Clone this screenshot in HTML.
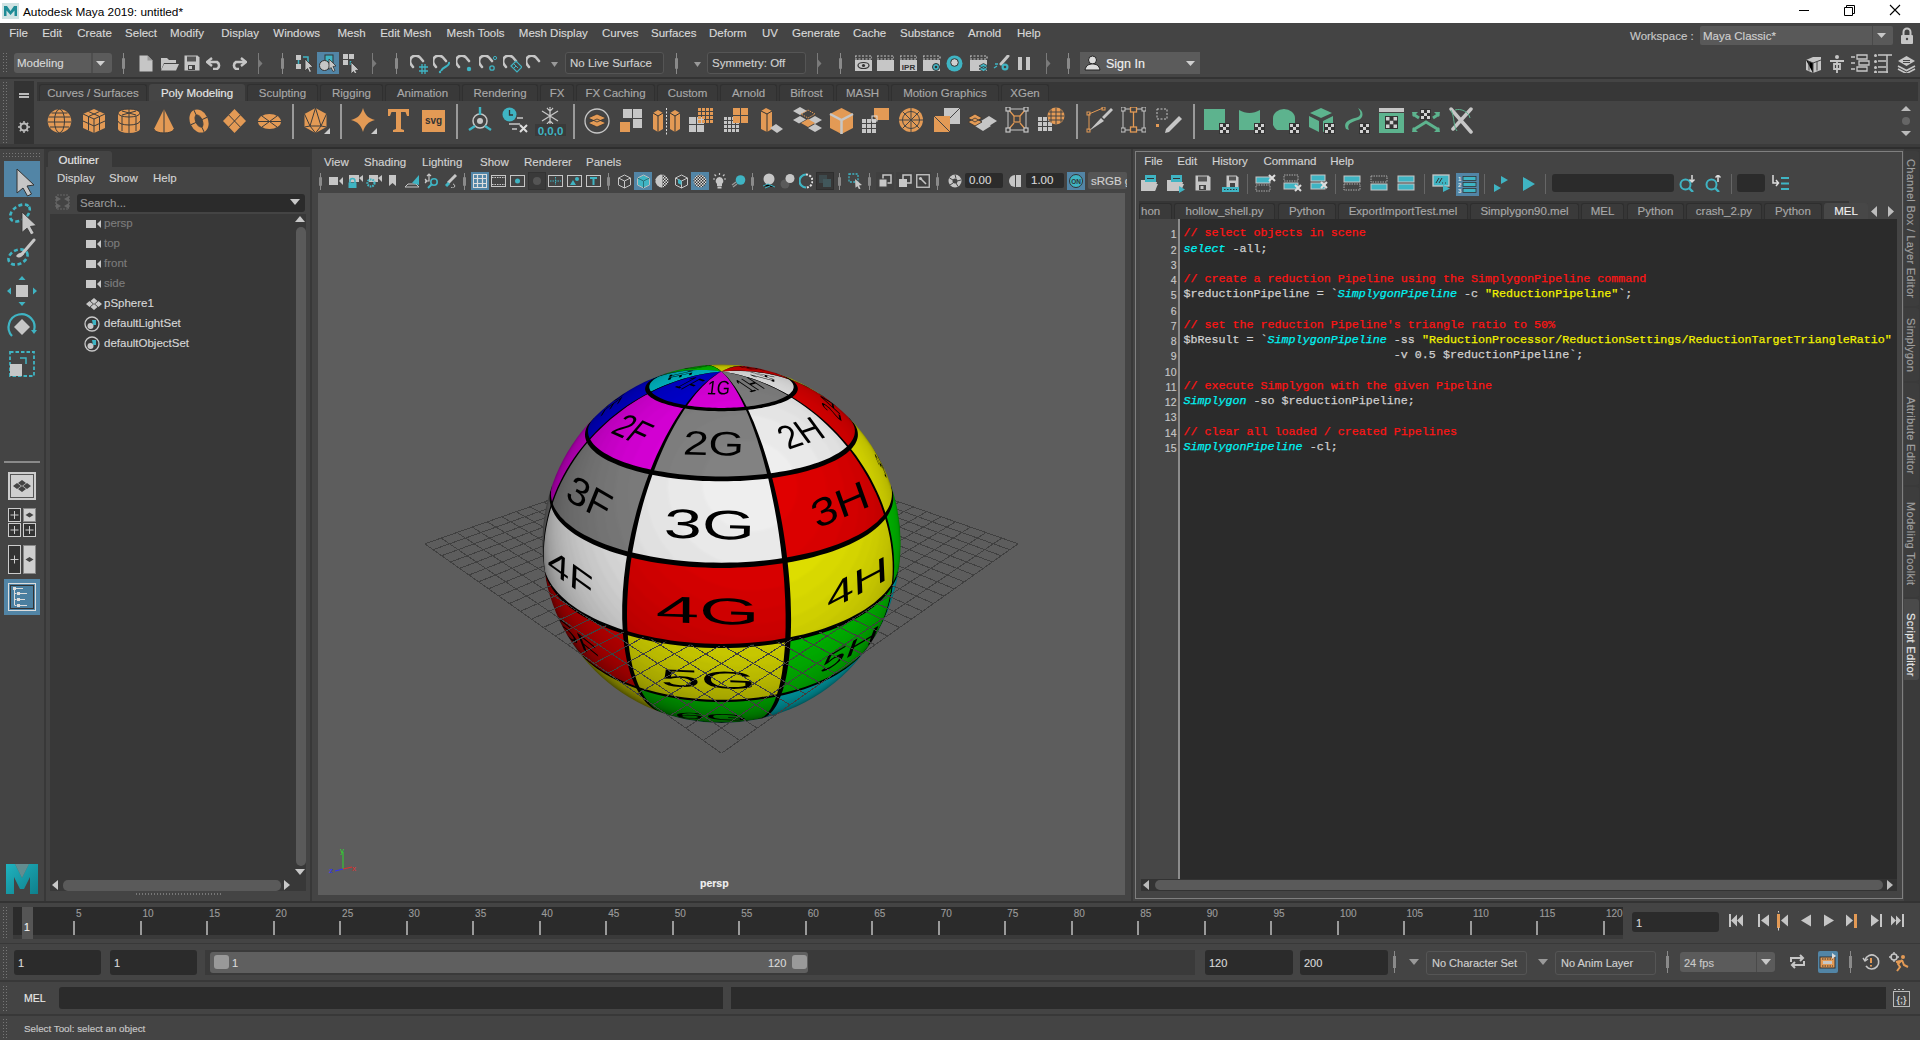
<!DOCTYPE html>
<html><head><meta charset="utf-8"><style>
html,body{margin:0;padding:0;width:1920px;height:1040px;overflow:hidden;background:#444;}
body{position:relative;font-family:"Liberation Sans",sans-serif;}
div,svg{position:absolute;box-sizing:border-box;}
.t{white-space:pre;line-height:1;-webkit-text-stroke:0.15px currentColor;}
.m{font-family:"Liberation Mono",monospace;-webkit-text-stroke:0.25px currentColor;}
</style></head><body>
<div style="left:0px;top:0px;width:1920px;height:23px;background:#ffffff;"></div>
<svg style="left:2px;top:3px;" width="17" height="16" viewBox="0 0 17 16"><rect width="17" height="16" fill="#cfe3e3"/><path d="M2 13V3h3l3.5 5L12 3h3v10h-2.5V7.5L8.5 12 4.5 7.5V13z" fill="#1e8c96"/></svg>
<div class="t" style="left:23.0px;top:6.8px;font-size:11.8px;color:#000;-webkit-text-stroke:0;">Autodesk Maya 2019: untitled*</div>
<svg style="left:1795px;top:3px;" width="110" height="15" viewBox="0 0 110 15"><path d="M4 7.5h10" stroke="#000" stroke-width="1"/><path d="M49.5 4.5h8v8h-8z M51.5 4.5v-2h8v8h-2" stroke="#000" stroke-width="1" fill="none"/><path d="M95 2l10 10M105 2L95 12" stroke="#000" stroke-width="1.1"/></svg>
<div style="left:0px;top:23px;width:1920px;height:54px;background:#444444;"></div>
<div class="t" style="left:9.3px;top:28.3px;font-size:11.5px;color:#d8d8d8;">File</div>
<div class="t" style="left:42.2px;top:28.3px;font-size:11.5px;color:#d8d8d8;">Edit</div>
<div class="t" style="left:77.3px;top:28.3px;font-size:11.5px;color:#d8d8d8;">Create</div>
<div class="t" style="left:125.1px;top:28.3px;font-size:11.5px;color:#d8d8d8;">Select</div>
<div class="t" style="left:170.1px;top:28.3px;font-size:11.5px;color:#d8d8d8;">Modify</div>
<div class="t" style="left:221.3px;top:28.3px;font-size:11.5px;color:#d8d8d8;">Display</div>
<div class="t" style="left:273.3px;top:28.3px;font-size:11.5px;color:#d8d8d8;">Windows</div>
<div class="t" style="left:337.5px;top:28.3px;font-size:11.5px;color:#d8d8d8;">Mesh</div>
<div class="t" style="left:380.2px;top:28.3px;font-size:11.5px;color:#d8d8d8;">Edit Mesh</div>
<div class="t" style="left:446.6px;top:28.3px;font-size:11.5px;color:#d8d8d8;">Mesh Tools</div>
<div class="t" style="left:518.8px;top:28.3px;font-size:11.5px;color:#d8d8d8;">Mesh Display</div>
<div class="t" style="left:602.0px;top:28.3px;font-size:11.5px;color:#d8d8d8;">Curves</div>
<div class="t" style="left:651.0px;top:28.3px;font-size:11.5px;color:#d8d8d8;">Surfaces</div>
<div class="t" style="left:709.0px;top:28.3px;font-size:11.5px;color:#d8d8d8;">Deform</div>
<div class="t" style="left:762.0px;top:28.3px;font-size:11.5px;color:#d8d8d8;">UV</div>
<div class="t" style="left:792.0px;top:28.3px;font-size:11.5px;color:#d8d8d8;">Generate</div>
<div class="t" style="left:853.0px;top:28.3px;font-size:11.5px;color:#d8d8d8;">Cache</div>
<div class="t" style="left:900.0px;top:28.3px;font-size:11.5px;color:#d8d8d8;">Substance</div>
<div class="t" style="left:968.0px;top:28.3px;font-size:11.5px;color:#d8d8d8;">Arnold</div>
<div class="t" style="left:1017.0px;top:28.3px;font-size:11.5px;color:#d8d8d8;">Help</div>
<div class="t" style="left:1630.0px;top:30.8px;font-size:11.5px;color:#c8c8c8;">Workspace :</div>
<div style="left:1700px;top:26px;width:193px;height:19px;background:#595959;border-radius:2px;"></div>
<div style="left:1872px;top:26px;width:1px;height:19px;background:#4a4a4a;"></div>
<div class="t" style="left:1703.0px;top:30.8px;font-size:11.5px;color:#d0d0d0;">Maya Classic*</div>
<div style="left:2px;top:52px;width:6px;height:21px;background-image:radial-gradient(circle,#777 0.8px,transparent 1px);background-size:3px 3px;"></div>
<div style="left:14px;top:53px;width:98px;height:20px;background:#5b5b5b;border-radius:3px;"></div>
<div style="left:91px;top:53px;width:2px;height:20px;background:#4e4e4e;"></div>
<div class="t" style="left:17.0px;top:57.8px;font-size:11.5px;color:#d8d8d8;">Modeling</div>
<div style="left:0px;top:77px;width:1920px;height:2px;background:#333;"></div>
<div style="left:0px;top:79px;width:1920px;height:67px;background:#444444;"></div>
<div style="left:2px;top:81px;width:6px;height:62px;background-image:radial-gradient(circle,#777 0.8px,transparent 1px);background-size:3px 3px;"></div>
<div style="left:14px;top:81px;width:20px;height:63px;background:#333333;"></div>
<div style="left:37px;top:82px;width:1881px;height:19px;background:#373737;"></div>
<div style="left:39px;top:84px;width:108px;height:17px;background:#393939;border-radius:3px 3px 0 0;border:1px solid #303030;border-bottom:none;"></div>
<div class="t" style="left:93.0px;top:87.8px;font-size:11.5px;color:#a8a8a8;transform:translateX(-50%);">Curves / Surfaces</div>
<div style="left:149px;top:84px;width:96px;height:17px;background:#454545;border-radius:3px 3px 0 0;"></div>
<div class="t" style="left:197.0px;top:87.8px;font-size:11.5px;color:#e6e6e6;transform:translateX(-50%);">Poly Modeling</div>
<div style="left:247px;top:84px;width:71px;height:17px;background:#393939;border-radius:3px 3px 0 0;border:1px solid #303030;border-bottom:none;"></div>
<div class="t" style="left:282.5px;top:87.8px;font-size:11.5px;color:#a8a8a8;transform:translateX(-50%);">Sculpting</div>
<div style="left:320px;top:84px;width:63px;height:17px;background:#393939;border-radius:3px 3px 0 0;border:1px solid #303030;border-bottom:none;"></div>
<div class="t" style="left:351.5px;top:87.8px;font-size:11.5px;color:#a8a8a8;transform:translateX(-50%);">Rigging</div>
<div style="left:385px;top:84px;width:75px;height:17px;background:#393939;border-radius:3px 3px 0 0;border:1px solid #303030;border-bottom:none;"></div>
<div class="t" style="left:422.5px;top:87.8px;font-size:11.5px;color:#a8a8a8;transform:translateX(-50%);">Animation</div>
<div style="left:462px;top:84px;width:76px;height:17px;background:#393939;border-radius:3px 3px 0 0;border:1px solid #303030;border-bottom:none;"></div>
<div class="t" style="left:500.0px;top:87.8px;font-size:11.5px;color:#a8a8a8;transform:translateX(-50%);">Rendering</div>
<div style="left:540px;top:84px;width:34px;height:17px;background:#393939;border-radius:3px 3px 0 0;border:1px solid #303030;border-bottom:none;"></div>
<div class="t" style="left:557.0px;top:87.8px;font-size:11.5px;color:#a8a8a8;transform:translateX(-50%);">FX</div>
<div style="left:576px;top:84px;width:79px;height:17px;background:#393939;border-radius:3px 3px 0 0;border:1px solid #303030;border-bottom:none;"></div>
<div class="t" style="left:615.5px;top:87.8px;font-size:11.5px;color:#a8a8a8;transform:translateX(-50%);">FX Caching</div>
<div style="left:657px;top:84px;width:61px;height:17px;background:#393939;border-radius:3px 3px 0 0;border:1px solid #303030;border-bottom:none;"></div>
<div class="t" style="left:687.5px;top:87.8px;font-size:11.5px;color:#a8a8a8;transform:translateX(-50%);">Custom</div>
<div style="left:720px;top:84px;width:57px;height:17px;background:#393939;border-radius:3px 3px 0 0;border:1px solid #303030;border-bottom:none;"></div>
<div class="t" style="left:748.5px;top:87.8px;font-size:11.5px;color:#a8a8a8;transform:translateX(-50%);">Arnold</div>
<div style="left:779px;top:84px;width:55px;height:17px;background:#393939;border-radius:3px 3px 0 0;border:1px solid #303030;border-bottom:none;"></div>
<div class="t" style="left:806.5px;top:87.8px;font-size:11.5px;color:#a8a8a8;transform:translateX(-50%);">Bifrost</div>
<div style="left:836px;top:84px;width:53px;height:17px;background:#393939;border-radius:3px 3px 0 0;border:1px solid #303030;border-bottom:none;"></div>
<div class="t" style="left:862.5px;top:87.8px;font-size:11.5px;color:#a8a8a8;transform:translateX(-50%);">MASH</div>
<div style="left:891px;top:84px;width:108px;height:17px;background:#393939;border-radius:3px 3px 0 0;border:1px solid #303030;border-bottom:none;"></div>
<div class="t" style="left:945.0px;top:87.8px;font-size:11.5px;color:#a8a8a8;transform:translateX(-50%);">Motion Graphics</div>
<div style="left:1001px;top:84px;width:48px;height:17px;background:#393939;border-radius:3px 3px 0 0;border:1px solid #303030;border-bottom:none;"></div>
<div class="t" style="left:1025.0px;top:87.8px;font-size:11.5px;color:#a8a8a8;transform:translateX(-50%);">XGen</div>
<div style="left:0px;top:144px;width:1920px;height:3px;background:#3b3b3b;"></div>
<div style="left:0px;top:147px;width:1920px;height:2px;background:#2e2e2e;"></div>
<div style="left:0px;top:149px;width:44px;height:752px;background:#444444;"></div>
<div style="left:44px;top:149px;width:2px;height:752px;background:#383838;"></div>
<div style="left:2px;top:152px;width:40px;height:5px;background-image:radial-gradient(circle,#777 0.8px,transparent 1px);background-size:3px 3px;"></div>
<div style="left:4px;top:161px;width:36px;height:36px;background:#5285a6;"></div>
<div style="left:4px;top:461px;width:36px;height:2px;background:#8a8a8a;"></div>
<div style="left:4px;top:579px;width:36px;height:36px;background:#5285a6;"></div>
<div style="left:46px;top:149px;width:264px;height:752px;background:#444444;"></div>
<div style="left:46px;top:149px;width:265px;height:18px;background:#373737;"></div>
<div style="left:48px;top:151px;width:64px;height:16px;background:#444444;border-radius:3px 3px 0 0;"></div>
<div class="t" style="left:58.5px;top:154.8px;font-size:11.5px;color:#e6e6e6;">Outliner</div>
<div class="t" style="left:57.0px;top:172.8px;font-size:11.5px;color:#d2d2d2;">Display</div>
<div class="t" style="left:109.0px;top:172.8px;font-size:11.5px;color:#d2d2d2;">Show</div>
<div class="t" style="left:153.0px;top:172.8px;font-size:11.5px;color:#d2d2d2;">Help</div>
<div style="left:77px;top:194px;width:228px;height:18px;background:#2b2b2b;border-radius:3px;"></div>
<div class="t" style="left:80.0px;top:198.3px;font-size:11.5px;color:#9a9a9a;">Search...</div>
<div style="left:50px;top:214px;width:256px;height:677px;background:#383838;"></div>
<div class="t" style="left:104.0px;top:217.8px;font-size:11.5px;color:#7c7c7c;">persp</div>
<div class="t" style="left:104.0px;top:237.8px;font-size:11.5px;color:#7c7c7c;">top</div>
<div class="t" style="left:104.0px;top:257.8px;font-size:11.5px;color:#7c7c7c;">front</div>
<div class="t" style="left:104.0px;top:277.8px;font-size:11.5px;color:#7c7c7c;">side</div>
<div class="t" style="left:104.0px;top:297.8px;font-size:11.5px;color:#d6d6d6;">pSphere1</div>
<div class="t" style="left:104.0px;top:317.8px;font-size:11.5px;color:#d6d6d6;">defaultLightSet</div>
<div class="t" style="left:104.0px;top:337.8px;font-size:11.5px;color:#d6d6d6;">defaultObjectSet</div>
<div style="left:296px;top:227px;width:10px;height:639px;background:#5a5a5a;border-radius:5px;"></div>
<div style="left:63px;top:880px;width:218px;height:11px;background:#5a5a5a;border-radius:5px;"></div>
<div style="left:135px;top:893px;width:86px;height:2px;background-image:radial-gradient(circle,#777 0.7px,transparent 0.9px);background-size:3px 2px;"></div>
<div style="left:310px;top:149px;width:2px;height:752px;background:#383838;"></div>
<div style="left:312px;top:149px;width:819px;height:752px;background:#444444;"></div>
<div class="t" style="left:324.0px;top:156.8px;font-size:11.5px;color:#d2d2d2;">View</div>
<div class="t" style="left:364.0px;top:156.8px;font-size:11.5px;color:#d2d2d2;">Shading</div>
<div class="t" style="left:422.0px;top:156.8px;font-size:11.5px;color:#d2d2d2;">Lighting</div>
<div class="t" style="left:480.0px;top:156.8px;font-size:11.5px;color:#d2d2d2;">Show</div>
<div class="t" style="left:524.0px;top:156.8px;font-size:11.5px;color:#d2d2d2;">Renderer</div>
<div class="t" style="left:586.0px;top:156.8px;font-size:11.5px;color:#d2d2d2;">Panels</div>
<div style="left:318px;top:193px;width:807px;height:702px;background:#5d5d5d;"></div>
<div style="left:1131px;top:149px;width:2px;height:752px;background:#383838;"></div>
<div style="left:1133px;top:149px;width:771px;height:752px;background:#444444;"></div>
<div style="left:1135px;top:151px;width:768px;height:748px;border:1px solid #7f7f7f;"></div>
<div class="t" style="left:1144.2px;top:156.3px;font-size:11.5px;color:#d2d2d2;">File</div>
<div class="t" style="left:1177.3px;top:156.3px;font-size:11.5px;color:#d2d2d2;">Edit</div>
<div class="t" style="left:1212.0px;top:156.3px;font-size:11.5px;color:#d2d2d2;">History</div>
<div class="t" style="left:1263.4px;top:156.3px;font-size:11.5px;color:#d2d2d2;">Command</div>
<div class="t" style="left:1330.3px;top:156.3px;font-size:11.5px;color:#d2d2d2;">Help</div>
<div style="left:1552px;top:174px;width:122px;height:18px;background:#2b2b2b;border-radius:3px;"></div>
<div style="left:1737px;top:174px;width:28px;height:18px;background:#2b2b2b;border-radius:3px;"></div>
<div style="left:1139px;top:201px;width:710px;height:18px;background:#363636;"></div>
<div style="left:1139px;top:203px;width:33px;height:16px;background:#3a3a3a;border:1px solid #2e2e2e;border-bottom:none;border-radius:3px 3px 0 0;"></div>
<div class="t" style="left:1141.0px;top:205.8px;font-size:11.5px;color:#a8a8a8;">hon</div>
<div style="left:1174px;top:203px;width:101px;height:16px;background:#3a3a3a;border:1px solid #2e2e2e;border-bottom:none;border-radius:3px 3px 0 0;"></div>
<div class="t" style="left:1224.5px;top:205.8px;font-size:11.5px;color:#a8a8a8;transform:translateX(-50%);">hollow_shell.py</div>
<div style="left:1278px;top:203px;width:58px;height:16px;background:#3a3a3a;border:1px solid #2e2e2e;border-bottom:none;border-radius:3px 3px 0 0;"></div>
<div class="t" style="left:1307.0px;top:205.8px;font-size:11.5px;color:#a8a8a8;transform:translateX(-50%);">Python</div>
<div style="left:1338px;top:203px;width:130px;height:16px;background:#3a3a3a;border:1px solid #2e2e2e;border-bottom:none;border-radius:3px 3px 0 0;"></div>
<div class="t" style="left:1403.0px;top:205.8px;font-size:11.5px;color:#a8a8a8;transform:translateX(-50%);">ExportImportTest.mel</div>
<div style="left:1470px;top:203px;width:109px;height:16px;background:#3a3a3a;border:1px solid #2e2e2e;border-bottom:none;border-radius:3px 3px 0 0;"></div>
<div class="t" style="left:1524.5px;top:205.8px;font-size:11.5px;color:#a8a8a8;transform:translateX(-50%);">Simplygon90.mel</div>
<div style="left:1581px;top:203px;width:43px;height:16px;background:#3a3a3a;border:1px solid #2e2e2e;border-bottom:none;border-radius:3px 3px 0 0;"></div>
<div class="t" style="left:1602.5px;top:205.8px;font-size:11.5px;color:#a8a8a8;transform:translateX(-50%);">MEL</div>
<div style="left:1627px;top:203px;width:57px;height:16px;background:#3a3a3a;border:1px solid #2e2e2e;border-bottom:none;border-radius:3px 3px 0 0;"></div>
<div class="t" style="left:1655.5px;top:205.8px;font-size:11.5px;color:#a8a8a8;transform:translateX(-50%);">Python</div>
<div style="left:1686px;top:203px;width:76px;height:16px;background:#3a3a3a;border:1px solid #2e2e2e;border-bottom:none;border-radius:3px 3px 0 0;"></div>
<div class="t" style="left:1724.0px;top:205.8px;font-size:11.5px;color:#a8a8a8;transform:translateX(-50%);">crash_2.py</div>
<div style="left:1764px;top:203px;width:58px;height:16px;background:#3a3a3a;border:1px solid #2e2e2e;border-bottom:none;border-radius:3px 3px 0 0;"></div>
<div class="t" style="left:1793.0px;top:205.8px;font-size:11.5px;color:#a8a8a8;transform:translateX(-50%);">Python</div>
<div style="left:1824px;top:203px;width:44px;height:16px;background:#474747;border:1px solid #474747;border-bottom:none;border-radius:3px 3px 0 0;"></div>
<div class="t" style="left:1846.0px;top:205.8px;font-size:11.5px;color:#f0f0f0;transform:translateX(-50%);">MEL</div>
<div style="left:1140px;top:219px;width:757px;height:660px;background:#2b2b2b;"></div>
<div style="left:1140px;top:219px;width:38px;height:660px;background:#474747;"></div>
<div style="left:1178px;top:219px;width:2px;height:660px;background:#8c8c8c;"></div>
<div style="left:1141px;top:879px;width:756px;height:12px;background:#333;"></div>
<div style="left:1155px;top:880px;width:728px;height:10px;background:#5a5a5a;border-radius:5px;"></div>
<div style="left:1904px;top:149px;width:16px;height:753px;background:#3a3a3a;"></div>
<div style="left:0px;top:901px;width:1920px;height:2px;background:#333;"></div>
<div style="left:0px;top:903px;width:1920px;height:39px;background:#444444;"></div>
<div style="left:2px;top:906px;width:6px;height:32px;background-image:radial-gradient(circle,#777 0.8px,transparent 1px);background-size:3px 3px;"></div>
<div style="left:13px;top:907px;width:1610px;height:32px;background:#3a3a3a;"></div>
<div style="left:13px;top:907px;width:1610px;height:28px;background:#2b2b2b;"></div>
<div style="left:22px;top:907px;width:11px;height:32px;background:#555;"></div>
<div style="left:0px;top:943px;width:1920px;height:2px;background:#383838;"></div>
<div style="left:0px;top:944px;width:1920px;height:37px;background:#444444;"></div>
<div style="left:2px;top:946px;width:6px;height:32px;background-image:radial-gradient(circle,#777 0.8px,transparent 1px);background-size:3px 3px;"></div>
<div style="left:14px;top:950px;width:87px;height:25px;background:#2b2b2b;border-radius:3px;"></div>
<div style="left:110px;top:950px;width:87px;height:25px;background:#2b2b2b;border-radius:3px;"></div>
<div style="left:205px;top:950px;width:990px;height:25px;background:#3a3a3a;"></div>
<div style="left:210px;top:952px;width:598px;height:21px;background:#5f5f5f;border-radius:3px;"></div>
<div style="left:214px;top:955px;width:15px;height:14px;background:#999;border-radius:3px;"></div>
<div style="left:792px;top:955px;width:15px;height:14px;background:#999;border-radius:3px;"></div>
<div class="t" style="left:232.0px;top:957.7px;font-size:11px;color:#d8d8d8;">1</div>
<div class="t" style="left:768.0px;top:957.7px;font-size:11px;color:#d8d8d8;">120</div>
<div style="left:1205px;top:950px;width:88px;height:25px;background:#2b2b2b;border-radius:3px;"></div>
<div style="left:1300px;top:950px;width:88px;height:25px;background:#2b2b2b;border-radius:3px;"></div>
<div class="t" style="left:1209.0px;top:957.7px;font-size:11px;color:#d8d8d8;">120</div>
<div class="t" style="left:1304.0px;top:957.7px;font-size:11px;color:#d8d8d8;">200</div>
<div class="t" style="left:18.0px;top:957.7px;font-size:11px;color:#d8d8d8;">1</div>
<div class="t" style="left:114.0px;top:957.7px;font-size:11px;color:#d8d8d8;">1</div>
<div style="left:1426px;top:951px;width:101px;height:24px;border:1px solid #555;border-radius:3px;"></div>
<div class="t" style="left:1432.0px;top:957.7px;font-size:11px;color:#d0d0d0;">No Character Set</div>
<div style="left:1555px;top:951px;width:101px;height:24px;border:1px solid #555;border-radius:3px;"></div>
<div class="t" style="left:1561.0px;top:957.7px;font-size:11px;color:#d0d0d0;">No Anim Layer</div>
<div style="left:1680px;top:952px;width:95px;height:20px;background:#5b5b5b;border-radius:3px;"></div>
<div style="left:1756px;top:952px;width:1px;height:20px;background:#4a4a4a;"></div>
<div class="t" style="left:1684.0px;top:957.7px;font-size:11px;color:#c8c8c8;">24 fps</div>
<div style="left:1818px;top:951px;width:20px;height:22px;background:#5285a6;border-radius:2px;"></div>
<div style="left:0px;top:980px;width:1920px;height:2px;background:#383838;"></div>
<div style="left:0px;top:982px;width:1920px;height:33px;background:#444444;"></div>
<div style="left:2px;top:985px;width:6px;height:26px;background-image:radial-gradient(circle,#777 0.8px,transparent 1px);background-size:3px 3px;"></div>
<div class="t" style="left:24.0px;top:993.1px;font-size:10.5px;color:#e8e8e8;">MEL</div>
<div style="left:59px;top:987px;width:664px;height:22px;background:#2b2b2b;border-radius:3px 0 0 3px;"></div>
<div style="left:731px;top:987px;width:1155px;height:22px;background:#2b2b2b;"></div>
<div style="left:0px;top:1014px;width:1920px;height:2px;background:#383838;"></div>
<div style="left:0px;top:1016px;width:1920px;height:24px;background:#444444;"></div>
<div style="left:2px;top:1018px;width:6px;height:20px;background-image:radial-gradient(circle,#777 0.8px,transparent 1px);background-size:3px 3px;"></div>
<div class="t" style="left:24.0px;top:1023.7px;font-size:9.8px;color:#c8c8c8;">Select Tool: select an object</div>
<div style="left:73px;top:921px;width:2px;height:14px;background:#9a9a9a;"></div>
<div class="t" style="left:76.0px;top:909.0px;font-size:10px;color:#9a9a9a;">5</div>
<div style="left:140px;top:921px;width:2px;height:14px;background:#9a9a9a;"></div>
<div class="t" style="left:142.5px;top:909.0px;font-size:10px;color:#9a9a9a;">10</div>
<div style="left:206px;top:921px;width:2px;height:14px;background:#9a9a9a;"></div>
<div class="t" style="left:209.0px;top:909.0px;font-size:10px;color:#9a9a9a;">15</div>
<div style="left:273px;top:921px;width:2px;height:14px;background:#9a9a9a;"></div>
<div class="t" style="left:275.6px;top:909.0px;font-size:10px;color:#9a9a9a;">20</div>
<div style="left:339px;top:921px;width:2px;height:14px;background:#9a9a9a;"></div>
<div class="t" style="left:342.1px;top:909.0px;font-size:10px;color:#9a9a9a;">25</div>
<div style="left:406px;top:921px;width:2px;height:14px;background:#9a9a9a;"></div>
<div class="t" style="left:408.6px;top:909.0px;font-size:10px;color:#9a9a9a;">30</div>
<div style="left:472px;top:921px;width:2px;height:14px;background:#9a9a9a;"></div>
<div class="t" style="left:475.1px;top:909.0px;font-size:10px;color:#9a9a9a;">35</div>
<div style="left:539px;top:921px;width:2px;height:14px;background:#9a9a9a;"></div>
<div class="t" style="left:541.6px;top:909.0px;font-size:10px;color:#9a9a9a;">40</div>
<div style="left:605px;top:921px;width:2px;height:14px;background:#9a9a9a;"></div>
<div class="t" style="left:608.2px;top:909.0px;font-size:10px;color:#9a9a9a;">45</div>
<div style="left:672px;top:921px;width:2px;height:14px;background:#9a9a9a;"></div>
<div class="t" style="left:674.7px;top:909.0px;font-size:10px;color:#9a9a9a;">50</div>
<div style="left:738px;top:921px;width:2px;height:14px;background:#9a9a9a;"></div>
<div class="t" style="left:741.2px;top:909.0px;font-size:10px;color:#9a9a9a;">55</div>
<div style="left:805px;top:921px;width:2px;height:14px;background:#9a9a9a;"></div>
<div class="t" style="left:807.7px;top:909.0px;font-size:10px;color:#9a9a9a;">60</div>
<div style="left:871px;top:921px;width:2px;height:14px;background:#9a9a9a;"></div>
<div class="t" style="left:874.2px;top:909.0px;font-size:10px;color:#9a9a9a;">65</div>
<div style="left:938px;top:921px;width:2px;height:14px;background:#9a9a9a;"></div>
<div class="t" style="left:940.8px;top:909.0px;font-size:10px;color:#9a9a9a;">70</div>
<div style="left:1004px;top:921px;width:2px;height:14px;background:#9a9a9a;"></div>
<div class="t" style="left:1007.3px;top:909.0px;font-size:10px;color:#9a9a9a;">75</div>
<div style="left:1071px;top:921px;width:2px;height:14px;background:#9a9a9a;"></div>
<div class="t" style="left:1073.8px;top:909.0px;font-size:10px;color:#9a9a9a;">80</div>
<div style="left:1137px;top:921px;width:2px;height:14px;background:#9a9a9a;"></div>
<div class="t" style="left:1140.3px;top:909.0px;font-size:10px;color:#9a9a9a;">85</div>
<div style="left:1204px;top:921px;width:2px;height:14px;background:#9a9a9a;"></div>
<div class="t" style="left:1206.8px;top:909.0px;font-size:10px;color:#9a9a9a;">90</div>
<div style="left:1270px;top:921px;width:2px;height:14px;background:#9a9a9a;"></div>
<div class="t" style="left:1273.4px;top:909.0px;font-size:10px;color:#9a9a9a;">95</div>
<div style="left:1337px;top:921px;width:2px;height:14px;background:#9a9a9a;"></div>
<div class="t" style="left:1339.9px;top:909.0px;font-size:10px;color:#9a9a9a;">100</div>
<div style="left:1403px;top:921px;width:2px;height:14px;background:#9a9a9a;"></div>
<div class="t" style="left:1406.4px;top:909.0px;font-size:10px;color:#9a9a9a;">105</div>
<div style="left:1470px;top:921px;width:2px;height:14px;background:#9a9a9a;"></div>
<div class="t" style="left:1472.9px;top:909.0px;font-size:10px;color:#9a9a9a;">110</div>
<div style="left:1536px;top:921px;width:2px;height:14px;background:#9a9a9a;"></div>
<div class="t" style="left:1539.4px;top:909.0px;font-size:10px;color:#9a9a9a;">115</div>
<div style="left:1603px;top:921px;width:2px;height:14px;background:#9a9a9a;"></div>
<div class="t" style="left:1606.0px;top:909.0px;font-size:10px;color:#9a9a9a;">120</div>
<div class="t" style="left:24.0px;top:922.1px;font-size:10.5px;color:#f0f0f0;">1</div>
<div style="left:1632px;top:912px;width:87px;height:20px;background:#2b2b2b;border-radius:3px;"></div>
<div class="t" style="left:1636.0px;top:917.7px;font-size:11px;color:#d8d8d8;">1</div>
<div class="t" style="right:743.5px;top:229.3px;font-size:10.5px;color:#c8c8c8;">1</div>
<div class="t m" style="left:1183.4px;top:228.3px;font-size:11.7px;color:#d0d0d0;"><span style="color:#ff1414;">// select objects in scene</span></div>
<div class="t" style="right:743.5px;top:244.6px;font-size:10.5px;color:#c8c8c8;">2</div>
<div class="t m" style="left:1183.4px;top:243.5px;font-size:11.7px;color:#d0d0d0;"><span style="color:#00f2f2;font-style:italic;">select</span><span style="color:#d0d0d0;"> -all;</span></div>
<div class="t" style="right:743.5px;top:259.8px;font-size:10.5px;color:#c8c8c8;">3</div>
<div class="t" style="right:743.5px;top:275.1px;font-size:10.5px;color:#c8c8c8;">4</div>
<div class="t m" style="left:1183.4px;top:274.0px;font-size:11.7px;color:#d0d0d0;"><span style="color:#ff1414;">// create a reduction Pipeline using the SimplygonPipeline command</span></div>
<div class="t" style="right:743.5px;top:290.3px;font-size:10.5px;color:#c8c8c8;">5</div>
<div class="t m" style="left:1183.4px;top:289.3px;font-size:11.7px;color:#d0d0d0;"><span style="color:#d0d0d0;">$reductionPipeline = `</span><span style="color:#00f2f2;font-style:italic;">SimplygonPipeline</span><span style="color:#d0d0d0;"> -c </span><span style="color:#f2f200;">&quot;ReductionPipeline&quot;</span><span style="color:#d0d0d0;">`;</span></div>
<div class="t" style="right:743.5px;top:305.6px;font-size:10.5px;color:#c8c8c8;">6</div>
<div class="t" style="right:743.5px;top:320.8px;font-size:10.5px;color:#c8c8c8;">7</div>
<div class="t m" style="left:1183.4px;top:319.8px;font-size:11.7px;color:#d0d0d0;"><span style="color:#ff1414;">// set the reduction Pipeline&#x27;s triangle ratio to 50%</span></div>
<div class="t" style="right:743.5px;top:336.1px;font-size:10.5px;color:#c8c8c8;">8</div>
<div class="t m" style="left:1183.4px;top:335.0px;font-size:11.7px;color:#d0d0d0;"><span style="color:#d0d0d0;">$bResult = `</span><span style="color:#00f2f2;font-style:italic;">SimplygonPipeline</span><span style="color:#d0d0d0;"> -ss </span><span style="color:#f2f200;">&quot;ReductionProcessor/ReductionSettings/ReductionTargetTriangleRatio&quot;</span></div>
<div class="t" style="right:743.5px;top:351.3px;font-size:10.5px;color:#c8c8c8;">9</div>
<div class="t m" style="left:1183.4px;top:350.3px;font-size:11.7px;color:#d0d0d0;"><span style="color:#d0d0d0;">                              -v 0.5 $reductionPipeline`;</span></div>
<div class="t" style="right:743.5px;top:366.6px;font-size:10.5px;color:#c8c8c8;">10</div>
<div class="t" style="right:743.5px;top:381.8px;font-size:10.5px;color:#c8c8c8;">11</div>
<div class="t m" style="left:1183.4px;top:380.8px;font-size:11.7px;color:#d0d0d0;"><span style="color:#ff1414;">// execute Simplygon with the given Pipeline</span></div>
<div class="t" style="right:743.5px;top:397.1px;font-size:10.5px;color:#c8c8c8;">12</div>
<div class="t m" style="left:1183.4px;top:396.0px;font-size:11.7px;color:#d0d0d0;"><span style="color:#00f2f2;font-style:italic;">Simplygon</span><span style="color:#d0d0d0;"> -so $reductionPipeline;</span></div>
<div class="t" style="right:743.5px;top:412.3px;font-size:10.5px;color:#c8c8c8;">13</div>
<div class="t" style="right:743.5px;top:427.6px;font-size:10.5px;color:#c8c8c8;">14</div>
<div class="t m" style="left:1183.4px;top:426.5px;font-size:11.7px;color:#d0d0d0;"><span style="color:#ff1414;">// clear all loaded / created Pipelines</span></div>
<div class="t" style="right:743.5px;top:442.8px;font-size:10.5px;color:#c8c8c8;">15</div>
<div class="t m" style="left:1183.4px;top:441.8px;font-size:11.7px;color:#d0d0d0;"><span style="color:#00f2f2;font-style:italic;">SimplygonPipeline</span><span style="color:#d0d0d0;"> -cl;</span></div>
<div style="left:123px;top:53px;width:1px;height:21px;background:#8a8a8a;"></div>
<div style="left:122px;top:58px;width:3px;height:11px;background:#8a8a8a;border-radius:1px;"></div>
<svg style="left:139px;top:55px;" width="14" height="17" viewBox="0 0 14 17"><path d="M0.5 0.5h8l5 5v11h-13z" fill="#c6c6c6"/><path d="M8.5 0.5v5h5" fill="#999"/></svg>
<svg style="left:160px;top:56px;" width="19" height="15" viewBox="0 0 19 15"><path d="M1 2h6l2 2h7v3H4l-3 7z" fill="#c6c6c6"/><path d="M4 8h15l-3 6.5H1z" fill="#c6c6c6"/></svg>
<svg style="left:184px;top:55px;" width="16" height="16" viewBox="0 0 16 16"><path d="M0.5 0.5h13l2 2v13h-15z" fill="#c6c6c6"/><rect x="3" y="1.5" width="9" height="5" fill="#555"/><rect x="4" y="10" width="7" height="5" fill="#444"/><rect x="5" y="11" width="3" height="3" fill="#c6c6c6"/></svg>
<svg style="left:206px;top:56px;" width="18" height="14" viewBox="0 0 18 14"><path d="M6 2L1 6l5 4" stroke="#c6c6c6" stroke-width="2.4" fill="none"/><path d="M2 6h9a4 4 0 0 1 0 7H7" stroke="#c6c6c6" stroke-width="2.6" fill="none"/></svg>
<svg style="left:229px;top:56px;" width="18" height="14" viewBox="0 0 18 14"><path d="M12 2l5 4-5 4" stroke="#c6c6c6" stroke-width="2.4" fill="none"/><path d="M16 6H7a4 4 0 0 0 0 7h3" stroke="#c6c6c6" stroke-width="2.6" fill="none"/></svg>
<svg style="left:258px;top:53px;" width="6" height="21" viewBox="0 0 6 21"><path d="M0.5 0v21" stroke="#7a7a7a"/><path d="M0.5 6l4 4.5-4 4.5z" fill="#7a7a7a"/></svg>
<div style="left:282px;top:53px;width:1px;height:21px;background:#8a8a8a;"></div>
<div style="left:281px;top:58px;width:3px;height:11px;background:#8a8a8a;border-radius:1px;"></div>
<svg style="left:296px;top:54px;" width="20" height="19" viewBox="0 0 20 19"><rect x="0" y="1" width="5" height="5" fill="#c6c6c6"/><rect x="0" y="10" width="5" height="5" fill="#c6c6c6"/><path d="M2.5 6v4M7 3h5v5" stroke="#3fb4c3" stroke-width="1.5" fill="none"/><path d="M9 5l8 8-3.5.5 2 4-2 1-2-4L9 17z" fill="#c6c6c6" stroke="#333" stroke-width=".8"/></svg>
<div style="left:317px;top:52px;width:22px;height:22px;background:#5285a6;"></div>
<svg style="left:318px;top:53px;" width="20" height="20" viewBox="0 0 20 20"><rect x="7" y="2" width="8" height="8" fill="#3fb4c3" stroke="#333" stroke-width="1"/><circle cx="6.5" cy="12.5" r="5" fill="#c6c6c6" stroke="#333" stroke-width="1"/><path d="M11 6l7 7-3 .5 2 4-2 1-2-4-2 2z" fill="#c6c6c6" stroke="#333" stroke-width=".8"/></svg>
<svg style="left:343px;top:54px;" width="18" height="19" viewBox="0 0 18 19"><rect x="0" y="0" width="5" height="5" fill="#c6c6c6"/><rect x="6" y="0" width="5" height="5" fill="#c6c6c6"/><rect x="0" y="6" width="5" height="5" fill="#c6c6c6"/><path d="M7.5 7v4" stroke="#3fb4c3" stroke-width="1.5"/><path d="M8 8l8 8-3.5.5 2 3.5-2 1-2-3.5L8 20z" fill="#c6c6c6" stroke="#333" stroke-width=".8"/></svg>
<svg style="left:372px;top:53px;" width="6" height="21" viewBox="0 0 6 21"><path d="M0.5 0v21" stroke="#7a7a7a"/><path d="M0.5 6l4 4.5-4 4.5z" fill="#7a7a7a"/></svg>
<div style="left:396px;top:53px;width:1px;height:21px;background:#8a8a8a;"></div>
<div style="left:395px;top:58px;width:3px;height:11px;background:#8a8a8a;border-radius:1px;"></div>
<svg style="left:410px;top:55px;" width="19" height="19" viewBox="0 0 19 19"><path d="M3 12L1.5 10A5.5 5.5 0 0 1 10 2.5L13 6" stroke="#c6c6c6" stroke-width="2.6" fill="none" stroke-linecap="round"/><path d="M9 12h9M9 16h9M12 9v10M15 9v10" stroke="#3fb4c3" stroke-width="1.3"/></svg>
<svg style="left:433px;top:55px;" width="19" height="19" viewBox="0 0 19 19"><path d="M3 12L1.5 10A5.5 5.5 0 0 1 10 2.5L13 6" stroke="#c6c6c6" stroke-width="2.6" fill="none" stroke-linecap="round"/><path d="M16 7c1 5-6 4-8 9" stroke="#3fb4c3" stroke-width="2" fill="none"/><circle cx="7" cy="17" r="1.2" fill="#3fb4c3"/></svg>
<svg style="left:456px;top:55px;" width="19" height="19" viewBox="0 0 19 19"><path d="M3 12L1.5 10A5.5 5.5 0 0 1 10 2.5L13 6" stroke="#c6c6c6" stroke-width="2.6" fill="none" stroke-linecap="round"/><circle cx="13" cy="14" r="2.2" fill="#3fb4c3"/></svg>
<svg style="left:479px;top:55px;" width="19" height="19" viewBox="0 0 19 19"><path d="M3 12L1.5 10A5.5 5.5 0 0 1 10 2.5L13 6" stroke="#c6c6c6" stroke-width="2.6" fill="none" stroke-linecap="round"/><circle cx="13" cy="13" r="2.2" fill="none" stroke="#3fb4c3" stroke-width="1.3"/><circle cx="16" cy="3" r="1.6" fill="none" stroke="#3fb4c3" stroke-width="1"/></svg>
<svg style="left:503px;top:55px;" width="19" height="19" viewBox="0 0 19 19"><path d="M3 12L1.5 10A5.5 5.5 0 0 1 10 2.5L13 6" stroke="#c6c6c6" stroke-width="2.6" fill="none" stroke-linecap="round"/><path d="M8 11l5-5 6 6-5 5z" stroke="#3fb4c3" stroke-width="1.2" fill="none"/><path d="M11 9l4 4M13 11l-2 2" stroke="#3fb4c3" stroke-width="1"/></svg>
<svg style="left:526px;top:55px;" width="19" height="19" viewBox="0 0 19 19"><path d="M3 12L1.5 10A5.5 5.5 0 0 1 10 2.5L13 6" stroke="#c6c6c6" stroke-width="2.6" fill="none" stroke-linecap="round"/></svg>
<svg style="left:551px;top:62px;" width="7" height="5" viewBox="0 0 7 5"><path d="M0 0h7l-3.5 5z" fill="#9a9a9a"/></svg>
<div style="left:565px;top:52px;width:99px;height:22px;background:#3e3e3e;border:1px solid #555;border-radius:3px;"></div>
<div class="t" style="left:570.0px;top:57.8px;font-size:11.5px;color:#d0d0d0;">No Live Surface</div>
<div style="left:676px;top:53px;width:1px;height:21px;background:#8a8a8a;"></div>
<div style="left:675px;top:58px;width:3px;height:11px;background:#8a8a8a;border-radius:1px;"></div>
<svg style="left:694px;top:62px;" width="7" height="5" viewBox="0 0 7 5"><path d="M0 0h7l-3.5 5z" fill="#9a9a9a"/></svg>
<div style="left:707px;top:52px;width:99px;height:22px;background:#3e3e3e;border:1px solid #555;border-radius:3px;"></div>
<div class="t" style="left:712.0px;top:57.8px;font-size:11.5px;color:#d0d0d0;">Symmetry: Off</div>
<svg style="left:817px;top:53px;" width="6" height="21" viewBox="0 0 6 21"><path d="M0.5 0v21" stroke="#7a7a7a"/><path d="M0.5 6l4 4.5-4 4.5z" fill="#7a7a7a"/></svg>
<div style="left:840px;top:53px;width:1px;height:21px;background:#8a8a8a;"></div>
<div style="left:839px;top:58px;width:3px;height:11px;background:#8a8a8a;border-radius:1px;"></div>
<svg style="left:855px;top:55px;" width="17" height="17" viewBox="0 0 17 17"><rect x="0" y="1" width="17" height="3" fill="none" stroke="#c6c6c6" stroke-width="1.2" stroke-dasharray="2 1.5"/><rect x="0" y="5" width="17" height="11" fill="#c6c6c6"/><ellipse cx="8.5" cy="10.5" rx="5.5" ry="3" fill="none" stroke="#333" stroke-width="1.2"/><circle cx="8.5" cy="10.5" r="1.6" fill="#333"/></svg>
<svg style="left:877px;top:55px;" width="17" height="17" viewBox="0 0 17 17"><rect x="0" y="1" width="17" height="3" fill="none" stroke="#c6c6c6" stroke-width="1.2" stroke-dasharray="2 1.5"/><rect x="0" y="5" width="17" height="11" fill="#c6c6c6"/></svg>
<svg style="left:900px;top:55px;" width="17" height="17" viewBox="0 0 17 17"><rect x="0" y="1" width="17" height="3" fill="none" stroke="#c6c6c6" stroke-width="1.2" stroke-dasharray="2 1.5"/><rect x="0" y="5" width="17" height="11" fill="#c6c6c6"/><text x="8.5" y="14.5" font-size="8" font-weight="bold" text-anchor="middle" fill="#333">IPR</text></svg>
<svg style="left:923px;top:55px;" width="18" height="17" viewBox="0 0 18 17"><rect x="0" y="1" width="17" height="3" fill="none" stroke="#c6c6c6" stroke-width="1.2" stroke-dasharray="2 1.5"/><rect x="0" y="5" width="17" height="11" fill="#c6c6c6"/><circle cx="13" cy="12" r="3.5" fill="#3fb4c3" stroke="#333" stroke-width="1"/><circle cx="13" cy="12" r="1.3" fill="#333"/></svg>
<svg style="left:946px;top:55px;" width="17" height="17" viewBox="0 0 17 17"><circle cx="8.5" cy="8.5" r="8" fill="#3fb4c3"/><circle cx="8.5" cy="7.5" r="3.8" fill="#cfcfcf" stroke="#333" stroke-width="1"/></svg>
<svg style="left:970px;top:55px;" width="18" height="17" viewBox="0 0 18 17"><rect x="0" y="1" width="17" height="3" fill="none" stroke="#c6c6c6" stroke-width="1.2" stroke-dasharray="2 1.5"/><rect x="0" y="5" width="17" height="11" fill="#c6c6c6"/><path d="M9 11l4.5-2.5L18 11l-4.5 2.5z M9 14l4.5-2.5L18 14l-4.5 2.5z" fill="#3fb4c3" stroke="#333" stroke-width=".8"/></svg>
<svg style="left:992px;top:55px;" width="19" height="17" viewBox="0 0 19 17"><path d="M16 1l-7 8" stroke="#c6c6c6" stroke-width="3" stroke-linecap="round"/><path d="M3 9h3M2 13l3-2" stroke="#3fb4c3" stroke-width="1.4"/><circle cx="13" cy="12" r="3.5" fill="#3fb4c3"/><circle cx="13" cy="12" r="1.3" fill="#444"/></svg>
<svg style="left:1018px;top:56px;" width="13" height="15" viewBox="0 0 13 15"><rect x="0" y="1" width="4" height="13" fill="#c6c6c6"/><rect x="8" y="1" width="4" height="13" fill="#c6c6c6"/></svg>
<svg style="left:1046px;top:53px;" width="6" height="21" viewBox="0 0 6 21"><path d="M0.5 0v21" stroke="#7a7a7a"/><path d="M0.5 6l4 4.5-4 4.5z" fill="#7a7a7a"/></svg>
<div style="left:1068px;top:53px;width:1px;height:21px;background:#8a8a8a;"></div>
<div style="left:1067px;top:58px;width:3px;height:11px;background:#8a8a8a;border-radius:1px;"></div>
<div style="left:1080px;top:52px;width:120px;height:22px;background:#5b5b5b;"></div>
<svg style="left:1084px;top:54px;" width="17" height="17" viewBox="0 0 17 17"><circle cx="8.5" cy="6" r="4" fill="#ddd" stroke="#222" stroke-width="1"/><path d="M1 16c1-5 4-6 7.5-6s6.5 1 7.5 6z" fill="#ddd" stroke="#222" stroke-width="1"/></svg>
<div class="t" style="left:1106.0px;top:57.9px;font-size:12.5px;color:#f0f0f0;">Sign In</div>
<svg style="left:1186px;top:61px;" width="9" height="5" viewBox="0 0 9 5"><path d="M0 0h9l-4.5 5z" fill="#d0d0d0"/></svg>
<svg style="left:1804px;top:54px;" width="19" height="19" viewBox="0 0 19 19"><path d="M2 6l7-3h8v13l-8 3-7-3z" fill="#c6c6c6"/><path d="M2 6l7 3v10M9 9l8-3M5 7.5v9M13 7.5v9" stroke="#444" stroke-width="1"/></svg>
<svg style="left:1828px;top:54px;" width="18" height="19" viewBox="0 0 18 19"><circle cx="9" cy="3" r="2" fill="#c6c6c6"/><path d="M2 7h14M9 6v13M6 10h6v5H6z" stroke="#c6c6c6" stroke-width="1.8" fill="none"/></svg>
<svg style="left:1851px;top:54px;" width="19" height="19" viewBox="0 0 19 19"><path d="M0 3h4M6 1h10v4H6zM0 9h4M8 7h10v4H8zM0 15h4M6 13h10v4H6z" stroke="#c6c6c6" stroke-width="1.3" fill="none"/></svg>
<svg style="left:1874px;top:54px;" width="18" height="19" viewBox="0 0 18 19"><path d="M4 1h14M4 7h8M4 13h8M4 18h10M13 1v18" stroke="#c6c6c6" stroke-width="1.5"/><circle cx="1.5" cy="1.5" r="1.5" fill="#c6c6c6"/><circle cx="1.5" cy="7.5" r="1.5" fill="#c6c6c6"/><circle cx="1.5" cy="13.5" r="1.5" fill="#c6c6c6"/><circle cx="1.5" cy="18" r="1.5" fill="#c6c6c6"/></svg>
<svg style="left:1897px;top:54px;" width="19" height="19" viewBox="0 0 19 19"><path d="M1 12l8.5 4.5L18 12M1 15l8.5 4.5L18 15" stroke="#c6c6c6" stroke-width="1.6" fill="none"/><path d="M1 7l8.5-5L18 7l-8.5 5z" fill="#c6c6c6"/><path d="M6 6.5h7M6 8.5h7" stroke="#444" stroke-width="1"/></svg>
<svg style="left:1877px;top:33px;" width="9" height="5" viewBox="0 0 9 5"><path d="M0 0h9l-4.5 5z" fill="#c8c8c8"/></svg>
<svg style="left:1900px;top:27px;" width="14" height="18" viewBox="0 0 14 18"><path d="M3.5 8V5a3.5 3.5 0 0 1 7 0v3" stroke="#c6c6c6" stroke-width="2" fill="none"/><rect x="1" y="8" width="12" height="9" rx="1" fill="#c6c6c6"/><circle cx="7" cy="12" r="1.2" fill="#444"/></svg>
<svg style="left:96px;top:61px;" width="9" height="5" viewBox="0 0 9 5"><path d="M0 0h9l-4.5 5z" fill="#d0d0d0"/></svg>
<svg style="left:47px;top:108px;" width="25" height="26" viewBox="0 0 25 26"><circle cx="12.5" cy="13" r="11.8" fill="#e39a55"/><g stroke="#3c3c3c" stroke-width="1" fill="none"><ellipse cx="12.5" cy="13" rx="5" ry="11.8"/><path d="M1.5 9h22M1 14h23M3 19h19M4.5 5h16"/></g></svg>
<svg style="left:82px;top:108px;" width="24" height="26" viewBox="0 0 24 26"><path d="M12 1l11 5v14l-11 5-11-5V6z" fill="#e39a55"/><g stroke="#3c3c3c" stroke-width="1" fill="none"><path d="M1 6l11 5 11-5M12 11v14M6.5 3.5l11 5M17.5 3.5l-11 5M1 13l11 5 11-5M6.5 8.5v14M17.5 8.5v14"/></g></svg>
<svg style="left:117px;top:108px;" width="24" height="26" viewBox="0 0 24 26"><path d="M1 5a11 4 0 0 1 22 0v16a11 4 0 0 1-22 0z" fill="#e39a55"/><g stroke="#3c3c3c" stroke-width="1" fill="none"><ellipse cx="12" cy="5" rx="11" ry="4"/><path d="M1 13a11 4 0 0 0 22 0M12 9v16M5 8v15M19 8v15M12 1v8M5 3l14 4M19 3L5 7"/></g></svg>
<svg style="left:153px;top:108px;" width="22" height="26" viewBox="0 0 22 26"><path d="M11 1L1 21a10 4 0 0 0 20 0z" fill="#e39a55"/><g stroke="#3c3c3c" stroke-width="1" fill="none"><path d="M11 1v24M1 21a10 4 0 0 0 20 0"/></g></svg>
<svg style="left:188px;top:108px;" width="22" height="26" viewBox="0 0 22 26"><g transform="rotate(-25 11 13)"><ellipse cx="11" cy="13" rx="9" ry="12" fill="#e39a55"/><ellipse cx="11" cy="13" rx="3.2" ry="6.5" fill="#444" stroke="#3c3c3c" stroke-width="1"/><path d="M11 1v5.5M11 19.5V25M2 13h5.8M14.2 13H20" stroke="#3c3c3c" stroke-width="1"/></g></svg>
<svg style="left:222px;top:108px;" width="25" height="26" viewBox="0 0 25 26"><path d="M12.5 1L24 13 12.5 25 1 13z" fill="#e39a55"/><g stroke="#3c3c3c" stroke-width="1" fill="none"><path d="M6.75 7l11.5 12M18.25 7L6.75 19"/></g></svg>
<svg style="left:257px;top:113px;" width="25" height="17" viewBox="0 0 25 17"><ellipse cx="12.5" cy="8.5" rx="11.5" ry="7.5" fill="#e39a55"/><g stroke="#3c3c3c" stroke-width="1" fill="none"><path d="M1 8.5h23M5 3l15 11M20 3L5 14"/></g></svg>
<div style="left:292px;top:104px;width:2px;height:35px;background:#9a9a9a;"></div>
<svg style="left:303px;top:107px;" width="28" height="28" viewBox="0 0 28 28"><path d="M12.5 1l11 6v13l-11 6-11-6V7z" fill="#e39a55"/><g stroke="#3c3c3c" stroke-width="1" fill="none"><path d="M1.5 7l5.5 12h11L23.5 7M12.5 1L7 19M12.5 1L18 19M7 19l5.5 7 5.5-7M1.5 20L7 19M23.5 20l-5.5-1"/></g><path d="M27 21v6h-6z" fill="#ccc"/></svg>
<div style="left:340px;top:104px;width:2px;height:35px;background:#9a9a9a;"></div>
<svg style="left:350px;top:107px;" width="28" height="28" viewBox="0 0 28 28"><path d="M13 1C15 8 18 11 25 13 18 15 15 18 13 25 11 18 8 15 1 13 8 11 11 8 13 1z" fill="#e39a55"/><path d="M27 21v6h-6z" fill="#ccc"/></svg>
<svg style="left:387px;top:108px;" width="23" height="25" viewBox="0 0 23 25"><path d="M1 1h21v7h-2l-1.5-4H14v17l3 1v2H6v-2l3-1V4H4.5L3 8H1z" fill="#e39a55"/></svg>
<svg style="left:422px;top:110px;" width="23" height="22" viewBox="0 0 23 22"><rect width="23" height="22" fill="#e39a55"/><text x="11.5" y="14" font-size="10" font-weight="bold" text-anchor="middle" fill="#333">svg</text></svg>
<div style="left:456px;top:104px;width:2px;height:35px;background:#9a9a9a;"></div>
<svg style="left:467px;top:106px;" width="26" height="27" viewBox="0 0 26 27"><circle cx="13" cy="15" r="7" fill="none" stroke="#c6c6c6" stroke-width="1.5"/><circle cx="13" cy="15" r="3" fill="#c6c6c6"/><path d="M13 1v8M2 24l6-4M24 24l-6-4" stroke="#3fb4c3" stroke-width="2.4"/></svg>
<svg style="left:502px;top:107px;" width="27" height="26" viewBox="0 0 27 26"><circle cx="7.5" cy="7.5" r="7" fill="#3fb4c3"/><path d="M7.5 3v5h3.5" stroke="#333" stroke-width="1.3" fill="none"/><path d="M15 11h6M7 17h11M10 22h5" stroke="#c6c6c6" stroke-width="1.3"/><path d="M18 18l7 7M25 18l-7 7" stroke="#ddd" stroke-width="2"/></svg>
<svg style="left:535px;top:106px;" width="31" height="30" viewBox="0 0 31 30"><g stroke="#c8c8c8" stroke-width="1.3"><path d="M15 1v18M7 5l16 10M23 5L7 15M12 2l3 3 3-3M12 18l3-3 3 3"/></g><rect x="0" y="18" width="31" height="12" fill="#3a3a3a"/><text x="15.5" y="28.5" font-size="11.5" font-weight="bold" text-anchor="middle" fill="#3fb4c3">0,0,0</text></svg>
<div style="left:573px;top:104px;width:2px;height:35px;background:#9a9a9a;"></div>
<svg style="left:584px;top:108px;" width="26" height="26" viewBox="0 0 26 26"><circle cx="13" cy="13" r="12" fill="none" stroke="#c6c6c6" stroke-width="1.3"/><path d="M4 10l9-4 9 4-9 4z M4 15l9-4 9 4-9 4z" fill="#e39a55" stroke="#333" stroke-width=".8"/></svg>
<svg style="left:620px;top:109px;" width="24" height="24" viewBox="0 0 24 24"><rect x="3" y="0" width="9" height="9" fill="#c6c6c6"/><rect x="13" y="0" width="9" height="9" fill="#c6c6c6"/><rect x="13" y="10" width="9" height="9" fill="#c6c6c6"/><rect x="0" y="13" width="10" height="10" fill="#e39a55"/></svg>
<svg style="left:652px;top:107px;" width="29" height="28" viewBox="0 0 29 28"><path d="M1 6l5-3 5 3v16l-5 3-5-3z M18 6l5-3 5 3v16l-5 3-5-3z" fill="#e39a55"/><path d="M1 6l5 3 5-3M6 9v16M18 6l5 3 5-3M23 9v16" stroke="#333" stroke-width="1" fill="none"/><path d="M14.5 1v27" stroke="#ddd" stroke-width="1" stroke-dasharray="2 1.5"/></svg>
<svg style="left:689px;top:108px;" width="25" height="25" viewBox="0 0 25 25"><rect x="0" y="9" width="7" height="7" fill="#c6c6c6"/><rect x="0" y="17" width="7" height="7" fill="#c6c6c6"/><rect x="8" y="9" width="7" height="7" fill="#c6c6c6"/><rect x="8" y="17" width="7" height="7" fill="#c6c6c6"/><rect x="9" y="0" width="3" height="3" fill="#e39a55"/><rect x="9" y="4" width="3" height="3" fill="#e39a55"/><rect x="9" y="8" width="3" height="3" fill="#e39a55"/><rect x="9" y="12" width="3" height="3" fill="#e39a55"/><rect x="13" y="0" width="3" height="3" fill="#e39a55"/><rect x="13" y="4" width="3" height="3" fill="#e39a55"/><rect x="13" y="8" width="3" height="3" fill="#e39a55"/><rect x="13" y="12" width="3" height="3" fill="#e39a55"/><rect x="17" y="0" width="3" height="3" fill="#e39a55"/><rect x="17" y="4" width="3" height="3" fill="#e39a55"/><rect x="17" y="8" width="3" height="3" fill="#e39a55"/><rect x="17" y="12" width="3" height="3" fill="#e39a55"/><rect x="21" y="0" width="3" height="3" fill="#e39a55"/><rect x="21" y="4" width="3" height="3" fill="#e39a55"/><rect x="21" y="8" width="3" height="3" fill="#e39a55"/><rect x="21" y="12" width="3" height="3" fill="#e39a55"/></svg>
<svg style="left:724px;top:108px;" width="25" height="25" viewBox="0 0 25 25"><rect x="0" y="9" width="3" height="3" fill="#c6c6c6"/><rect x="0" y="13" width="3" height="3" fill="#c6c6c6"/><rect x="0" y="17" width="3" height="3" fill="#c6c6c6"/><rect x="0" y="21" width="3" height="3" fill="#c6c6c6"/><rect x="4" y="9" width="3" height="3" fill="#c6c6c6"/><rect x="4" y="13" width="3" height="3" fill="#c6c6c6"/><rect x="4" y="17" width="3" height="3" fill="#c6c6c6"/><rect x="4" y="21" width="3" height="3" fill="#c6c6c6"/><rect x="8" y="9" width="3" height="3" fill="#c6c6c6"/><rect x="8" y="13" width="3" height="3" fill="#c6c6c6"/><rect x="8" y="17" width="3" height="3" fill="#c6c6c6"/><rect x="8" y="21" width="3" height="3" fill="#c6c6c6"/><rect x="12" y="9" width="3" height="3" fill="#c6c6c6"/><rect x="12" y="13" width="3" height="3" fill="#c6c6c6"/><rect x="12" y="17" width="3" height="3" fill="#c6c6c6"/><rect x="12" y="21" width="3" height="3" fill="#c6c6c6"/><rect x="9" y="0" width="7" height="7" fill="#e39a55"/><rect x="9" y="8" width="7" height="7" fill="#e39a55"/><rect x="17" y="0" width="7" height="7" fill="#e39a55"/><rect x="17" y="8" width="7" height="7" fill="#e39a55"/></svg>
<svg style="left:760px;top:107px;" width="24" height="28" viewBox="0 0 24 28"><path d="M1 4l5-3 6 3v18l-5 3-6-3z" fill="#e39a55"/><path d="M1 4l6 3 5-3M7 7v18" stroke="#333" stroke-width="1" fill="none"/><path d="M10 21l6-4 7 5-6 4z" fill="#c6c6c6"/></svg>
<svg style="left:792px;top:106px;" width="31" height="30" viewBox="0 0 31 30"><path d="M1 5l7-4 7 4-7 4z M16 14l7-4 7 4-7 4z M1 14l7-4 6 3.5-7 4z M16 22l7-4 7 4-7 4z" fill="#c6c6c6"/><path d="M9 17l7-4 7 4-7 4z" fill="#e39a55"/><path d="M9 8l7-4 7 4-7 4z" fill="none" stroke="#e39a55" stroke-dasharray="1.5 1"/></svg>
<svg style="left:829px;top:107px;" width="25" height="28" viewBox="0 0 25 28"><path d="M12.5 1L24 7v14l-11.5 6L1 21V7z" fill="#e39a55"/><path d="M1 7l11.5 6L24 7M12.5 13v14" stroke="#c6c6c6" stroke-width="2.5" fill="none"/></svg>
<svg style="left:862px;top:107px;" width="28" height="28" viewBox="0 0 28 28"><rect x="0" y="12" width="4" height="4" fill="#c6c6c6"/><rect x="0" y="17" width="4" height="4" fill="#c6c6c6"/><rect x="0" y="22" width="4" height="4" fill="#c6c6c6"/><rect x="5" y="12" width="4" height="4" fill="#c6c6c6"/><rect x="5" y="17" width="4" height="4" fill="#c6c6c6"/><rect x="5" y="22" width="4" height="4" fill="#c6c6c6"/><rect x="10" y="12" width="4" height="4" fill="#c6c6c6"/><rect x="10" y="17" width="4" height="4" fill="#c6c6c6"/><rect x="10" y="22" width="4" height="4" fill="#c6c6c6"/><path d="M12 1h15v12H15l-3-3z" fill="#e39a55"/><rect x="10" y="9" width="5" height="5" fill="none" stroke="#ddd" stroke-width="1"/></svg>
<svg style="left:898px;top:107px;" width="26" height="26" viewBox="0 0 26 26"><circle cx="13" cy="13" r="12" fill="#e39a55"/><g stroke="#444" stroke-width="1" fill="none"><circle cx="13" cy="13" r="8.5"/><path d="M13 1v24M1 13h24M4.5 4.5l17 17M21.5 4.5l-17 17"/></g></svg>
<svg style="left:934px;top:108px;" width="27" height="25" viewBox="0 0 27 25"><rect x="10" y="0" width="16" height="16" fill="#c6c6c6"/><path d="M10 16L26 0" stroke="#444"/><rect x="0" y="8" width="16" height="16" fill="#e39a55"/><path d="M0 8l16 16" stroke="#444"/></svg>
<svg style="left:967px;top:112px;" width="30" height="20" viewBox="0 0 30 20"><path d="M14 9l8-5 8 5-8 5z M8 14l8-5 8 5-8 5z" fill="#c6c6c6"/><path d="M1 6l7-4 7 4-7 4z M1 10l7-4 7 4-7 4z" fill="#e39a55" stroke="#333" stroke-width=".8"/></svg>
<svg style="left:1005px;top:107px;" width="24" height="26" viewBox="0 0 24 26"><g stroke="#c6c6c6" stroke-width="1" fill="#444"><rect x="3" y="2" width="18" height="21"/></g><g stroke="#e39a55" stroke-width="1.2" fill="none"><path d="M3 2l6 7M21 2l-6 7M3 23l6-7M21 23l-6-7"/><rect x="9" y="9" width="6" height="6"/></g><g fill="#444" stroke="#c6c6c6" stroke-width="1.2"><rect x="1" y="0" width="4" height="4"/><rect x="19" y="0" width="4" height="4"/><rect x="1" y="21" width="4" height="4"/><rect x="19" y="21" width="4" height="4"/></g></svg>
<svg style="left:1038px;top:107px;" width="27" height="26" viewBox="0 0 27 26"><rect x="0" y="10" width="4" height="4" fill="#c6c6c6"/><rect x="0" y="15" width="4" height="4" fill="#c6c6c6"/><rect x="0" y="20" width="4" height="4" fill="#c6c6c6"/><rect x="5" y="10" width="4" height="4" fill="#c6c6c6"/><rect x="5" y="15" width="4" height="4" fill="#c6c6c6"/><rect x="5" y="20" width="4" height="4" fill="#c6c6c6"/><rect x="10" y="10" width="4" height="4" fill="#c6c6c6"/><rect x="10" y="15" width="4" height="4" fill="#c6c6c6"/><rect x="10" y="20" width="4" height="4" fill="#c6c6c6"/><circle cx="18" cy="9" r="8.5" fill="#e39a55"/><g stroke="#444" stroke-width="1" fill="none"><path d="M18 .5v17M9.5 9h17M13 2.5v13M23 2.5v13M10.5 5h15M10.5 13h15"/></g></svg>
<div style="left:1076px;top:104px;width:2px;height:35px;background:#9a9a9a;"></div>
<svg style="left:1086px;top:107px;" width="28" height="26" viewBox="0 0 28 26"><path d="M3 23L3 7 17 1" stroke="#e39a55" stroke-width="1" fill="none"/><rect x="1" y="5" width="3" height="3" fill="none" stroke="#e39a55"/><rect x="1" y="22" width="3" height="3" fill="none" stroke="#e39a55"/><rect x="16" y="0" width="3" height="3" fill="none" stroke="#e39a55"/><path d="M3 24l12-13 3 3zM16 10l9-9 2 2-9 9z" fill="#c6c6c6"/></svg>
<svg style="left:1121px;top:107px;" width="25" height="26" viewBox="0 0 25 26"><g stroke="#c6c6c6" stroke-width="1" fill="none"><rect x="2" y="2" width="21" height="21"/></g><path d="M12.5 2v21" stroke="#e39a55" stroke-width="1.3"/><rect x="9.5" y="0" width="6" height="5" fill="#444" stroke="#e39a55" stroke-width="1.3"/><rect x="9.5" y="20" width="6" height="5" fill="#444" stroke="#e39a55" stroke-width="1.3"/><g fill="#444" stroke="#c6c6c6"><rect x="0" y="0" width="4" height="4"/><rect x="21" y="0" width="4" height="4"/><rect x="0" y="21" width="4" height="4"/><rect x="21" y="21" width="4" height="4"/></g></svg>
<svg style="left:1155px;top:107px;" width="28" height="26" viewBox="0 0 28 26"><g stroke="#c6c6c6" stroke-width="1" fill="none" stroke-dasharray="2 1.5"><rect x="2" y="2" width="10" height="10"/></g><rect x="1" y="17" width="3" height="3" fill="#e39a55"/><path d="M11 22l13-13 3 3-13 13-4 1z" fill="#c6c6c6"/></svg>
<div style="left:1193px;top:104px;width:2px;height:35px;background:#9a9a9a;"></div>
<svg style="left:1204px;top:108px;" width="26" height="26" viewBox="0 0 26 26"><rect x="0" y="1" width="21" height="21" fill="#5db38e"/><g transform="translate(15,15)"><rect width="11" height="11" fill="#333"/><rect x="1" y="1" width="3" height="3" fill="#d0d0d0"/><rect x="1" y="7" width="3" height="3" fill="#d0d0d0"/><rect x="4" y="4" width="3" height="3" fill="#d0d0d0"/><rect x="7" y="1" width="3" height="3" fill="#d0d0d0"/><rect x="7" y="7" width="3" height="3" fill="#d0d0d0"/></g></svg>
<svg style="left:1239px;top:108px;" width="27" height="26" viewBox="0 0 27 26"><path d="M0 2c7 4 14 4 21 0v20H0z" fill="#5db38e"/><g transform="translate(15,15)"><rect width="11" height="11" fill="#333"/><rect x="1" y="1" width="3" height="3" fill="#d0d0d0"/><rect x="1" y="7" width="3" height="3" fill="#d0d0d0"/><rect x="4" y="4" width="3" height="3" fill="#d0d0d0"/><rect x="7" y="1" width="3" height="3" fill="#d0d0d0"/><rect x="7" y="7" width="3" height="3" fill="#d0d0d0"/></g></svg>
<svg style="left:1273px;top:108px;" width="27" height="26" viewBox="0 0 27 26"><path d="M0 10a11 9 0 0 1 22 0v12H4a11 11 0 0 1-4-12z" fill="#5db38e"/><g transform="translate(16,15)"><rect width="11" height="11" fill="#333"/><rect x="1" y="1" width="3" height="3" fill="#d0d0d0"/><rect x="1" y="7" width="3" height="3" fill="#d0d0d0"/><rect x="4" y="4" width="3" height="3" fill="#d0d0d0"/><rect x="7" y="1" width="3" height="3" fill="#d0d0d0"/><rect x="7" y="7" width="3" height="3" fill="#d0d0d0"/></g></svg>
<svg style="left:1308px;top:107px;" width="28" height="27" viewBox="0 0 28 27"><path d="M13 1l11 5-11 5L2 6z" fill="#5db38e"/><path d="M1 9l10 5v11l-10-5zM25 9l-10 5v11l10-5z" fill="#5db38e"/><g transform="translate(16,16)"><rect width="11" height="11" fill="#333"/><rect x="1" y="1" width="3" height="3" fill="#d0d0d0"/><rect x="1" y="7" width="3" height="3" fill="#d0d0d0"/><rect x="4" y="4" width="3" height="3" fill="#d0d0d0"/><rect x="7" y="1" width="3" height="3" fill="#d0d0d0"/><rect x="7" y="7" width="3" height="3" fill="#d0d0d0"/></g></svg>
<svg style="left:1344px;top:107px;" width="27" height="27" viewBox="0 0 27 27"><path d="M2 22c-4-8 6-10 12-12 4-2 2-6 0-9 6 3 6 10 0 12-6 2-12 4-9 10z" fill="#5db38e"/><g transform="translate(15,16)"><rect width="11" height="11" fill="#333"/><rect x="1" y="1" width="3" height="3" fill="#d0d0d0"/><rect x="1" y="7" width="3" height="3" fill="#d0d0d0"/><rect x="4" y="4" width="3" height="3" fill="#d0d0d0"/><rect x="7" y="1" width="3" height="3" fill="#d0d0d0"/><rect x="7" y="7" width="3" height="3" fill="#d0d0d0"/></g></svg>
<svg style="left:1379px;top:108px;" width="26" height="26" viewBox="0 0 26 26"><rect x="0" y="0" width="25" height="25" fill="#444"/><rect x="0" y="0" width="25" height="4" fill="#c6c6c6"/><rect x="0" y="5" width="25" height="20" fill="#5db38e"/><rect x="6" y="8" width="13" height="13" fill="#333"/><g fill="#d0d0d0"><rect x="7" y="9" width="3.5" height="3.5"/><rect x="14.5" y="9" width="3.5" height="3.5"/><rect x="10.75" y="12.75" width="3.5" height="3.5"/><rect x="7" y="16.5" width="3.5" height="3.5"/><rect x="14.5" y="16.5" width="3.5" height="3.5"/></g></svg>
<svg style="left:1411px;top:108px;" width="30" height="26" viewBox="0 0 30 26"><path d="M2 6l6 4M28 6l-6 4M2 22l13-8 13 8" stroke="#5db38e" stroke-width="3" fill="none"/><path d="M1 4h6l-5 5zM29 4h-6l5 5zM1 24h6l-5-5zM29 24h-6l5-5z" fill="#5db38e"/><g transform="translate(9,1)"><rect width="11" height="11" fill="#333"/><rect x="1" y="1" width="3" height="3" fill="#d0d0d0"/><rect x="1" y="7" width="3" height="3" fill="#d0d0d0"/><rect x="4" y="4" width="3" height="3" fill="#d0d0d0"/><rect x="7" y="1" width="3" height="3" fill="#d0d0d0"/><rect x="7" y="7" width="3" height="3" fill="#d0d0d0"/></g></svg>
<svg style="left:1447px;top:107px;" width="28" height="27" viewBox="0 0 28 27"><path d="M4 2l20 23M24 2L6 22" stroke="#c6c6c6" stroke-width="3.5" stroke-linecap="round"/><path d="M4 3c4 8 2 16 6 21M8 3c6-2 14 2 15 8" stroke="#5db38e" stroke-width="1" fill="none"/></svg>
<svg style="left:1900px;top:103px;" width="12" height="36" viewBox="0 0 12 36"><path d="M1 8l5-5 5 5z" fill="#bbb"/><circle cx="6" cy="18" r="4" fill="#666"/><path d="M1 28l5 5 5-5z" fill="#bbb"/></svg>
<div style="left:19px;top:93px;width:10px;height:2px;background:#bbb;"></div>
<div style="left:19px;top:96px;width:10px;height:2px;background:#bbb;"></div>
<svg style="left:18px;top:121px;" width="12" height="12" viewBox="0 0 12 12"><circle cx="6" cy="6" r="3.5" fill="none" stroke="#bbb" stroke-width="2"/><path d="M6 0v2.5M6 9.5V12M0 6h2.5M9.5 6H12M1.8 1.8l1.8 1.8M8.4 8.4l1.8 1.8M1.8 10.2l1.8-1.8M8.4 3.6l1.8-1.8" stroke="#bbb" stroke-width="1.5"/></svg>
<svg style="left:4px;top:161px;" width="36" height="36" viewBox="0 0 36 36"><path transform="translate(13,8) scale(1)" d="M0 0l17 16-7 1 4.5 8-4 2-4.5-8L0 24z" fill="#c6c6c6" stroke="#333" stroke-width="1"/></svg>
<svg style="left:4px;top:199px;" width="36" height="36" viewBox="0 0 36 36"><ellipse cx="16" cy="14" rx="11" ry="7" transform="rotate(-35 16 14)" fill="none" stroke="#3fb4c3" stroke-width="2.6" stroke-dasharray="4 2.5"/><path transform="translate(18,13) scale(0.85)" d="M0 0l17 16-7 1 4.5 8-4 2-4.5-8L0 24z" fill="#c6c6c6" stroke="#333" stroke-width="1"/></svg>
<svg style="left:4px;top:236px;" width="36" height="36" viewBox="0 0 36 36"><ellipse cx="14" cy="21" rx="10" ry="7" transform="rotate(-25 14 21)" fill="none" stroke="#3fb4c3" stroke-width="2.6" stroke-dasharray="4 2.5"/><path d="M30 4L18 18" stroke="#c6c6c6" stroke-width="3" stroke-linecap="round"/><path d="M12 20c3-4 6-4 8-2-2 3-5 5-8 2z" fill="#c6c6c6"/></svg>
<svg style="left:4px;top:273px;" width="36" height="36" viewBox="0 0 36 36"><rect x="12" y="12" width="12" height="12" fill="#c6c6c6"/><path d="M18 3l-3.5 4h7zM18 33l-3.5-4h7zM3 18l4-3.5v7zM33 18l-4-3.5v7z" fill="#3fb4c3"/></svg>
<svg style="left:4px;top:309px;" width="36" height="36" viewBox="0 0 36 36"><path d="M8 27A13 13 0 1 1 30 22" stroke="#3fb4c3" stroke-width="2.2" fill="none"/><path d="M27 21h6l-3 4z" fill="#3fb4c3"/><path d="M18 10l8 8-8 8-8-8z" fill="#c6c6c6"/></svg>
<svg style="left:4px;top:346px;" width="36" height="36" viewBox="0 0 36 36"><rect x="6" y="6" width="24" height="24" fill="none" stroke="#3fb4c3" stroke-width="1.8" stroke-dasharray="3.5 2"/><rect x="6" y="18" width="12" height="12" fill="#c6c6c6"/><path d="M16 12h6v6" stroke="#3fb4c3" stroke-width="1.5" fill="none"/></svg>
<svg style="left:8px;top:472px;" width="28" height="28" viewBox="0 0 28 28"><rect x=".5" y=".5" width="27" height="27" fill="#ccc" stroke="#ccc"/><rect x="2.5" y="2.5" width="23" height="23" fill="#cfcfcf" stroke="#555" stroke-width="1"/><path d="M14 8l4 3-4 3-4-3zM9 11l4 3-4 3-4-3zM19 11l4 3-4 3-4-3zM14 14l4 3-4 3-4-3z" fill="#444"/></svg>
<svg style="left:8px;top:508px;" width="28" height="30" viewBox="0 0 28 30"><rect x="0.5" y="0.5" width="12" height="13" fill="#333" stroke="#ccc" stroke-width="1"/><path d="M2.5 7.0h8M6.5 3.0v8" stroke="#ccc" stroke-width="1"/><rect x="15.5" y="0.5" width="12" height="13" fill="#cfcfcf" stroke="#888" stroke-width="1"/><path d="M21.5 4.5l4 2.5-4 2.5-4-2.5z" fill="#444"/><rect x="0.5" y="15.5" width="12" height="13" fill="#333" stroke="#ccc" stroke-width="1"/><path d="M2.5 22.0h8M6.5 18.0v8" stroke="#ccc" stroke-width="1"/><rect x="15.5" y="15.5" width="12" height="13" fill="#333" stroke="#ccc" stroke-width="1"/><path d="M17.5 22.0h8M21.5 18.0v8" stroke="#ccc" stroke-width="1"/></svg>
<svg style="left:8px;top:545px;" width="28" height="30" viewBox="0 0 28 30"><rect x="0.5" y="0.5" width="12" height="28" fill="#333" stroke="#ccc" stroke-width="1"/><path d="M2.5 14.5h8M6.5 10.5v8" stroke="#ccc" stroke-width="1"/><rect x="15.5" y="0.5" width="12" height="28" fill="#cfcfcf" stroke="#888" stroke-width="1"/><path d="M21.5 12.0l4 2.5-4 2.5-4-2.5z" fill="#444"/></svg>
<svg style="left:4px;top:579px;" width="36" height="36" viewBox="0 0 36 36"><rect x="4.5" y="4.5" width="27" height="27" fill="none" stroke="#ddd" stroke-width="1"/><rect x="6.5" y="6.5" width="23" height="23" fill="#4a7fa0" stroke="#333" stroke-width="1"/><g fill="#ddd"><rect x="9" y="8" width="3" height="3"/><rect x="13" y="13" width="3" height="3"/><rect x="13" y="19" width="3" height="3"/><rect x="13" y="25" width="3" height="3"/></g><path d="M12 9.5h7M16 14.5h7M16 20.5h5M16 26.5h7M10.5 11v15M10.5 14.5h2M10.5 20.5h2M10.5 26.5h2" stroke="#ddd" stroke-width="1"/></svg>
<svg style="left:5px;top:863px;" width="34" height="32" viewBox="0 0 34 32"><defs><linearGradient id="mlg" x1="0" y1="0" x2="1" y2="1"><stop offset="0" stop-color="#1fb3bf"/><stop offset="1" stop-color="#0f7f8c"/></linearGradient></defs><path d="M1 1h9l7 14 7-14h9v30h-8V14l-6 12h-4L9 14v17H1z" fill="url(#mlg)"/><path d="M10 1l7 14 7-14" fill="#7fd6db" opacity=".5"/></svg>
<svg style="left:86px;top:219px;" width="15" height="10" viewBox="0 0 15 10"><rect x="0" y="1" width="10" height="8" fill="#c8c8c8"/><path d="M11 5l4-4v8z" fill="#c8c8c8"/></svg>
<svg style="left:86px;top:239px;" width="15" height="10" viewBox="0 0 15 10"><rect x="0" y="1" width="10" height="8" fill="#c8c8c8"/><path d="M11 5l4-4v8z" fill="#c8c8c8"/></svg>
<svg style="left:86px;top:259px;" width="15" height="10" viewBox="0 0 15 10"><rect x="0" y="1" width="10" height="8" fill="#c8c8c8"/><path d="M11 5l4-4v8z" fill="#c8c8c8"/></svg>
<svg style="left:86px;top:279px;" width="15" height="10" viewBox="0 0 15 10"><rect x="0" y="1" width="10" height="8" fill="#c8c8c8"/><path d="M11 5l4-4v8z" fill="#c8c8c8"/></svg>
<svg style="left:86px;top:298px;" width="16" height="12" viewBox="0 0 16 12"><path d="M8 0l3.5 3-3.5 3-3.5-3zM3.5 3l3.5 3-3.5 3L0 6zM12.5 3L16 6l-3.5 3L9 6zM8 6l3.5 3L8 12 4.5 9z" fill="#c8c8c8"/></svg>
<svg style="left:84px;top:316px;" width="16" height="16" viewBox="0 0 16 16"><circle cx="8" cy="8" r="7" fill="none" stroke="#c8c8c8" stroke-width="1.3"/><circle cx="6.5" cy="10" r="3" fill="#c8c8c8"/><path d="M8 4h4v5H9z" fill="#3fb4c3"/></svg>
<svg style="left:84px;top:336px;" width="16" height="16" viewBox="0 0 16 16"><circle cx="8" cy="8" r="7" fill="none" stroke="#c8c8c8" stroke-width="1.3"/><circle cx="6.5" cy="10" r="3" fill="#c8c8c8"/><path d="M8 4h4v5H9z" fill="#3fb4c3"/></svg>
<svg style="left:55px;top:194px;" width="15" height="16" viewBox="0 0 15 16"><path d="M2 1h11M2 15h11M1 2v12M14 2v12" stroke="#666" stroke-width="1.2" stroke-dasharray="2 1"/><path d="M1 2l5 3-5 3zM14 2L9 5l5 3zM1 9l5 3-5 3zM14 9l-5 3 5 3z" fill="#666"/></svg>
<svg style="left:290px;top:199px;" width="10" height="7" viewBox="0 0 10 7"><path d="M0 0h10l-5 6z" fill="#c8c8c8"/></svg>
<svg style="left:295px;top:216px;" width="11" height="7" viewBox="0 0 11 7"><path d="M0 6h10L5 0z" fill="#c8c8c8"/></svg>
<svg style="left:295px;top:869px;" width="11" height="7" viewBox="0 0 11 7"><path d="M0 0h10l-5 6z" fill="#c8c8c8"/></svg>
<svg style="left:52px;top:880px;" width="7" height="11" viewBox="0 0 7 11"><path d="M6 0v10L0 5z" fill="#c8c8c8"/></svg>
<svg style="left:284px;top:880px;" width="7" height="11" viewBox="0 0 7 11"><path d="M0 0v10l6-5z" fill="#c8c8c8"/></svg>
<div style="left:320px;top:173px;width:1px;height:17px;background:#8a8a8a;"></div>
<div style="left:319px;top:177px;width:3px;height:9px;background:#8a8a8a;border-radius:1px;"></div>
<svg style="left:329px;top:176px;" width="15" height="10" viewBox="0 0 15 10"><rect x="0" y="1" width="9" height="8" fill="#c6c6c6"/><path d="M10 5l4-4v8z" fill="#c6c6c6"/></svg>
<svg style="left:347px;top:174px;" width="16" height="14" viewBox="0 0 16 14"><rect x="2" y="1" width="10" height="7" fill="#c6c6c6"/><path d="M12 4l4-3v7z" fill="#c6c6c6"/><path d="M3 9V7a2.5 2.5 0 0 1 5 0v2" stroke="#3fb4c3" stroke-width="1.5" fill="none"/><rect x="1.5" y="8.5" width="8" height="5.5" fill="#3fb4c3"/></svg>
<svg style="left:366px;top:174px;" width="16" height="14" viewBox="0 0 16 14"><rect x="3" y="1" width="9" height="7" fill="#c6c6c6"/><path d="M12 4l4-3v7z" fill="#c6c6c6"/><circle cx="5" cy="9" r="3.5" fill="none" stroke="#3fb4c3" stroke-width="2.2" stroke-dasharray="1.6 .9"/></svg>
<svg style="left:389px;top:175px;" width="8" height="12" viewBox="0 0 8 12"><path d="M0 0h7v11l-3.5-3L0 11z" fill="#c6c6c6"/></svg>
<svg style="left:404px;top:174px;" width="16" height="14" viewBox="0 0 16 14"><path d="M1 13h14l-3-3H4z" fill="none" stroke="#c6c6c6" stroke-width="1"/><path d="M8 9l7-8v10z" fill="#3fb4c3"/></svg>
<svg style="left:424px;top:173px;" width="15" height="16" viewBox="0 0 15 16"><path d="M5 1v7H1M3 3L5 1l2 2M1 6L3 8 1 10" stroke="#c6c6c6" stroke-width="1.2" fill="none"/><circle cx="10" cy="9" r="3.2" fill="none" stroke="#3fb4c3" stroke-width="1.6"/><path d="M8 11l-4 4" stroke="#3fb4c3" stroke-width="2"/></svg>
<svg style="left:444px;top:174px;" width="13" height="14" viewBox="0 0 13 14"><path d="M12 1L4 9" stroke="#c6c6c6" stroke-width="3"/><path d="M2 12l3-3" stroke="#3fb4c3" stroke-width="3"/><path d="M7 13a2 2 0 1 0 2-3" stroke="#c6c6c6" stroke-width="1" fill="none"/></svg>
<div style="left:464px;top:173px;width:1px;height:17px;background:#8a8a8a;"></div>
<div style="left:463px;top:177px;width:3px;height:9px;background:#8a8a8a;border-radius:1px;"></div>
<div style="left:471px;top:172px;width:18px;height:18px;background:#5285a6;"></div>
<svg style="left:473px;top:174px;" width="14" height="14" viewBox="0 0 14 14"><rect x=".5" y=".5" width="13" height="13" fill="none" stroke="#ddd"/><path d="M4.5 1v12M9.5 1v12M1 4.5h12M1 9.5h12" stroke="#ddd" stroke-width="1.2"/></svg>
<svg style="left:491px;top:174px;" width="15" height="14" viewBox="0 0 15 14"><rect x=".5" y="1.5" width="14" height="11" fill="none" stroke="#c6c6c6"/><path d="M1 3.5h13M1 10.5h13" stroke="#c6c6c6" stroke-dasharray="1.5 1"/></svg>
<svg style="left:510px;top:174px;" width="15" height="14" viewBox="0 0 15 14"><rect x=".5" y="1.5" width="14" height="11" fill="none" stroke="#c6c6c6"/><circle cx="7.5" cy="7" r="2.5" fill="#3fb4c3"/></svg>
<div style="left:528px;top:172px;width:18px;height:18px;background:#3a3a3a;border:1px solid #333;"></div>
<svg style="left:531px;top:175px;" width="12" height="12" viewBox="0 0 12 12"><circle cx="6" cy="6" r="4" fill="#555"/></svg>
<svg style="left:548px;top:174px;" width="15" height="14" viewBox="0 0 15 14"><rect x=".5" y="1.5" width="14" height="11" fill="none" stroke="#c6c6c6"/><path d="M2 7h11M7.5 3v8" stroke="#3fb4c3" stroke-dasharray="1.5 1"/></svg>
<svg style="left:567px;top:174px;" width="15" height="14" viewBox="0 0 15 14"><rect x=".5" y="1.5" width="14" height="11" fill="none" stroke="#c6c6c6"/><path d="M3 11l3-5 3 5z" fill="#3fb4c3"/><circle cx="10" cy="5" r="2" fill="#3fb4c3"/></svg>
<svg style="left:586px;top:174px;" width="15" height="14" viewBox="0 0 15 14"><rect x=".5" y="1.5" width="14" height="11" fill="none" stroke="#c6c6c6"/><path d="M4 4h7M7.5 4v7" stroke="#3fb4c3" stroke-width="2"/></svg>
<div style="left:608px;top:173px;width:1px;height:17px;background:#8a8a8a;"></div>
<div style="left:607px;top:177px;width:3px;height:9px;background:#8a8a8a;border-radius:1px;"></div>
<svg style="left:617px;top:174px;" width="15" height="15" viewBox="0 0 15 15"><path d="M7.5 1l6 3v7l-6 3-6-3V4z" fill="none" stroke="#c6c6c6" stroke-width="1"/><path d="M1.5 4l6 3 6-3M7.5 7v7" stroke="#c6c6c6" stroke-width="1" fill="none"/></svg>
<div style="left:634px;top:172px;width:18px;height:18px;background:#5285a6;"></div>
<svg style="left:636px;top:174px;" width="15" height="15" viewBox="0 0 15 15"><path d="M7.5 1l6 3v7l-6 3-6-3V4z" fill="#3fb4c3" stroke="#bbb" stroke-width="1"/><path d="M1.5 4l6 3 6-3M7.5 7v7" stroke="#2a6f78" stroke-width="1" fill="none"/></svg>
<svg style="left:655px;top:174px;" width="14" height="14" viewBox="0 0 14 14"><defs><pattern id="ck" width="3" height="3" patternUnits="userSpaceOnUse"><rect width="3" height="3" fill="#ddd"/><rect width="1.5" height="1.5" fill="#333"/><rect x="1.5" y="1.5" width="1.5" height="1.5" fill="#333"/></pattern></defs><circle cx="7" cy="7" r="6.5" fill="url(#ck)"/><path d="M7 .5a6.5 6.5 0 0 0 0 13z" fill="#c8c8c8"/></svg>
<svg style="left:674px;top:174px;" width="15" height="15" viewBox="0 0 15 15"><path d="M7.5 1l6 3v7l-6 3-6-3V4z" fill="none" stroke="#c6c6c6" stroke-width="1"/><path d="M1.5 4l6 3 6-3M7.5 7v7" stroke="#c6c6c6" stroke-width="1" fill="none"/><path d="M4 5l3.5 1.7V11L4 9.3z" fill="#3fb4c3"/></svg>
<div style="left:691px;top:172px;width:18px;height:18px;background:#5285a6;"></div>
<svg style="left:693px;top:174px;" width="14" height="14" viewBox="0 0 14 14"><circle cx="7" cy="7" r="6.5" fill="url(#ck)"/></svg>
<svg style="left:712px;top:173px;" width="15" height="16" viewBox="0 0 15 16"><path d="M7.5 4a4 4 0 0 1 2.5 7v2H5v-2a4 4 0 0 1 2.5-7z" fill="#c6c6c6"/><path d="M7.5 0v2M1 6h2M12 6h2M2.5 1.5l1.5 1.5M12.5 1.5L11 3" stroke="#c6c6c6" stroke-width="1.2"/><rect x="5.5" y="13.5" width="4" height="2" fill="#c6c6c6"/></svg>
<svg style="left:731px;top:174px;" width="15" height="14" viewBox="0 0 15 14"><circle cx="9.5" cy="6" r="4.8" fill="#3fb4c3"/><path d="M1 11l4-3M2 13l4-3" stroke="#999" stroke-width="1.3"/></svg>
<div style="left:752px;top:173px;width:1px;height:17px;background:#8a8a8a;"></div>
<div style="left:751px;top:177px;width:3px;height:9px;background:#8a8a8a;border-radius:1px;"></div>
<svg style="left:762px;top:173px;" width="14" height="16" viewBox="0 0 14 16"><circle cx="7" cy="6" r="5.5" fill="#c6c6c6"/><path d="M1 13l5-2 7 3M3 15l5-2" stroke="#3fb4c3" stroke-width="1"/></svg>
<svg style="left:780px;top:173px;" width="16" height="16" viewBox="0 0 16 16"><circle cx="5" cy="11" r="4.5" fill="#5a5a5a"/><circle cx="10" cy="5.5" r="4.5" fill="#c6c6c6"/></svg>
<svg style="left:799px;top:173px;" width="14" height="16" viewBox="0 0 14 16"><path d="M7 1.5a6.5 6.5 0 0 0 0 13" stroke="#3fb4c3" stroke-width="2.2" fill="none"/><path d="M7 1.5a6.5 6.5 0 0 1 0 13" stroke="#ddd" stroke-width="2.2" fill="none" stroke-dasharray="2 1.4"/></svg>
<div style="left:816px;top:172px;width:18px;height:18px;background:#363636;border:1px solid #2e2e2e;"></div>
<svg style="left:818px;top:174px;" width="14" height="14" viewBox="0 0 14 14"><rect x="1" y="1" width="8" height="8" fill="#3d4a4d"/><rect x="5" y="5" width="8" height="8" fill="#41575b"/></svg>
<div style="left:839px;top:173px;width:1px;height:17px;background:#8a8a8a;"></div>
<div style="left:838px;top:177px;width:3px;height:9px;background:#8a8a8a;border-radius:1px;"></div>
<svg style="left:848px;top:173px;" width="15" height="16" viewBox="0 0 15 16"><rect x="1" y="1" width="9" height="8" fill="none" stroke="#3fb4c3" stroke-width="1.3" stroke-dasharray="2 1.3"/><path d="M7 6l7 6-3 .5 1.5 3-1.5.8-1.5-3-2 1.5z" fill="#c6c6c6"/></svg>
<div style="left:869px;top:173px;width:1px;height:17px;background:#8a8a8a;"></div>
<div style="left:868px;top:177px;width:3px;height:9px;background:#8a8a8a;border-radius:1px;"></div>
<div style="left:876px;top:172px;width:18px;height:18px;background:#404040;"></div>
<svg style="left:878px;top:174px;" width="14" height="14" viewBox="0 0 14 14"><rect x="5" y="1" width="8" height="8" fill="none" stroke="#c6c6c6" stroke-width="1.5"/><rect x="1" y="5" width="8" height="8" fill="#c6c6c6" stroke="#444" stroke-width="1"/></svg>
<div style="left:896px;top:172px;width:18px;height:18px;background:#404040;"></div>
<svg style="left:898px;top:174px;" width="14" height="14" viewBox="0 0 14 14"><rect x="5" y="1" width="8" height="8" fill="none" stroke="#c6c6c6" stroke-width="1.5"/><rect x="1" y="5" width="8" height="8" fill="#c6c6c6"/></svg>
<div style="left:915px;top:172px;width:16px;height:18px;background:#404040;"></div>
<svg style="left:916px;top:174px;" width="14" height="14" viewBox="0 0 14 14"><rect x=".75" y=".75" width="12.5" height="12.5" fill="none" stroke="#c6c6c6" stroke-width="1.3"/><path d="M4 4l6 6" stroke="#c6c6c6" stroke-width="1.6"/><circle cx="4.5" cy="4.5" r="1.6" fill="#c6c6c6"/></svg>
<div style="left:937px;top:173px;width:1px;height:17px;background:#8a8a8a;"></div>
<div style="left:936px;top:177px;width:3px;height:9px;background:#8a8a8a;border-radius:1px;"></div>
<svg style="left:948px;top:174px;" width="14" height="14" viewBox="0 0 14 14"><circle cx="7" cy="7" r="6.5" fill="#c6c6c6"/><circle cx="7" cy="7" r="2.5" fill="#444"/><path d="M7 .5l1 4M13 6l-4 1M10 12.5L8 9M2 11l3-2M1.5 4L5 6" stroke="#444" stroke-width="1"/></svg>
<div style="left:965px;top:173px;width:38px;height:15px;background:#2b2b2b;border-radius:2px;"></div>
<div class="t" style="left:969.0px;top:175.3px;font-size:11.5px;color:#d8d8d8;">0.00</div>
<svg style="left:1009px;top:174px;" width="13" height="14" viewBox="0 0 13 14"><path d="M6 1a6 6 0 0 0 0 12z" fill="#c6c6c6"/><rect x="7" y="1" width="5" height="12" fill="#c6c6c6"/></svg>
<div style="left:1026px;top:173px;width:38px;height:15px;background:#2b2b2b;border-radius:2px;"></div>
<div class="t" style="left:1031.0px;top:175.3px;font-size:11.5px;color:#d8d8d8;">1.00</div>
<div style="left:1067px;top:172px;width:18px;height:18px;background:#5285a6;"></div>
<svg style="left:1068px;top:173px;" width="16" height="16" viewBox="0 0 16 16"><circle cx="8" cy="8" r="6.5" fill="#3fb4c3" stroke="#333" stroke-width="1"/><text x="8" y="10.5" font-size="6.5" font-weight="bold" text-anchor="middle" fill="#333">ON</text></svg>
<div style="left:1088px;top:172px;width:39px;height:17px;overflow:hidden;background:#555;border-radius:2px;"><div class="t" style="left:3px;top:3.8px;font-size:11.5px;color:#d0d0d0;">sRGB g</div></div>
<svg style="left:1141px;top:175px;" width="18" height="17" viewBox="0 0 18 17"><path d="M0 5h4l1 2h11l-2 9H0z" fill="#c6c6c6"/><rect x="4" y="0" width="11" height="7" fill="#3fb4c3"/><path d="M6 3.5h7" stroke="#333" stroke-width="1"/><path d="M2 9h15l-3 7H0z" fill="#c6c6c6"/></svg>
<svg style="left:1167px;top:175px;" width="19" height="18" viewBox="0 0 19 18"><path d="M0 5h4l1 2h11l-2 9H0z" fill="#c6c6c6"/><rect x="4" y="0" width="11" height="7" fill="#3fb4c3"/><path d="M6 3.5h7" stroke="#333" stroke-width="1"/><path d="M2 9h15l-3 7H0z" fill="#c6c6c6"/><path d="M12 11l6 3.5-6 3.5z" fill="#3fb4c3"/></svg>
<svg style="left:1195px;top:175px;" width="16" height="16" viewBox="0 0 16 16"><path d="M.5 .5h13l2 2v13h-15z" fill="#c6c6c6"/><rect x="3" y="1.5" width="9" height="5" fill="#555"/><rect x="4" y="10" width="7" height="5" fill="#444"/><rect x="5.5" y="11" width="3" height="3" fill="#c6c6c6"/></svg>
<svg style="left:1222px;top:175px;" width="17" height="17" viewBox="0 0 17 17"><path d="M4.5 .5h10l2 2v10h-12z" fill="#c6c6c6"/><rect x="7" y="1.5" width="7" height="4" fill="#555"/><rect x="8" y="8" width="5" height="4" fill="#444"/><rect x="0" y="12" width="17" height="5" fill="#3fb4c3"/><path d="M2 14.5h13" stroke="#333" stroke-dasharray="1.5 1.5"/></svg>
<div style="left:1247px;top:174px;width:1px;height:20px;background:#666;"></div>
<svg style="left:1255px;top:174px;" width="22" height="18" viewBox="0 0 22 18"><rect x="1" y="3" width="14" height="6" fill="#3fb4c3" stroke="#c6c6c6" stroke-width="1"/><rect x="1" y="11" width="14" height="6" fill="none" stroke="#aaa" stroke-dasharray="1.5 1"/><path d="M14 1l6 6M20 1l-6 6" stroke="#ddd" stroke-width="2"/></svg>
<svg style="left:1283px;top:174px;" width="20" height="18" viewBox="0 0 20 18"><rect x="1" y="1" width="14" height="6" fill="none" stroke="#aaa" stroke-dasharray="1.5 1"/><rect x="1" y="9" width="14" height="6" fill="#3fb4c3" stroke="#c6c6c6" stroke-width="1"/><path d="M12 11l6 6M18 11l-6 6" stroke="#ddd" stroke-width="2"/></svg>
<svg style="left:1310px;top:174px;" width="19" height="18" viewBox="0 0 19 18"><rect x="1" y="1" width="14" height="6" fill="#3fb4c3" stroke="#c6c6c6" stroke-width="1"/><rect x="1" y="9" width="14" height="6" fill="#3fb4c3" stroke="#c6c6c6" stroke-width="1"/><path d="M11 8l6 6M17 8l-6 6" stroke="#ddd" stroke-width="2"/></svg>
<div style="left:1335px;top:174px;width:1px;height:20px;background:#666;"></div>
<svg style="left:1343px;top:175px;" width="18" height="16" viewBox="0 0 18 16"><rect x="1" y="1" width="16" height="6" fill="#3fb4c3" stroke="#c6c6c6"/><rect x="1" y="9" width="16" height="6" fill="none" stroke="#aaa" stroke-dasharray="1.5 1"/></svg>
<svg style="left:1370px;top:175px;" width="18" height="16" viewBox="0 0 18 16"><rect x="1" y="1" width="16" height="6" fill="none" stroke="#aaa" stroke-dasharray="1.5 1"/><rect x="1" y="9" width="16" height="6" fill="#3fb4c3" stroke="#c6c6c6"/></svg>
<svg style="left:1397px;top:175px;" width="18" height="16" viewBox="0 0 18 16"><rect x="1" y="1" width="16" height="6" fill="#3fb4c3" stroke="#c6c6c6"/><rect x="1" y="9" width="16" height="6" fill="#3fb4c3" stroke="#c6c6c6"/></svg>
<div style="left:1424px;top:174px;width:1px;height:20px;background:#666;"></div>
<svg style="left:1432px;top:174px;" width="19" height="18" viewBox="0 0 19 18"><rect x="1" y="1" width="16" height="11" fill="#3fb4c3" stroke="#c6c6c6" stroke-width="1.3"/><path d="M4 9l3-5M7 9l3-5M10 9h1M13 9h1" stroke="#333"/><path d="M11 11l7 3.5-7 3.5z" fill="#3fb4c3"/></svg>
<div style="left:1456px;top:173px;width:23px;height:23px;background:#5285a6;"></div>
<svg style="left:1458px;top:175px;" width="19" height="19" viewBox="0 0 19 19"><g fill="#ddd" font-size="6" font-weight="bold"><text x="0" y="6">1</text><text x="0" y="12">2</text><text x="0" y="18">3</text></g><g fill="#3fb4c3" stroke="#333" stroke-width=".8"><rect x="5" y="1.5" width="13" height="4"/><rect x="5" y="7.5" width="13" height="4"/><rect x="5" y="13.5" width="13" height="4"/></g></svg>
<div style="left:1484px;top:174px;width:1px;height:20px;background:#666;"></div>
<svg style="left:1494px;top:176px;" width="15" height="16" viewBox="0 0 15 16"><path d="M0 8l7 4-7 4zM7 0l7 4-7 4z" fill="#3fb4c3"/></svg>
<svg style="left:1522px;top:176px;" width="14" height="16" viewBox="0 0 14 16"><path d="M1 1l12 7-12 7z" fill="#3fb4c3"/></svg>
<div style="left:1545px;top:174px;width:1px;height:20px;background:#666;"></div>
<svg style="left:1679px;top:175px;" width="17" height="17" viewBox="0 0 17 17"><circle cx="6.5" cy="9.5" r="5" fill="none" stroke="#3fb4c3" stroke-width="2"/><path d="M10 13l4 4" stroke="#3fb4c3" stroke-width="2.4"/><path d="M13 0v7M10.5 4.5L13 7l2.5-2.5" stroke="#ddd" stroke-width="1.5" fill="none"/></svg>
<svg style="left:1705px;top:175px;" width="17" height="17" viewBox="0 0 17 17"><circle cx="6.5" cy="9.5" r="5" fill="none" stroke="#3fb4c3" stroke-width="2"/><path d="M10 13l4 4" stroke="#3fb4c3" stroke-width="2.4"/><path d="M13 7V0M10.5 2.5L13 0l2.5 2.5" stroke="#ddd" stroke-width="1.5" fill="none"/></svg>
<div style="left:1731px;top:174px;width:1px;height:20px;background:#666;"></div>
<svg style="left:1772px;top:175px;" width="18" height="16" viewBox="0 0 18 16"><path d="M1 0v8h5M4 5l2.5 3L4 11" stroke="#ddd" stroke-width="1.5" fill="none"/><path d="M9 3h8M9 8.5h8M9 14h8" stroke="#3fb4c3" stroke-width="2"/></svg>
<svg style="left:1871px;top:206px;" width="24" height="12" viewBox="0 0 24 12"><path d="M6 0v11L0 5.5z M17 0v11l6-5.5z" fill="#bdbdbd"/></svg>
<svg style="left:1143px;top:880px;" width="7" height="10" viewBox="0 0 7 10"><path d="M6 0v10L0 5z" fill="#bbb"/></svg>
<svg style="left:1887px;top:880px;" width="7" height="10" viewBox="0 0 7 10"><path d="M0 0v10l6-5z" fill="#bbb"/></svg>
<svg style="left:1729px;top:913px;" width="14" height="16" viewBox="0 0 14 16"><rect x="0" y="1" width="2" height="13" fill="#c6c6c6"/><path d="M8 1.5v12L2 7.5zM14 1.5v12L8 7.5z" fill="#c6c6c6"/></svg>
<svg style="left:1758px;top:913px;" width="12" height="16" viewBox="0 0 12 16"><rect x="0" y="1" width="2" height="13" fill="#c6c6c6"/><path d="M11 1.5v12L3 7.5z" fill="#c6c6c6"/></svg>
<svg style="left:1776px;top:911px;" width="12" height="20" viewBox="0 0 12 20"><rect x="1" y="3" width="3" height="14" fill="#e39a55"/><path d="M2.5 0v20" stroke="#ccc" stroke-width="1" stroke-dasharray="1.5 15 3 1"/><path d="M12 3.5v12L5 9.5z" fill="#c6c6c6"/></svg>
<svg style="left:1800px;top:913px;" width="12" height="16" viewBox="0 0 12 16"><path d="M11 1.5v12L1 7.5z" fill="#c6c6c6"/></svg>
<svg style="left:1823px;top:913px;" width="12" height="16" viewBox="0 0 12 16"><path d="M1 1.5v12l10-6z" fill="#c6c6c6"/></svg>
<svg style="left:1846px;top:911px;" width="12" height="20" viewBox="0 0 12 20"><path d="M0 3.5v12l7-6z" fill="#c6c6c6"/><rect x="8" y="3" width="3" height="14" fill="#e39a55"/></svg>
<svg style="left:1871px;top:913px;" width="12" height="16" viewBox="0 0 12 16"><path d="M0 1.5v12l8-6z" fill="#c6c6c6"/><rect x="9" y="1" width="2" height="13" fill="#c6c6c6"/></svg>
<svg style="left:1891px;top:913px;" width="15" height="16" viewBox="0 0 15 16"><path d="M0 2.5v10l5-5zM5 2.5v10l5-5z" fill="#c6c6c6"/><rect x="11" y="1" width="2" height="13" fill="#c6c6c6"/></svg>
<div style="left:1394px;top:951px;width:1px;height:22px;background:#8a8a8a;"></div>
<div style="left:1393px;top:956px;width:3px;height:12px;background:#8a8a8a;"></div>
<svg style="left:1409px;top:959px;" width="10" height="6" viewBox="0 0 10 6"><path d="M0 0h10L5 6z" fill="#999"/></svg>
<svg style="left:1538px;top:959px;" width="10" height="6" viewBox="0 0 10 6"><path d="M0 0h10L5 6z" fill="#999"/></svg>
<div style="left:1667px;top:951px;width:1px;height:22px;background:#8a8a8a;"></div>
<div style="left:1666px;top:956px;width:3px;height:12px;background:#8a8a8a;"></div>
<svg style="left:1761px;top:959px;" width="10" height="6" viewBox="0 0 10 6"><path d="M0 0h10L5 6z" fill="#c8c8c8"/></svg>
<svg style="left:1788px;top:953px;" width="19" height="17" viewBox="0 0 19 17"><path d="M3 9V5h12M12 2l3 3-3 3M16 8v4H4M7 15l-3-3 3-3" stroke="#c6c6c6" stroke-width="2" fill="none"/></svg>
<svg style="left:1818px;top:952px;" width="20" height="20" viewBox="0 0 20 20"><rect x="2" y="5" width="15" height="11" fill="#e39a55" stroke="#333"/><path d="M4 7h11M4 14h11" stroke="#333" stroke-dasharray="1.5 1"/><rect x="5" y="9" width="9" height="3" fill="#c6c6c6"/><path d="M14 1l4 3-4 3z" fill="#ddd"/></svg>
<div style="left:1850px;top:951px;width:1px;height:22px;background:#8a8a8a;"></div>
<div style="left:1849px;top:956px;width:3px;height:12px;background:#8a8a8a;"></div>
<svg style="left:1862px;top:953px;" width="19" height="18" viewBox="0 0 19 18"><path d="M4 13a7 7 0 1 0-1-6" stroke="#c6c6c6" stroke-width="1.6" fill="none"/><path d="M1 5l2 3 3-2" stroke="#c6c6c6" stroke-width="1.4" fill="none"/><path d="M9 5v5M9 12v1.5" stroke="#e39a55" stroke-width="2"/></svg>
<svg style="left:1888px;top:951px;" width="22" height="22" viewBox="0 0 22 22"><circle cx="6" cy="6" r="3" fill="none" stroke="#c6c6c6" stroke-width="1.6"/><path d="M6 1v2M6 9v2M1 6h2M9 6h2" stroke="#c6c6c6" stroke-width="1.4"/><circle cx="15" cy="6" r="2" fill="#e39a55"/><path d="M14 9l-4 4 2 3-3 4M14 9l2 5 4 2M12 10l-4 1" stroke="#e39a55" stroke-width="2" fill="none"/></svg>
<svg style="left:1893px;top:988px;" width="18" height="20" viewBox="0 0 18 20"><rect x=".5" y="3.5" width="16" height="15" fill="none" stroke="#bbb"/><path d="M1 1.5h2M5 1.5h2M9 1.5h2" stroke="#bbb"/><text x="8.5" y="15" font-size="9" font-weight="bold" text-anchor="middle" fill="#ccc">{;}</text></svg>
<div style="left:1904px;top:151px;width:15px;height:155px;background:#3d3d3d;border-radius:0 3px 3px 0;"></div>
<div class="t" style="left:1905px;top:159px;font-size:11px;letter-spacing:0.3px;color:#a0a0a0;writing-mode:vertical-rl;">Channel Box / Layer Editor</div>
<div style="left:1904px;top:308px;width:15px;height:73px;background:#3d3d3d;border-radius:0 3px 3px 0;"></div>
<div class="t" style="left:1905px;top:318px;font-size:11px;letter-spacing:0.3px;color:#a0a0a0;writing-mode:vertical-rl;">Simplygon</div>
<div style="left:1904px;top:383px;width:15px;height:102px;background:#3d3d3d;border-radius:0 3px 3px 0;"></div>
<div class="t" style="left:1905px;top:397px;font-size:11px;letter-spacing:0.3px;color:#a0a0a0;writing-mode:vertical-rl;">Attribute Editor</div>
<div style="left:1904px;top:487px;width:15px;height:110px;background:#3d3d3d;border-radius:0 3px 3px 0;"></div>
<div class="t" style="left:1905px;top:502px;font-size:11px;letter-spacing:0.3px;color:#a0a0a0;writing-mode:vertical-rl;">Modeling Toolkit</div>
<div style="left:1904px;top:599px;width:15px;height:81px;background:#4a4a4a;border-radius:0 3px 3px 0;"></div>
<div class="t" style="left:1905px;top:613px;font-size:11px;letter-spacing:0.3px;color:#e8e8e8;writing-mode:vertical-rl;">Script Editor</div>
<svg style="left:0;top:0" width="1920" height="1040" viewBox="0 0 1920 1040"><defs><clipPath id="vp"><rect x="318" y="193" width="807" height="702"/></clipPath></defs><g clip-path="url(#vp)" font-family="Liberation Sans, sans-serif"><path d="M721.5 439.5L424.8 543.8M721.5 439.5L1018.1 543.8M730.8 442.8L433.1 549.7M712.1 442.8L1009.8 549.7M740.4 446.1L441.7 555.7M702.5 446.1L1001.2 555.7M750.1 449.6L450.5 562.0M692.8 449.6L992.4 562.0M760.1 453.1L459.6 568.4M682.8 453.1L983.3 568.4M770.3 456.7L469.0 575.0M672.6 456.7L973.9 575.0M780.7 460.3L478.6 581.8M662.2 460.3L964.3 581.8M791.4 464.1L488.6 588.8M651.5 464.1L954.3 588.8M802.3 467.9L498.8 596.1M640.6 467.9L944.1 596.1M813.4 471.8L509.4 603.5M629.5 471.8L933.5 603.5M824.8 475.8L520.3 611.3M618.1 475.8L922.6 611.3M836.5 480.0L531.6 619.2M606.4 480.0L911.3 619.2M848.5 484.2L543.3 627.5M594.4 484.2L899.6 627.5M860.7 488.5L555.3 636.0M582.2 488.5L887.6 636.0M873.3 492.9L567.8 644.8M569.6 492.9L875.1 644.8M886.2 497.4L580.7 653.9M556.7 497.4L862.2 653.9M899.3 502.0L594.1 663.4M543.6 502.0L848.8 663.4M912.9 506.8L608.0 673.2M530.0 506.8L834.9 673.2M926.7 511.7L622.4 683.3M516.2 511.7L820.5 683.3M941.0 516.7L637.3 693.9M501.9 516.7L805.6 693.9M955.6 521.8L652.8 704.9M487.3 521.8L790.1 704.9M970.6 527.1L669.0 716.2M472.3 527.1L773.9 716.2M986.0 532.5L685.8 728.1M456.9 532.5L757.1 728.1M1001.8 538.1L703.2 740.4M441.1 538.1L739.7 740.4M1018.1 543.8L721.5 753.3M424.8 543.8L721.5 753.3" stroke="#404040" stroke-width="1" fill="none" shape-rendering="crispEdges"/>
<defs><clipPath id="sil"><circle cx="721.5" cy="543.8" r="179.2"/></clipPath>
<clipPath id="front"><polygon points="300.0,566.3 543.7,566.3 543.9,567.7 544.2,569.1 544.5,570.5 544.8,571.9 545.3,573.3 545.7,574.7 546.2,576.1 546.8,577.5 547.4,578.9 548.1,580.3 548.8,581.7 549.5,583.1 550.4,584.5 551.2,585.8 552.1,587.2 553.1,588.6 554.1,590.0 555.2,591.4 556.3,592.7 557.5,594.1 558.8,595.4 560.1,596.8 561.4,598.1 562.8,599.5 564.2,600.8 565.7,602.1 567.3,603.4 568.9,604.7 570.5,606.0 572.2,607.3 574.0,608.5 575.8,609.8 577.7,611.0 579.6,612.3 581.6,613.5 583.6,614.7 585.6,615.9 587.7,617.0 589.9,618.2 592.1,619.3 594.4,620.5 596.7,621.6 599.0,622.6 601.4,623.7 603.9,624.8 606.4,625.8 608.9,626.8 611.5,627.8 614.1,628.7 616.8,629.7 619.5,630.6 622.2,631.5 625.0,632.4 627.8,633.2 630.7,634.1 633.6,634.9 636.5,635.7 639.5,636.4 642.5,637.1 645.6,637.8 648.6,638.5 651.7,639.2 654.8,639.8 658.0,640.4 661.2,640.9 664.4,641.5 667.6,642.0 670.9,642.5 674.1,642.9 677.4,643.3 680.8,643.7 684.1,644.1 687.4,644.4 690.8,644.7 694.2,645.0 697.5,645.2 700.9,645.4 704.3,645.6 707.8,645.7 711.2,645.8 714.6,645.9 718.0,646.0 721.5,646.0 721.5,646.0 724.9,646.0 728.3,645.9 731.7,645.8 735.1,645.7 738.6,645.6 742.0,645.4 745.4,645.2 748.7,645.0 752.1,644.7 755.5,644.4 758.8,644.1 762.1,643.7 765.5,643.3 768.8,642.9 772.0,642.5 775.3,642.0 778.5,641.5 781.7,640.9 784.9,640.4 788.1,639.8 791.2,639.2 794.3,638.5 797.3,637.8 800.4,637.1 803.4,636.4 806.4,635.7 809.3,634.9 812.2,634.1 815.1,633.2 817.9,632.4 820.7,631.5 823.4,630.6 826.1,629.7 828.8,628.7 831.4,627.8 834.0,626.8 836.5,625.8 839.0,624.8 841.5,623.7 843.9,622.6 846.2,621.6 848.5,620.5 850.8,619.3 853.0,618.2 855.2,617.0 857.3,615.9 859.3,614.7 861.3,613.5 863.3,612.3 865.2,611.0 867.1,609.8 868.9,608.5 870.7,607.3 872.4,606.0 874.0,604.7 875.6,603.4 877.2,602.1 878.7,600.8 880.1,599.5 881.5,598.1 882.8,596.8 884.1,595.4 885.4,594.1 886.6,592.7 887.7,591.4 888.8,590.0 889.8,588.6 890.8,587.2 891.7,585.8 892.5,584.5 893.4,583.1 894.1,581.7 894.8,580.3 895.5,578.9 896.1,577.5 896.7,576.1 897.2,574.7 897.6,573.3 898.1,571.9 898.4,570.5 898.7,569.1 899.0,567.7 899.2,566.3 1140.0,566.3 1140.0,900.0 300.0,900.0"/></clipPath></defs>
<g clip-path="url(#sil)">
<circle cx="721.5" cy="543.8" r="179.2" fill="#222"/>
<polygon points="721.5,371.5 721.5,371.5 721.5,371.5 721.5,371.5 721.5,371.5 721.5,371.5 721.5,371.5 721.5,371.5 721.5,371.5 721.5,371.5 721.5,371.5 721.5,371.5 721.5,371.5 721.5,371.5 721.5,371.5 721.5,371.5 721.5,371.5 721.5,371.5 721.5,371.5 721.5,371.5 721.5,371.5 721.5,371.5 721.5,371.5 721.5,371.5 721.5,371.5 721.5,371.5 721.5,371.5 721.5,371.5 721.5,371.5 721.5,371.5 721.5,371.5 721.5,371.5 721.5,371.5 721.5,371.5 721.5,371.5 721.5,371.5 721.5,371.5 725.5,371.2 729.5,371.0 733.5,370.8 737.5,370.8 741.5,370.8 745.4,371.0 749.4,371.2 753.2,371.5 757.1,372.0 760.9,372.5 764.7,373.0 768.5,373.7 772.2,374.5 775.8,375.3 779.5,376.3 783.1,377.3 786.6,378.4 790.1,379.5 790.7,380.0 791.2,380.4 791.7,380.8 792.2,381.3 792.7,381.7 793.1,382.2 793.5,382.6 793.9,383.1 794.2,383.5 794.5,384.0 794.8,384.4 795.0,384.9 795.2,385.4 795.4,385.8 795.5,386.3 795.6,386.8 795.7,387.3 795.7,387.7 795.7,388.2 795.7,388.7 795.6,389.2 795.5,389.6 795.3,390.1 795.1,390.6 794.9,391.1 794.6,391.5 794.3,392.0 794.0,392.5 793.6,393.0 793.2,393.4 792.8,393.9 792.3,394.4 791.8,394.8 791.2,395.3 790.6,395.7 790.0,396.2 786.3,394.1 782.6,392.0 778.8,390.0 775.1,388.1 771.3,386.4 767.5,384.6 763.6,383.0 759.8,381.5 756.0,380.1 752.1,378.8 748.3,377.5 744.4,376.4 740.6,375.3 736.7,374.4 732.9,373.5 729.1,372.8 725.3,372.1" fill="rgb(238,238,238)"/>
<polygon points="721.5,371.5 721.5,371.5 721.5,371.5 721.5,371.5 721.5,371.5 721.5,371.5 721.5,371.5 721.5,371.5 721.5,371.5 721.5,371.5 721.5,371.5 721.5,371.5 721.5,371.5 721.5,371.5 721.5,371.5 721.5,371.5 721.5,371.5 721.5,371.5 721.5,371.5 721.5,371.5 721.5,371.5 721.5,371.5 721.5,371.5 721.5,371.5 721.5,371.5 721.5,371.5 721.5,371.5 721.5,371.5 721.5,371.5 721.5,371.5 721.5,371.5 721.5,371.5 721.5,371.5 721.5,371.5 721.5,371.5 721.5,371.5 721.5,371.5 723.4,370.5 725.3,369.6 727.2,368.8 729.0,368.1 730.9,367.5 732.7,367.0 734.5,366.6 736.3,366.3 738.1,366.1 739.8,366.0 741.5,365.9 743.2,366.0 744.8,366.1 766.5,224.4 769.4,224.8 772.3,225.3 775.2,225.7 778.0,226.2 780.4,226.7 782.8,227.1 785.2,227.6 787.6,228.1 789.9,228.6 792.2,229.1 794.5,229.6 796.8,230.2 799.0,230.7 801.2,231.2 803.3,231.8 805.5,232.4 807.6,232.9 809.6,233.5 811.7,234.1 813.7,234.7 815.6,235.3 817.5,235.9 819.4,236.5 776.9,373.4 777.9,373.7 778.9,374.1 779.9,374.4 780.8,374.8 781.7,375.2 782.6,375.5 783.5,375.9 784.3,376.3 785.1,376.7 785.9,377.1 786.7,377.5 787.4,377.9 788.1,378.3 788.8,378.7 789.5,379.1 790.1,379.5 786.6,378.4 783.1,377.3 779.5,376.3 775.8,375.3 772.2,374.5 768.5,373.7 764.7,373.0 760.9,372.5 757.1,372.0 753.2,371.5 749.4,371.2 745.4,371.0 741.5,370.8 737.5,370.8 733.5,370.8 729.5,371.0 725.5,371.2" fill="rgb(224,0,0)"/>
<polygon points="721.5,371.5 721.5,371.5 721.5,371.5 721.5,371.5 721.5,371.5 721.5,371.5 721.5,371.5 721.5,371.5 721.5,371.5 721.5,371.5 721.5,371.5 721.5,371.5 721.5,371.5 721.5,371.5 721.5,371.5 721.5,371.5 721.5,371.5 721.5,371.5 721.5,371.5 721.5,371.5 721.5,371.5 721.5,371.5 721.5,371.5 721.5,371.5 721.5,371.5 721.5,371.5 721.5,371.5 721.5,371.5 721.5,371.5 721.5,371.5 721.5,371.5 721.5,371.5 721.5,371.5 721.5,371.5 721.5,371.5 721.5,371.5 721.5,371.5 720.1,370.4 718.8,369.5 717.6,368.6 716.3,367.9 715.0,367.2 713.8,366.6 712.6,366.2 711.4,365.8 710.2,365.5 709.0,365.3 707.8,365.2 706.7,365.2 692.9,222.5 690.9,222.7 688.9,222.9 686.9,223.1 685.0,223.3 683.1,223.5 685.7,223.2 688.3,223.0 690.9,222.7 693.5,222.5 696.2,222.2 698.8,222.0 701.5,221.9 704.2,221.7 706.9,221.6 709.6,221.5 712.3,221.4 715.0,221.3 717.7,221.3 720.4,221.2 723.1,221.2 725.8,221.3 728.5,221.3 731.2,221.4 733.9,221.5 736.6,221.6 739.3,221.7 741.9,221.9 744.6,222.1 747.3,222.3 749.9,222.5 752.5,222.7 755.2,223.0 757.8,223.3 760.4,223.6 762.9,223.9 765.5,224.3 768.0,224.6 770.6,225.0 773.1,225.4 775.5,225.8 778.0,226.2 775.2,225.7 772.3,225.3 769.4,224.8 766.5,224.4 744.8,366.1 743.2,366.0 741.5,365.9 739.8,366.0 738.1,366.1 736.3,366.3 734.5,366.6 732.7,367.0 730.9,367.5 729.0,368.1 727.2,368.8 725.3,369.6 723.4,370.5" fill="rgb(230,230,0)"/>
<polygon points="721.5,371.5 721.5,371.5 721.5,371.5 721.5,371.5 721.5,371.5 721.5,371.5 721.5,371.5 721.5,371.5 721.5,371.5 721.5,371.5 721.5,371.5 721.5,371.5 721.5,371.5 721.5,371.5 721.5,371.5 721.5,371.5 721.5,371.5 721.5,371.5 721.5,371.5 721.5,371.5 721.5,371.5 721.5,371.5 721.5,371.5 721.5,371.5 721.5,371.5 721.5,371.5 721.5,371.5 721.5,371.5 721.5,371.5 721.5,371.5 721.5,371.5 721.5,371.5 721.5,371.5 721.5,371.5 721.5,371.5 721.5,371.5 721.5,371.5 717.7,371.0 713.9,370.6 710.2,370.3 706.4,370.1 702.7,370.0 699.1,370.0 695.4,370.1 691.8,370.2 688.3,370.5 684.7,370.8 681.2,371.2 677.8,371.8 674.3,372.3 671.0,373.0 667.6,373.8 664.3,374.7 661.1,375.6 657.9,376.6 658.7,376.2 659.6,375.8 660.4,375.5 661.3,375.1 662.3,374.7 663.2,374.4 664.2,374.0 665.2,373.7 666.2,373.3 623.8,236.4 625.7,235.8 627.7,235.2 629.6,234.6 631.6,234.0 633.7,233.4 635.8,232.8 637.9,232.3 640.0,231.7 642.2,231.1 644.4,230.6 646.6,230.0 648.8,229.5 651.1,229.0 653.4,228.5 655.8,228.0 658.2,227.5 660.5,227.0 663.0,226.6 665.4,226.1 667.9,225.7 670.3,225.3 672.9,224.9 675.4,224.5 677.9,224.2 680.5,223.9 683.1,223.5 685.0,223.3 686.9,223.1 688.9,222.9 690.9,222.7 692.9,222.5 706.7,365.2 707.8,365.2 709.0,365.3 710.2,365.5 711.4,365.8 712.6,366.2 713.8,366.6 715.0,367.2 716.3,367.9 717.6,368.6 718.8,369.5 720.1,370.4" fill="rgb(0,204,0)"/>
<polygon points="721.5,371.5 721.5,371.5 721.5,371.5 721.5,371.5 721.5,371.5 721.5,371.5 721.5,371.5 721.5,371.5 721.5,371.5 721.5,371.5 721.5,371.5 721.5,371.5 721.5,371.5 721.5,371.5 721.5,371.5 721.5,371.5 721.5,371.5 721.5,371.5 721.5,371.5 721.5,371.5 721.5,371.5 721.5,371.5 721.5,371.5 721.5,371.5 721.5,371.5 721.5,371.5 721.5,371.5 721.5,371.5 721.5,371.5 721.5,371.5 721.5,371.5 721.5,371.5 721.5,371.5 721.5,371.5 721.5,371.5 721.5,371.5 721.5,371.5 717.4,371.9 713.3,372.4 709.3,373.0 705.2,373.7 701.1,374.5 697.0,375.3 693.0,376.3 688.9,377.4 684.8,378.5 680.8,379.7 676.8,381.1 672.8,382.5 668.8,384.0 664.8,385.6 660.8,387.3 656.9,389.1 653.0,390.9 649.2,392.9 648.8,392.4 648.5,391.9 648.2,391.4 647.9,391.0 647.7,390.5 647.5,390.0 647.4,389.5 647.3,389.1 647.2,388.6 647.2,388.1 647.2,387.6 647.2,387.2 647.3,386.7 647.4,386.2 647.5,385.7 647.7,385.3 647.9,384.8 648.1,384.3 648.4,383.9 648.7,383.4 649.1,383.0 649.4,382.5 649.8,382.1 650.3,381.6 650.8,381.2 651.3,380.7 651.8,380.3 652.4,379.9 652.9,379.4 653.6,379.0 654.2,378.6 654.9,378.2 655.6,377.8 656.4,377.4 657.1,377.0 657.9,376.6 661.1,375.6 664.3,374.7 667.6,373.8 671.0,373.0 674.3,372.3 677.8,371.8 681.2,371.2 684.7,370.8 688.3,370.5 691.8,370.2 695.4,370.1 699.1,370.0 702.7,370.0 706.4,370.1 710.2,370.3 713.9,370.6 717.7,371.0" fill="rgb(0,200,212)"/>
<polygon points="721.5,371.5 721.5,371.5 721.5,371.5 721.5,371.5 721.5,371.5 721.5,371.5 721.5,371.5 721.5,371.5 721.5,371.5 721.5,371.5 721.5,371.5 721.5,371.5 721.5,371.5 721.5,371.5 721.5,371.5 721.5,371.5 721.5,371.5 721.5,371.5 721.5,371.5 721.5,371.5 721.5,371.5 721.5,371.5 721.5,371.5 721.5,371.5 721.5,371.5 721.5,371.5 721.5,371.5 721.5,371.5 721.5,371.5 721.5,371.5 721.5,371.5 721.5,371.5 721.5,371.5 721.5,371.5 721.5,371.5 721.5,371.5 721.5,371.5 719.5,372.6 717.6,373.8 715.6,375.1 713.6,376.5 711.6,378.0 709.6,379.6 707.6,381.3 705.6,383.1 703.5,385.0 701.5,387.0 699.4,389.1 697.4,391.4 695.3,393.7 693.3,396.1 691.3,398.6 689.2,401.2 687.2,404.0 685.1,406.8 683.6,406.5 682.1,406.3 680.7,406.0 679.2,405.7 677.8,405.4 676.4,405.1 675.1,404.8 673.7,404.5 672.4,404.1 671.1,403.8 669.9,403.5 668.6,403.1 667.4,402.7 666.3,402.4 665.1,402.0 664.0,401.6 663.0,401.2 661.9,400.8 660.9,400.4 660.0,400.0 659.0,399.6 658.1,399.2 657.2,398.8 656.4,398.3 655.6,397.9 654.8,397.4 654.1,397.0 653.4,396.6 652.8,396.1 652.1,395.7 651.6,395.2 651.0,394.7 650.5,394.3 650.0,393.8 649.6,393.3 649.2,392.9 653.0,390.9 656.9,389.1 660.8,387.3 664.8,385.6 668.8,384.0 672.8,382.5 676.8,381.1 680.8,379.7 684.8,378.5 688.9,377.4 693.0,376.3 697.0,375.3 701.1,374.5 705.2,373.7 709.3,373.0 713.3,372.4 717.4,371.9" fill="rgb(0,0,214)"/>
<polygon points="721.5,371.5 721.5,371.5 721.5,371.5 721.5,371.5 721.5,371.5 721.5,371.5 721.5,371.5 721.5,371.5 721.5,371.5 721.5,371.5 721.5,371.5 721.5,371.5 721.5,371.5 721.5,371.5 721.5,371.5 721.5,371.5 721.5,371.5 721.5,371.5 721.5,371.5 721.5,371.5 721.5,371.5 721.5,371.5 721.5,371.5 721.5,371.5 721.5,371.5 721.5,371.5 721.5,371.5 721.5,371.5 721.5,371.5 721.5,371.5 721.5,371.5 721.5,371.5 721.5,371.5 721.5,371.5 721.5,371.5 721.5,371.5 721.5,371.5 722.8,372.7 724.1,373.9 725.4,375.3 726.8,376.8 728.2,378.3 729.5,380.0 730.9,381.8 732.3,383.7 733.7,385.7 735.1,387.8 736.5,390.0 737.9,392.3 739.3,394.7 740.7,397.2 742.1,399.8 743.5,402.6 744.9,405.4 746.3,408.3 744.6,408.5 743.0,408.6 741.3,408.8 739.6,408.9 737.9,409.0 736.1,409.1 734.4,409.2 732.7,409.3 730.9,409.4 729.2,409.4 727.4,409.5 725.7,409.5 723.9,409.5 722.2,409.5 720.4,409.5 718.6,409.5 716.9,409.5 715.1,409.5 713.4,409.4 711.6,409.4 709.9,409.3 708.1,409.2 706.4,409.1 704.7,409.0 703.0,408.9 701.3,408.7 699.6,408.6 697.9,408.4 696.3,408.3 694.6,408.1 693.0,407.9 691.4,407.7 689.8,407.5 688.2,407.3 686.7,407.0 685.1,406.8 687.2,404.0 689.2,401.2 691.3,398.6 693.3,396.1 695.3,393.7 697.4,391.4 699.4,389.1 701.5,387.0 703.5,385.0 705.6,383.1 707.6,381.3 709.6,379.6 711.6,378.0 713.6,376.5 715.6,375.1 717.6,373.8 719.5,372.6" fill="rgb(224,0,224)"/>
<polygon points="721.5,371.5 721.5,371.5 721.5,371.5 721.5,371.5 721.5,371.5 721.5,371.5 721.5,371.5 721.5,371.5 721.5,371.5 721.5,371.5 721.5,371.5 721.5,371.5 721.5,371.5 721.5,371.5 721.5,371.5 721.5,371.5 721.5,371.5 721.5,371.5 721.5,371.5 721.5,371.5 721.5,371.5 721.5,371.5 721.5,371.5 721.5,371.5 721.5,371.5 721.5,371.5 721.5,371.5 721.5,371.5 721.5,371.5 721.5,371.5 721.5,371.5 721.5,371.5 721.5,371.5 721.5,371.5 721.5,371.5 721.5,371.5 721.5,371.5 725.3,372.1 729.1,372.8 732.9,373.5 736.7,374.4 740.6,375.3 744.4,376.4 748.3,377.5 752.1,378.8 756.0,380.1 759.8,381.5 763.6,383.0 767.5,384.6 771.3,386.4 775.1,388.1 778.8,390.0 782.6,392.0 786.3,394.1 790.0,396.2 789.3,396.6 788.6,397.1 787.9,397.5 787.1,398.0 786.3,398.4 785.5,398.8 784.6,399.3 783.7,399.7 782.8,400.1 781.8,400.5 780.8,400.9 779.7,401.3 778.6,401.7 777.5,402.1 776.4,402.4 775.2,402.8 774.0,403.2 772.8,403.5 771.5,403.9 770.2,404.2 768.9,404.5 767.6,404.9 766.2,405.2 764.8,405.5 763.4,405.8 761.9,406.0 760.5,406.3 759.0,406.6 757.5,406.8 755.9,407.1 754.4,407.3 752.8,407.5 751.2,407.7 749.6,407.9 747.9,408.1 746.3,408.3 744.9,405.4 743.5,402.6 742.1,399.8 740.7,397.2 739.3,394.7 737.9,392.3 736.5,390.0 735.1,387.8 733.7,385.7 732.3,383.7 730.9,381.8 729.5,380.0 728.2,378.3 726.8,376.8 725.4,375.3 724.1,373.9 722.8,372.7" fill="rgb(130,130,130)"/>
<polygon points="790.0,396.2 790.6,395.7 791.2,395.3 791.8,394.8 792.3,394.4 792.8,393.9 793.2,393.4 793.6,393.0 794.0,392.5 794.3,392.0 794.6,391.5 794.9,391.1 795.1,390.6 795.3,390.1 795.5,389.6 795.6,389.2 795.7,388.7 795.7,388.2 795.7,387.7 795.7,387.3 795.6,386.8 795.5,386.3 795.4,385.8 795.2,385.4 795.0,384.9 794.8,384.4 794.5,384.0 794.2,383.5 793.9,383.1 793.5,382.6 793.1,382.2 792.7,381.7 792.2,381.3 791.7,380.8 791.2,380.4 790.7,380.0 790.1,379.5 793.5,380.8 796.9,382.1 800.2,383.5 803.5,385.0 806.7,386.5 809.8,388.2 812.9,389.9 816.0,391.6 818.9,393.5 821.8,395.4 907.3,280.2 912.3,283.8 917.2,287.5 922.1,291.2 926.8,295.1 931.5,299.0 936.0,303.0 940.5,307.0 942.4,308.8 944.3,310.6 946.1,312.3 947.9,314.1 949.6,315.8 951.3,317.4 850.0,419.0 850.8,419.9 851.6,420.8 852.4,421.8 853.0,422.7 853.6,423.7 854.2,424.6 854.7,425.6 855.1,426.6 855.5,427.6 855.8,428.6 856.0,429.6 856.2,430.6 856.3,431.6 856.4,432.6 856.4,433.6 856.3,434.6 856.2,435.6 856.0,436.7 855.7,437.7 855.3,438.7 854.9,439.7 854.4,440.8 853.9,441.8 853.2,442.8 852.5,443.8 851.8,444.8 850.9,445.9 850.0,446.9 849.0,447.9 846.3,444.5 843.4,441.1 840.5,437.8 837.5,434.5 834.4,431.3 831.3,428.2 828.2,425.1 824.9,422.1 821.6,419.2 818.3,416.3 814.9,413.5 811.5,410.8 808.0,408.2 804.5,405.6 800.9,403.1 797.3,400.7 793.7,398.4" fill="rgb(224,0,0)"/>
<polygon points="790.1,379.5 789.5,379.1 788.8,378.7 788.1,378.3 787.4,377.9 786.7,377.5 785.9,377.1 785.1,376.7 784.3,376.3 783.5,375.9 782.6,375.5 781.7,375.2 780.8,374.8 779.9,374.4 778.9,374.1 777.9,373.7 776.9,373.4 819.4,236.5 817.5,235.9 815.6,235.3 813.7,234.7 811.7,234.1 809.6,233.5 807.6,232.9 805.5,232.4 803.3,231.8 801.2,231.2 799.0,230.7 796.8,230.2 794.5,229.6 792.2,229.1 789.9,228.6 787.6,228.1 785.2,227.6 782.8,227.1 780.4,226.7 778.0,226.2 780.8,226.7 783.6,227.3 786.4,227.8 789.2,228.4 791.9,229.0 794.7,229.7 797.4,230.3 800.2,231.0 802.9,231.7 805.6,232.4 808.4,233.2 811.1,234.0 813.8,234.8 816.6,235.6 819.4,236.5 822.1,237.4 824.9,238.3 827.7,239.2 832.1,240.8 836.4,242.4 840.6,244.0 844.7,245.7 848.8,247.5 852.8,249.2 856.8,251.0 860.7,252.8 864.5,254.7 868.2,256.5 871.8,258.4 875.4,260.4 878.9,262.3 882.4,264.2 885.7,266.2 889.0,268.2 892.2,270.1 895.4,272.1 898.4,274.1 901.4,276.1 904.4,278.1 907.2,280.1 910.0,282.1 912.7,284.1 915.4,286.1 918.0,288.0 920.5,290.0 923.0,292.0 925.4,293.9 927.7,295.8 930.0,297.7 932.2,299.6 934.4,301.5 936.5,303.4 938.5,305.2 940.5,307.0 936.0,303.0 931.5,299.0 926.8,295.1 922.1,291.2 917.2,287.5 912.3,283.8 907.3,280.2 821.8,395.4 818.9,393.5 816.0,391.6 812.9,389.9 809.8,388.2 806.7,386.5 803.5,385.0 800.2,383.5 796.9,382.1 793.5,380.8" fill="rgb(230,230,0)"/>
<polygon points="683.1,223.5 680.5,223.9 677.9,224.2 675.4,224.5 672.9,224.9 670.3,225.3 667.9,225.7 665.4,226.1 663.0,226.6 660.5,227.0 658.2,227.5 655.8,228.0 653.4,228.5 651.1,229.0 648.8,229.5 646.6,230.0 644.4,230.6 642.2,231.1 640.0,231.7 637.9,232.3 635.8,232.8 633.7,233.4 631.6,234.0 629.6,234.6 627.7,235.2 625.7,235.8 623.8,236.4 666.2,373.3 665.2,373.7 664.2,374.0 663.2,374.4 662.3,374.7 661.3,375.1 660.4,375.5 659.6,375.8 658.7,376.2 657.9,376.6 654.8,377.7 651.7,378.9 648.7,380.1 645.7,381.4 579.8,254.0 574.6,256.6 569.5,259.3 564.4,262.0 559.5,264.9 554.6,267.7 549.8,270.7 545.0,273.8 540.4,276.9 535.7,280.1 531.2,283.3 526.7,286.6 522.3,290.0 518.0,293.5 520.4,291.6 522.9,289.6 525.4,287.6 528.0,285.7 530.7,283.7 533.4,281.7 536.2,279.7 539.1,277.7 542.1,275.7 545.1,273.7 548.2,271.7 551.3,269.8 554.6,267.8 557.9,265.8 561.2,263.8 564.7,261.9 568.2,260.0 571.8,258.1 575.5,256.2 579.2,254.3 583.0,252.5 586.9,250.6 590.9,248.9 594.9,247.1 599.0,245.4 603.2,243.7 607.4,242.1 611.7,240.5 616.1,238.9 620.5,237.4 625.0,236.0 629.6,234.6 634.2,233.3 638.9,232.0 643.6,230.8 648.4,229.6 650.4,229.2 652.4,228.7 654.4,228.3 656.3,227.9 658.3,227.5 660.2,227.1 662.1,226.7 664.0,226.4 665.9,226.1 667.8,225.7 669.7,225.4 671.6,225.1 673.5,224.8 675.4,224.5 677.3,224.3 679.2,224.0 681.1,223.8" fill="rgb(0,200,212)"/>
<polygon points="657.9,376.6 657.1,377.0 656.4,377.4 655.6,377.8 654.9,378.2 654.2,378.6 653.6,379.0 652.9,379.4 652.4,379.9 651.8,380.3 651.3,380.7 650.8,381.2 650.3,381.6 649.8,382.1 649.4,382.5 649.1,383.0 648.7,383.4 648.4,383.9 648.1,384.3 647.9,384.8 647.7,385.3 647.5,385.7 647.4,386.2 647.3,386.7 647.2,387.2 647.2,387.6 647.2,388.1 647.2,388.6 647.3,389.1 647.4,389.5 647.5,390.0 647.7,390.5 647.9,391.0 648.2,391.4 648.5,391.9 648.8,392.4 649.2,392.9 645.4,394.9 641.6,397.0 637.9,399.2 634.2,401.4 630.5,403.8 626.9,406.2 623.4,408.7 619.9,411.3 616.4,413.9 613.1,416.6 609.7,419.4 606.5,422.2 603.3,425.1 600.2,428.1 597.1,431.1 594.1,434.2 591.2,437.4 588.4,440.6 587.9,439.5 587.5,438.5 587.2,437.5 586.9,436.5 586.7,435.4 586.6,434.4 586.5,433.4 586.5,432.4 586.6,431.4 586.7,430.4 586.9,429.4 587.2,428.4 587.5,427.4 587.9,426.4 588.3,425.4 588.8,424.5 589.4,423.5 590.0,422.5 590.7,421.6 591.4,420.6 592.2,419.7 593.1,418.8 492.0,317.1 493.6,315.4 495.4,313.7 497.1,312.0 499.0,310.2 500.9,308.5 502.8,306.7 504.8,304.8 506.8,303.0 508.9,301.1 511.1,299.2 513.3,297.4 515.6,295.4 518.0,293.5 522.3,290.0 526.7,286.6 531.2,283.3 535.7,280.1 540.4,276.9 545.0,273.8 549.8,270.7 554.6,267.7 559.5,264.9 564.4,262.0 569.5,259.3 574.6,256.6 579.8,254.0 645.7,381.4 648.7,380.1 651.7,378.9 654.8,377.7" fill="rgb(0,0,214)"/>
<polygon points="649.2,392.9 649.6,393.3 650.0,393.8 650.5,394.3 651.0,394.7 651.6,395.2 652.1,395.7 652.8,396.1 653.4,396.6 654.1,397.0 654.8,397.4 655.6,397.9 656.4,398.3 657.2,398.8 658.1,399.2 659.0,399.6 660.0,400.0 660.9,400.4 661.9,400.8 663.0,401.2 664.0,401.6 665.1,402.0 666.3,402.4 667.4,402.7 668.6,403.1 669.9,403.5 671.1,403.8 672.4,404.1 673.7,404.5 675.1,404.8 676.4,405.1 677.8,405.4 679.2,405.7 680.7,406.0 682.1,406.3 683.6,406.5 685.1,406.8 683.1,409.7 681.1,412.7 679.1,415.8 677.1,419.0 675.1,422.3 673.2,425.7 671.2,429.1 669.3,432.7 667.4,436.3 665.5,440.0 663.7,443.8 661.8,447.6 660.0,451.6 658.3,455.6 656.5,459.6 654.8,463.8 653.1,468.0 651.5,472.2 648.6,471.6 645.8,471.0 643.1,470.3 640.4,469.6 637.8,469.0 635.2,468.2 632.6,467.5 630.2,466.8 627.8,466.0 625.4,465.2 623.1,464.4 620.9,463.6 618.8,462.7 616.7,461.9 614.7,461.0 612.7,460.1 610.8,459.2 609.0,458.3 607.2,457.4 605.6,456.5 604.0,455.5 602.4,454.6 601.0,453.6 599.6,452.6 598.2,451.7 597.0,450.7 595.8,449.7 594.7,448.7 593.6,447.7 592.7,446.7 591.8,445.7 591.0,444.6 590.2,443.6 589.5,442.6 588.9,441.6 588.4,440.6 591.2,437.4 594.1,434.2 597.1,431.1 600.2,428.1 603.3,425.1 606.5,422.2 609.7,419.4 613.1,416.6 616.4,413.9 619.9,411.3 623.4,408.7 626.9,406.2 630.5,403.8 634.2,401.4 637.9,399.2 641.6,397.0 645.4,394.9" fill="rgb(224,0,224)"/>
<polygon points="685.1,406.8 686.7,407.0 688.2,407.3 689.8,407.5 691.4,407.7 693.0,407.9 694.6,408.1 696.3,408.3 697.9,408.4 699.6,408.6 701.3,408.7 703.0,408.9 704.7,409.0 706.4,409.1 708.1,409.2 709.9,409.3 711.6,409.4 713.4,409.4 715.1,409.5 716.9,409.5 718.6,409.5 720.4,409.5 722.2,409.5 723.9,409.5 725.7,409.5 727.4,409.5 729.2,409.4 730.9,409.4 732.7,409.3 734.4,409.2 736.1,409.1 737.9,409.0 739.6,408.9 741.3,408.8 743.0,408.6 744.6,408.5 746.3,408.3 747.7,411.3 749.1,414.4 750.5,417.6 751.8,420.9 753.2,424.3 754.6,427.8 755.9,431.4 757.2,435.0 758.5,438.8 759.8,442.6 761.1,446.5 762.4,450.5 763.6,454.6 764.9,458.7 766.1,462.9 767.3,467.1 768.4,471.5 769.6,475.8 766.4,476.2 763.2,476.6 759.9,477.0 756.6,477.3 753.3,477.6 750.0,477.8 746.6,478.0 743.3,478.3 739.9,478.4 736.5,478.6 733.1,478.7 729.7,478.8 726.2,478.8 722.8,478.9 719.4,478.9 716.0,478.8 712.5,478.8 709.1,478.7 705.7,478.5 702.3,478.4 699.0,478.2 695.6,478.0 692.2,477.8 688.9,477.5 685.6,477.2 682.3,476.9 679.1,476.5 675.9,476.2 672.7,475.8 669.5,475.3 666.4,474.9 663.4,474.4 660.3,473.9 657.3,473.3 654.4,472.8 651.5,472.2 653.1,468.0 654.8,463.8 656.5,459.6 658.3,455.6 660.0,451.6 661.8,447.6 663.7,443.8 665.5,440.0 667.4,436.3 669.3,432.7 671.2,429.1 673.2,425.7 675.1,422.3 677.1,419.0 679.1,415.8 681.1,412.7 683.1,409.7" fill="rgb(130,130,130)"/>
<polygon points="746.3,408.3 747.9,408.1 749.6,407.9 751.2,407.7 752.8,407.5 754.4,407.3 755.9,407.1 757.5,406.8 759.0,406.6 760.5,406.3 761.9,406.0 763.4,405.8 764.8,405.5 766.2,405.2 767.6,404.9 768.9,404.5 770.2,404.2 771.5,403.9 772.8,403.5 774.0,403.2 775.2,402.8 776.4,402.4 777.5,402.1 778.6,401.7 779.7,401.3 780.8,400.9 781.8,400.5 782.8,400.1 783.7,399.7 784.6,399.3 785.5,398.8 786.3,398.4 787.1,398.0 787.9,397.5 788.6,397.1 789.3,396.6 790.0,396.2 793.7,398.4 797.3,400.7 800.9,403.1 804.5,405.6 808.0,408.2 811.5,410.8 814.9,413.5 818.3,416.3 821.6,419.2 824.9,422.1 828.2,425.1 831.3,428.2 834.4,431.3 837.5,434.5 840.5,437.8 843.4,441.1 846.3,444.5 849.0,447.9 848.0,448.9 846.9,449.9 845.7,450.9 844.4,451.9 843.1,452.8 841.7,453.8 840.2,454.8 838.6,455.7 837.0,456.7 835.3,457.6 833.5,458.5 831.7,459.4 829.8,460.3 827.8,461.2 825.8,462.0 823.7,462.9 821.5,463.7 819.3,464.6 817.0,465.4 814.7,466.1 812.2,466.9 809.8,467.7 807.2,468.4 804.6,469.1 802.0,469.8 799.3,470.5 796.5,471.1 793.7,471.7 790.8,472.3 787.9,472.9 785.0,473.5 782.0,474.0 778.9,474.5 775.9,475.0 772.7,475.4 769.6,475.8 768.4,471.5 767.3,467.1 766.1,462.9 764.9,458.7 763.6,454.6 762.4,450.5 761.1,446.5 759.8,442.6 758.5,438.8 757.2,435.0 755.9,431.4 754.6,427.8 753.2,424.3 751.8,420.9 750.5,417.6 749.1,414.4 747.7,411.3" fill="rgb(238,238,238)"/>
<polygon points="849.0,447.9 850.0,446.9 850.9,445.9 851.8,444.8 852.5,443.8 853.2,442.8 853.9,441.8 854.4,440.8 854.9,439.7 855.3,438.7 855.7,437.7 856.0,436.7 856.2,435.6 856.3,434.6 856.4,433.6 856.4,432.6 856.3,431.6 856.2,430.6 856.0,429.6 855.8,428.6 855.5,427.6 855.1,426.6 854.7,425.6 854.2,424.6 853.6,423.7 853.0,422.7 852.4,421.8 851.6,420.8 850.8,419.9 850.0,419.0 951.3,317.4 949.6,315.8 947.9,314.1 946.1,312.3 944.3,310.6 942.4,308.8 940.5,307.0 944.9,311.2 949.2,315.3 953.4,319.6 957.5,323.9 961.5,328.3 965.4,332.8 969.3,337.3 973.0,341.9 976.7,346.5 980.2,351.3 983.7,356.0 987.1,360.9 990.4,365.8 993.6,370.7 996.8,375.7 999.8,380.8 1002.8,386.0 1005.6,391.2 1007.3,394.3 1008.8,397.3 1010.4,400.3 1011.8,403.3 1013.2,406.3 1014.6,409.3 1015.9,412.2 1017.2,415.1 1018.4,417.9 1019.6,420.8 1020.8,423.6 1021.9,426.4 1023.0,429.2 1024.0,431.9 1025.0,434.6 1025.9,437.4 891.1,486.2 891.6,487.7 892.0,489.2 892.3,490.7 892.5,492.2 892.6,493.8 892.7,495.3 892.7,496.9 892.5,498.4 892.3,500.0 892.1,501.6 891.7,503.1 891.2,504.7 890.7,506.3 890.0,507.9 889.3,509.4 888.4,511.0 887.5,512.6 886.5,514.2 885.4,515.7 884.1,511.8 882.7,507.9 881.3,503.9 879.7,500.0 878.1,496.1 876.4,492.2 874.6,488.4 872.7,484.5 870.7,480.7 868.6,476.9 866.4,473.1 864.2,469.4 861.9,465.7 859.4,462.1 857.0,458.5 854.4,454.9 851.8,451.4" fill="rgb(230,230,0)"/>
<polygon points="518.0,293.5 515.6,295.4 513.3,297.4 511.1,299.2 508.9,301.1 506.8,303.0 504.8,304.8 502.8,306.7 500.9,308.5 499.0,310.2 497.1,312.0 495.4,313.7 493.6,315.4 492.0,317.1 593.1,418.8 592.2,419.7 591.4,420.6 590.7,421.6 590.0,422.5 589.4,423.5 588.8,424.5 588.3,425.4 587.9,426.4 587.5,427.4 587.2,428.4 586.9,429.4 586.7,430.4 586.6,431.4 586.5,432.4 586.5,433.4 586.6,434.4 586.7,435.4 586.9,436.5 587.2,437.5 587.5,438.5 587.9,439.5 588.4,440.6 585.6,443.8 582.9,447.1 580.3,450.4 577.8,453.8 575.4,457.2 573.0,460.7 570.7,464.2 568.5,467.7 566.4,471.3 564.4,474.9 562.5,478.5 560.7,482.1 558.9,485.8 557.3,489.5 555.7,493.2 554.2,496.9 552.9,500.7 551.6,504.4 551.1,502.8 550.8,501.2 550.5,499.7 550.3,498.1 550.2,496.6 550.2,495.0 550.3,493.5 550.4,491.9 550.7,490.4 551.0,488.9 551.4,487.4 416.2,439.5 417.1,436.8 418.1,434.1 419.1,431.4 420.2,428.6 421.2,425.8 422.4,423.0 423.5,420.2 424.7,417.4 425.9,414.5 427.2,411.6 428.6,408.7 429.9,405.7 431.4,402.7 432.8,399.7 434.4,396.7 436.0,393.6 437.6,390.6 439.3,387.4 441.1,384.3 442.9,381.1 444.8,377.9 446.8,374.6 448.8,371.4 451.0,368.1 454.1,363.3 457.4,358.6 460.7,354.0 464.0,349.4 467.5,345.0 471.0,340.6 474.5,336.3 478.2,332.0 481.9,327.8 485.6,323.7 489.4,319.7 493.3,315.8 497.3,311.9 501.3,308.1 505.4,304.3 509.5,300.6 513.7,297.0" fill="rgb(224,0,224)"/>
<polygon points="588.4,440.6 588.9,441.6 589.5,442.6 590.2,443.6 591.0,444.6 591.8,445.7 592.7,446.7 593.6,447.7 594.7,448.7 595.8,449.7 597.0,450.7 598.2,451.7 599.6,452.6 601.0,453.6 602.4,454.6 604.0,455.5 605.6,456.5 607.2,457.4 609.0,458.3 610.8,459.2 612.7,460.1 614.7,461.0 616.7,461.9 618.8,462.7 620.9,463.6 623.1,464.4 625.4,465.2 627.8,466.0 630.2,466.8 632.6,467.5 635.2,468.2 637.8,469.0 640.4,469.6 643.1,470.3 645.8,471.0 648.6,471.6 651.5,472.2 649.9,476.5 648.3,480.9 646.8,485.3 645.3,489.7 643.9,494.2 642.5,498.7 641.1,503.3 639.8,507.9 638.6,512.5 637.4,517.1 636.2,521.7 635.1,526.4 634.0,531.1 633.0,535.8 632.1,540.4 631.2,545.1 630.4,549.8 629.6,554.4 625.9,553.5 622.3,552.4 618.7,551.4 615.3,550.3 611.9,549.2 608.5,548.0 605.3,546.8 602.2,545.6 599.1,544.4 596.1,543.1 593.3,541.8 590.5,540.5 587.8,539.2 585.1,537.8 582.6,536.4 580.2,535.0 577.9,533.6 575.6,532.1 573.5,530.7 571.4,529.2 569.5,527.7 567.6,526.2 565.8,524.7 564.2,523.2 562.6,521.6 561.1,520.1 559.8,518.5 558.5,517.0 557.3,515.4 556.2,513.8 555.2,512.3 554.3,510.7 553.5,509.1 552.8,507.5 552.1,506.0 551.6,504.4 552.9,500.7 554.2,496.9 555.7,493.2 557.3,489.5 558.9,485.8 560.7,482.1 562.5,478.5 564.4,474.9 566.4,471.3 568.5,467.7 570.7,464.2 573.0,460.7 575.4,457.2 577.8,453.8 580.3,450.4 582.9,447.1 585.6,443.8" fill="rgb(130,130,130)"/>
<polygon points="651.5,472.2 654.4,472.8 657.3,473.3 660.3,473.9 663.4,474.4 666.4,474.9 669.5,475.3 672.7,475.8 675.9,476.2 679.1,476.5 682.3,476.9 685.6,477.2 688.9,477.5 692.2,477.8 695.6,478.0 699.0,478.2 702.3,478.4 705.7,478.5 709.1,478.7 712.5,478.8 716.0,478.8 719.4,478.9 722.8,478.9 726.2,478.8 729.7,478.8 733.1,478.7 736.5,478.6 739.9,478.4 743.3,478.3 746.6,478.0 750.0,477.8 753.3,477.6 756.6,477.3 759.9,477.0 763.2,476.6 766.4,476.2 769.6,475.8 770.7,480.3 771.8,484.8 772.8,489.3 773.9,493.9 774.9,498.5 775.8,503.1 776.8,507.8 777.7,512.5 778.6,517.3 779.4,522.0 780.2,526.8 781.0,531.6 781.7,536.4 782.4,541.2 783.1,546.0 783.7,550.8 784.3,555.6 784.9,560.4 780.7,561.0 776.4,561.6 772.2,562.2 767.9,562.7 763.5,563.2 759.1,563.6 754.7,564.0 750.3,564.3 745.8,564.6 741.3,564.9 736.8,565.1 732.3,565.2 727.8,565.3 723.3,565.3 718.7,565.3 714.2,565.3 709.7,565.2 705.2,565.0 700.7,564.8 696.2,564.6 691.7,564.3 687.3,563.9 682.9,563.5 678.5,563.1 674.2,562.6 669.9,562.1 665.6,561.5 661.4,560.9 657.2,560.2 653.1,559.5 649.0,558.8 645.0,558.0 641.1,557.2 637.2,556.3 633.3,555.4 629.6,554.4 630.4,549.8 631.2,545.1 632.1,540.4 633.0,535.8 634.0,531.1 635.1,526.4 636.2,521.7 637.4,517.1 638.6,512.5 639.8,507.9 641.1,503.3 642.5,498.7 643.9,494.2 645.3,489.7 646.8,485.3 648.3,480.9 649.9,476.5" fill="rgb(238,238,238)"/>
<polygon points="769.6,475.8 772.7,475.4 775.9,475.0 778.9,474.5 782.0,474.0 785.0,473.5 787.9,472.9 790.8,472.3 793.7,471.7 796.5,471.1 799.3,470.5 802.0,469.8 804.6,469.1 807.2,468.4 809.8,467.7 812.2,466.9 814.7,466.1 817.0,465.4 819.3,464.6 821.5,463.7 823.7,462.9 825.8,462.0 827.8,461.2 829.8,460.3 831.7,459.4 833.5,458.5 835.3,457.6 837.0,456.7 838.6,455.7 840.2,454.8 841.7,453.8 843.1,452.8 844.4,451.9 845.7,450.9 846.9,449.9 848.0,448.9 849.0,447.9 851.8,451.4 854.4,454.9 857.0,458.5 859.4,462.1 861.9,465.7 864.2,469.4 866.4,473.1 868.6,476.9 870.7,480.7 872.7,484.5 874.6,488.4 876.4,492.2 878.1,496.1 879.7,500.0 881.3,503.9 882.7,507.9 884.1,511.8 885.4,515.7 884.2,517.3 882.9,518.8 881.5,520.4 880.0,521.9 878.4,523.5 876.7,525.0 874.9,526.5 873.0,528.0 871.1,529.5 869.0,531.0 866.8,532.4 864.6,533.9 862.2,535.3 859.8,536.7 857.2,538.1 854.6,539.4 851.9,540.8 849.1,542.1 846.2,543.4 843.2,544.6 840.1,545.9 836.9,547.1 833.7,548.3 830.4,549.4 827.0,550.5 823.5,551.6 819.9,552.7 816.3,553.7 812.6,554.6 808.8,555.6 805.0,556.5 801.1,557.3 797.1,558.2 793.1,558.9 789.0,559.7 784.9,560.4 784.3,555.6 783.7,550.8 783.1,546.0 782.4,541.2 781.7,536.4 781.0,531.6 780.2,526.8 779.4,522.0 778.6,517.3 777.7,512.5 776.8,507.8 775.8,503.1 774.9,498.5 773.9,493.9 772.8,489.3 771.8,484.8 770.7,480.3" fill="rgb(224,0,0)"/>
<polygon points="885.4,515.7 886.5,514.2 887.5,512.6 888.4,511.0 889.3,509.4 890.0,507.9 890.7,506.3 891.2,504.7 891.7,503.1 892.1,501.6 892.3,500.0 892.5,498.4 892.7,496.9 892.7,495.3 892.6,493.8 892.5,492.2 892.3,490.7 892.0,489.2 891.6,487.7 891.1,486.2 1025.9,437.4 1025.0,434.6 1024.0,431.9 1023.0,429.2 1021.9,426.4 1020.8,423.6 1019.6,420.8 1018.4,417.9 1017.2,415.1 1015.9,412.2 1014.6,409.3 1013.2,406.3 1011.8,403.3 1010.4,400.3 1008.8,397.3 1007.3,394.3 1005.6,391.2 1008.4,396.4 1011.1,401.8 1013.6,407.1 1016.1,412.6 1018.5,418.1 1020.8,423.7 1023.0,429.3 1025.1,435.0 1027.1,440.7 1029.0,446.5 1030.8,452.4 1032.5,458.3 1034.1,464.3 1035.5,470.4 1036.9,476.5 1038.2,482.6 1039.3,488.9 1040.3,495.2 1040.8,498.7 1041.3,502.2 1041.7,505.6 1042.1,509.0 1042.5,512.4 1042.8,515.8 1043.1,519.2 1043.3,522.6 1043.5,525.9 1043.7,529.2 1043.8,532.6 1043.9,535.9 1044.0,539.2 1044.0,542.5 1044.0,545.8 1044.0,549.1 1043.9,552.4 1043.8,555.7 1043.7,559.0 1043.5,562.4 1043.3,565.7 1043.0,569.1 1042.7,572.4 1042.4,575.8 1042.1,579.2 1041.7,582.7 899.1,567.3 898.7,569.2 898.3,571.2 897.7,573.1 897.1,575.0 896.3,577.0 895.5,578.9 894.6,580.8 893.5,582.8 892.4,584.7 892.8,581.1 893.1,577.4 893.3,573.7 893.4,570.0 893.4,566.3 893.4,562.5 893.2,558.7 893.0,554.9 892.6,551.0 892.2,547.1 891.7,543.2 891.1,539.3 890.3,535.4 889.5,531.5 888.6,527.6 887.7,523.6 886.6,519.7" fill="rgb(0,204,0)"/>
<polygon points="451.0,368.1 448.8,371.4 446.8,374.6 444.8,377.9 442.9,381.1 441.1,384.3 439.3,387.4 437.6,390.6 436.0,393.6 434.4,396.7 432.8,399.7 431.4,402.7 429.9,405.7 428.6,408.7 427.2,411.6 425.9,414.5 424.7,417.4 423.5,420.2 422.4,423.0 421.2,425.8 420.2,428.6 419.1,431.4 418.1,434.1 417.1,436.8 416.2,439.5 551.4,487.4 551.0,488.9 550.7,490.4 550.4,491.9 550.3,493.5 550.2,495.0 550.2,496.6 550.3,498.1 550.5,499.7 550.8,501.2 551.1,502.8 551.6,504.4 550.4,508.1 549.3,511.9 548.3,515.6 547.4,519.4 546.6,523.2 545.9,526.9 545.3,530.7 544.7,534.4 544.3,538.1 544.0,541.8 543.7,545.5 543.6,549.2 543.5,552.9 543.5,556.5 543.6,560.1 543.9,563.7 544.2,567.3 544.5,570.8 544.1,568.9 543.8,566.9 401.2,582.0 400.8,578.6 400.4,575.2 400.1,571.8 399.8,568.4 399.6,565.0 399.4,561.7 399.2,558.4 399.1,555.0 399.0,551.7 398.9,548.4 398.9,545.1 398.9,541.8 398.9,538.5 399.0,535.2 399.1,531.9 399.2,528.6 399.4,525.2 399.6,521.9 399.9,518.5 400.2,515.2 400.5,511.8 400.8,508.4 401.2,504.9 401.7,501.5 402.2,498.0 402.7,494.4 403.3,490.9 403.9,487.3 404.5,483.7 405.3,480.0 406.0,476.3 406.9,472.6 407.7,468.8 409.3,462.4 411.0,456.1 412.9,449.9 414.8,443.8 416.8,437.9 418.9,432.0 421.1,426.1 423.4,420.4 425.8,414.8 428.3,409.3 430.8,403.8 433.5,398.5 436.2,393.2 439.0,388.0 441.9,382.9 444.8,377.9 447.9,372.9" fill="rgb(130,130,130)"/>
<polygon points="551.6,504.4 552.1,506.0 552.8,507.5 553.5,509.1 554.3,510.7 555.2,512.3 556.2,513.8 557.3,515.4 558.5,517.0 559.8,518.5 561.1,520.1 562.6,521.6 564.2,523.2 565.8,524.7 567.6,526.2 569.5,527.7 571.4,529.2 573.5,530.7 575.6,532.1 577.9,533.6 580.2,535.0 582.6,536.4 585.1,537.8 587.8,539.2 590.5,540.5 593.3,541.8 596.1,543.1 599.1,544.4 602.2,545.6 605.3,546.8 608.5,548.0 611.9,549.2 615.3,550.3 618.7,551.4 622.3,552.4 625.9,553.5 629.6,554.4 628.8,559.1 628.2,563.7 627.6,568.3 627.0,572.9 626.5,577.5 626.1,582.0 625.7,586.5 625.4,590.9 625.1,595.3 624.9,599.7 624.7,604.0 624.6,608.2 624.6,612.4 624.6,616.6 624.7,620.6 624.8,624.6 625.0,628.6 625.2,632.5 621.4,631.2 617.6,630.0 613.9,628.7 610.3,627.3 606.8,625.9 603.3,624.5 599.9,623.0 596.7,621.5 593.5,620.0 590.4,618.4 587.4,616.8 584.5,615.2 581.7,613.6 579.0,611.9 576.4,610.2 573.8,608.4 571.4,606.7 569.1,604.9 566.9,603.1 564.8,601.3 562.8,599.4 560.8,597.6 559.0,595.7 557.3,593.8 555.7,592.0 554.2,590.1 552.8,588.1 551.5,586.2 550.3,584.3 549.2,582.4 548.1,580.5 547.2,578.5 546.4,576.6 545.7,574.7 545.1,572.7 544.5,570.8 544.2,567.3 543.9,563.7 543.6,560.1 543.5,556.5 543.5,552.9 543.6,549.2 543.7,545.5 544.0,541.8 544.3,538.1 544.7,534.4 545.3,530.7 545.9,526.9 546.6,523.2 547.4,519.4 548.3,515.6 549.3,511.9 550.4,508.1" fill="rgb(238,238,238)"/>
<polygon points="629.6,554.4 633.3,555.4 637.2,556.3 641.1,557.2 645.0,558.0 649.0,558.8 653.1,559.5 657.2,560.2 661.4,560.9 665.6,561.5 669.9,562.1 674.2,562.6 678.5,563.1 682.9,563.5 687.3,563.9 691.7,564.3 696.2,564.6 700.7,564.8 705.2,565.0 709.7,565.2 714.2,565.3 718.7,565.3 723.3,565.3 727.8,565.3 732.3,565.2 736.8,565.1 741.3,564.9 745.8,564.6 750.3,564.3 754.7,564.0 759.1,563.6 763.5,563.2 767.9,562.7 772.2,562.2 776.4,561.6 780.7,561.0 784.9,560.4 785.4,565.1 785.8,569.9 786.3,574.6 786.7,579.3 787.0,583.9 787.3,588.5 787.6,593.1 787.8,597.7 788.0,602.1 788.1,606.6 788.3,611.0 788.3,615.3 788.4,619.5 788.3,623.7 788.3,627.9 788.2,631.9 788.1,635.9 787.9,639.8 783.5,640.6 779.1,641.4 774.6,642.1 770.1,642.7 765.5,643.3 760.9,643.8 756.3,644.3 751.7,644.7 747.0,645.1 742.3,645.4 737.6,645.6 732.8,645.8 728.1,645.9 723.3,646.0 718.6,646.0 713.9,645.9 709.1,645.8 704.4,645.6 699.7,645.3 695.0,645.0 690.3,644.7 685.7,644.2 681.0,643.7 676.4,643.2 671.9,642.6 667.4,641.9 662.9,641.2 658.5,640.5 654.1,639.6 649.8,638.8 645.6,637.8 641.4,636.9 637.2,635.8 633.2,634.8 629.2,633.6 625.2,632.5 625.0,628.6 624.8,624.6 624.7,620.6 624.6,616.6 624.6,612.4 624.6,608.2 624.7,604.0 624.9,599.7 625.1,595.3 625.4,590.9 625.7,586.5 626.1,582.0 626.5,577.5 627.0,572.9 627.6,568.3 628.2,563.7 628.8,559.1" fill="rgb(224,0,0)"/>
<polygon points="784.9,560.4 789.0,559.7 793.1,558.9 797.1,558.2 801.1,557.3 805.0,556.5 808.8,555.6 812.6,554.6 816.3,553.7 819.9,552.7 823.5,551.6 827.0,550.5 830.4,549.4 833.7,548.3 836.9,547.1 840.1,545.9 843.2,544.6 846.2,543.4 849.1,542.1 851.9,540.8 854.6,539.4 857.2,538.1 859.8,536.7 862.2,535.3 864.6,533.9 866.8,532.4 869.0,531.0 871.1,529.5 873.0,528.0 874.9,526.5 876.7,525.0 878.4,523.5 880.0,521.9 881.5,520.4 882.9,518.8 884.2,517.3 885.4,515.7 886.6,519.7 887.7,523.6 888.6,527.6 889.5,531.5 890.3,535.4 891.1,539.3 891.7,543.2 892.2,547.1 892.6,551.0 893.0,554.9 893.2,558.7 893.4,562.5 893.4,566.3 893.4,570.0 893.3,573.7 893.1,577.4 892.8,581.1 892.4,584.7 891.2,586.6 889.8,588.5 888.4,590.4 886.9,592.3 885.2,594.2 883.5,596.1 881.7,598.0 879.7,599.8 877.7,601.6 875.6,603.5 873.3,605.2 871.0,607.0 868.6,608.8 866.0,610.5 863.4,612.2 860.7,613.9 857.8,615.5 854.9,617.2 851.9,618.8 848.8,620.3 845.6,621.9 842.3,623.3 838.9,624.8 835.4,626.2 831.9,627.6 828.3,628.9 824.5,630.2 820.8,631.5 816.9,632.7 812.9,633.9 808.9,635.0 804.8,636.0 800.7,637.1 796.5,638.0 792.2,638.9 787.9,639.8 788.1,635.9 788.2,631.9 788.3,627.9 788.3,623.7 788.4,619.5 788.3,615.3 788.3,611.0 788.1,606.6 788.0,602.1 787.8,597.7 787.6,593.1 787.3,588.5 787.0,583.9 786.7,579.3 786.3,574.6 785.8,569.9 785.4,565.1" fill="rgb(230,230,0)"/>
<polygon points="892.4,584.7 893.5,582.8 894.6,580.8 895.5,578.9 896.3,577.0 897.1,575.0 897.7,573.1 898.3,571.2 898.7,569.2 899.1,567.3 1041.7,582.7 1042.1,579.2 1042.4,575.8 1042.7,572.4 1043.0,569.1 1043.3,565.7 1043.5,562.4 1043.7,559.0 1043.8,555.7 1043.9,552.4 1044.0,549.1 1044.0,545.8 1044.0,542.5 1044.0,539.2 1043.9,535.9 1043.8,532.6 1043.7,529.2 1043.5,525.9 1043.3,522.6 1043.1,519.2 1042.8,515.8 1042.5,512.4 1042.1,509.0 1041.7,505.6 1041.3,502.2 1040.8,498.7 1040.3,495.2 1041.2,501.5 1042.0,507.9 1042.7,514.3 1043.2,520.9 1043.6,527.4 1043.9,534.0 1044.0,540.7 1044.0,547.4 1043.8,554.2 1043.6,561.0 1043.1,567.8 1042.5,574.7 1041.8,581.6 1040.9,588.6 1039.8,595.6 1038.6,602.6 1037.2,609.6 1035.7,616.7 1035.1,619.3 1034.4,621.8 1033.8,624.4 1033.1,627.0 1032.4,629.6 1031.7,632.2 1030.9,634.8 1030.1,637.4 1029.3,640.1 1028.5,642.7 1027.6,645.4 1026.7,648.1 1025.8,650.8 1024.8,653.5 1023.8,656.2 1022.7,659.0 1021.7,661.8 1020.5,664.6 1019.4,667.4 1018.2,670.2 1017.0,673.1 1015.7,676.0 1014.3,678.9 1013.0,681.9 1011.5,684.9 1010.1,687.9 1008.5,690.9 1006.9,694.0 1005.3,697.0 1003.6,700.2 1001.8,703.3 1000.0,706.5 998.1,709.7 996.1,713.0 994.1,716.2 991.9,719.5 995.0,714.7 998.1,709.7 876.8,633.2 878.3,630.3 879.8,627.4 881.3,624.5 882.6,621.4 883.9,618.4 885.1,615.2 886.3,612.0 887.3,608.8 888.3,605.5 889.2,602.1 890.0,598.7 890.7,595.3 891.4,591.8 891.9,588.3" fill="rgb(0,200,212)"/>
<polygon points="407.7,468.8 406.9,472.6 406.0,476.3 405.3,480.0 404.5,483.7 403.9,487.3 403.3,490.9 402.7,494.4 402.2,498.0 401.7,501.5 401.2,504.9 400.8,508.4 400.5,511.8 400.2,515.2 399.9,518.5 399.6,521.9 399.4,525.2 399.2,528.6 399.1,531.9 399.0,535.2 398.9,538.5 398.9,541.8 398.9,545.1 398.9,548.4 399.0,551.7 399.1,555.0 399.2,558.4 399.4,561.7 399.6,565.0 399.8,568.4 400.1,571.8 400.4,575.2 400.8,578.6 401.2,582.0 543.8,566.9 544.1,568.9 544.5,570.8 545.0,574.3 545.6,577.8 546.2,581.2 547.0,584.6 408.8,623.3 410.4,629.3 412.1,635.2 413.9,641.1 415.8,646.9 417.8,652.6 419.9,658.3 422.1,663.9 424.4,669.5 426.8,675.0 429.3,680.5 431.8,685.8 434.5,691.2 437.3,696.4 435.6,693.3 434.1,690.3 432.5,687.3 431.1,684.3 429.7,681.3 428.3,678.3 427.0,675.4 425.7,672.5 424.5,669.7 423.3,666.8 422.1,664.0 421.0,661.2 419.9,658.4 418.9,655.7 417.9,653.0 417.0,650.2 416.0,647.5 415.1,644.9 414.3,642.2 413.4,639.5 412.6,636.9 411.8,634.3 411.1,631.7 410.4,629.1 409.7,626.5 409.0,623.9 408.3,621.3 407.7,618.7 407.1,616.2 406.5,613.6 406.0,611.1 405.4,608.5 404.9,605.9 404.4,603.4 404.0,600.8 403.5,598.2 402.3,590.4 401.2,582.7 400.4,575.0 399.8,567.4 399.3,559.8 399.0,552.3 398.9,544.9 399.0,537.5 399.2,530.2 399.6,523.0 400.1,515.9 400.8,508.9 401.6,502.0 402.6,495.2 403.7,488.4 404.9,481.8 406.3,475.2" fill="rgb(238,238,238)"/>
<polygon points="544.5,570.8 545.1,572.7 545.7,574.7 546.4,576.6 547.2,578.5 548.1,580.5 549.2,582.4 550.3,584.3 551.5,586.2 552.8,588.1 554.2,590.1 555.7,592.0 557.3,593.8 559.0,595.7 560.8,597.6 562.8,599.4 564.8,601.3 566.9,603.1 569.1,604.9 571.4,606.7 573.8,608.4 576.4,610.2 579.0,611.9 581.7,613.6 584.5,615.2 587.4,616.8 590.4,618.4 593.5,620.0 596.7,621.5 599.9,623.0 603.3,624.5 606.8,625.9 610.3,627.3 613.9,628.7 617.6,630.0 621.4,631.2 625.2,632.5 625.5,636.3 625.9,640.0 626.3,643.6 626.7,647.2 627.2,650.7 627.8,654.1 628.4,657.4 629.0,660.6 629.7,663.8 630.5,666.8 631.3,669.8 632.1,672.7 633.0,675.5 633.9,678.2 634.9,680.7 635.9,683.2 636.9,685.6 638.0,688.0 634.6,686.8 631.3,685.6 628.1,684.3 624.9,683.0 621.8,681.7 618.7,680.3 615.8,678.9 612.9,677.4 610.1,675.9 607.3,674.4 604.7,672.9 602.1,671.3 599.6,669.7 597.2,668.0 594.8,666.4 592.6,664.7 590.4,662.9 588.3,661.2 586.3,659.5 584.4,657.7 582.6,655.9 580.8,654.1 579.2,652.2 577.6,650.4 576.1,648.5 574.7,646.7 455.0,725.6 452.7,722.2 450.5,718.9 448.4,715.6 446.4,712.3 444.4,709.1 442.6,705.9 440.7,702.7 439.0,699.5 437.3,696.4 434.5,691.2 431.8,685.8 429.3,680.5 426.8,675.0 424.4,669.5 422.1,663.9 419.9,658.3 417.8,652.6 415.8,646.9 413.9,641.1 412.1,635.2 410.4,629.3 408.8,623.3 547.0,584.6 546.2,581.2 545.6,577.8 545.0,574.3" fill="rgb(224,0,0)"/>
<polygon points="625.2,632.5 629.2,633.6 633.2,634.8 637.2,635.8 641.4,636.9 645.6,637.8 649.8,638.8 654.1,639.6 658.5,640.5 662.9,641.2 667.4,641.9 671.9,642.6 676.4,643.2 681.0,643.7 685.7,644.2 690.3,644.7 695.0,645.0 699.7,645.3 704.4,645.6 709.1,645.8 713.9,645.9 718.6,646.0 723.3,646.0 728.1,645.9 732.8,645.8 737.6,645.6 742.3,645.4 747.0,645.1 751.7,644.7 756.3,644.3 760.9,643.8 765.5,643.3 770.1,642.7 774.6,642.1 779.1,641.4 783.5,640.6 787.9,639.8 787.7,643.6 787.4,647.4 787.2,651.1 786.8,654.6 786.5,658.1 786.1,661.6 785.7,664.9 785.2,668.1 784.7,671.2 784.2,674.3 783.7,677.2 783.1,680.1 782.5,682.8 781.8,685.4 781.2,688.0 780.5,690.4 779.7,692.8 779.0,695.0 775.2,695.8 771.3,696.5 767.5,697.2 763.5,697.8 759.6,698.4 755.6,698.9 751.6,699.3 747.6,699.7 743.5,700.1 739.5,700.4 735.4,700.6 731.3,700.8 727.2,700.9 723.1,700.9 719.0,700.9 714.9,700.8 710.8,700.7 706.7,700.5 702.6,700.3 698.6,700.0 694.5,699.7 690.5,699.3 686.5,698.8 682.5,698.3 678.6,697.7 674.7,697.1 670.8,696.4 667.0,695.6 663.2,694.9 659.4,694.0 655.7,693.1 652.1,692.2 648.5,691.2 644.9,690.2 641.4,689.1 638.0,688.0 636.9,685.6 635.9,683.2 634.9,680.7 633.9,678.2 633.0,675.5 632.1,672.7 631.3,669.8 630.5,666.8 629.7,663.8 629.0,660.6 628.4,657.4 627.8,654.1 627.2,650.7 626.7,647.2 626.3,643.6 625.9,640.0 625.5,636.3" fill="rgb(230,230,0)"/>
<polygon points="787.9,639.8 792.2,638.9 796.5,638.0 800.7,637.1 804.8,636.0 808.9,635.0 812.9,633.9 816.9,632.7 820.8,631.5 824.5,630.2 828.3,628.9 831.9,627.6 835.4,626.2 838.9,624.8 842.3,623.3 845.6,621.9 848.8,620.3 851.9,618.8 854.9,617.2 857.8,615.5 860.7,613.9 863.4,612.2 866.0,610.5 868.6,608.8 871.0,607.0 873.3,605.2 875.6,603.5 877.7,601.6 879.7,599.8 881.7,598.0 883.5,596.1 885.2,594.2 886.9,592.3 888.4,590.4 889.8,588.5 891.2,586.6 892.4,584.7 891.9,588.3 891.4,591.8 890.7,595.3 890.0,598.7 889.2,602.1 888.3,605.5 887.3,608.8 886.3,612.0 885.1,615.2 883.9,618.4 882.6,621.4 881.3,624.5 879.8,627.4 878.3,630.3 876.8,633.2 998.1,709.7 995.0,714.7 991.9,719.5 989.7,722.9 987.5,726.2 867.9,647.0 866.5,648.9 865.0,650.8 863.4,652.6 861.7,654.4 860.0,656.2 858.1,658.0 856.2,659.8 854.2,661.6 852.1,663.3 849.9,665.0 847.6,666.7 845.2,668.4 842.8,670.0 840.3,671.6 837.7,673.2 835.0,674.7 832.3,676.2 829.4,677.7 826.5,679.2 823.6,680.6 820.5,681.9 817.4,683.3 814.2,684.6 810.9,685.8 807.6,687.0 804.2,688.2 800.8,689.3 797.3,690.4 793.7,691.4 790.1,692.4 786.5,693.3 782.7,694.2 779.0,695.0 779.7,692.8 780.5,690.4 781.2,688.0 781.8,685.4 782.5,682.8 783.1,680.1 783.7,677.2 784.2,674.3 784.7,671.2 785.2,668.1 785.7,664.9 786.1,661.6 786.5,658.1 786.8,654.6 787.2,651.1 787.4,647.4 787.7,643.6" fill="rgb(0,204,0)"/>
<polygon points="437.3,696.4 439.0,699.5 440.7,702.7 442.6,705.9 444.4,709.1 446.4,712.3 448.4,715.6 450.5,718.9 452.7,722.2 455.0,725.6 574.7,646.7 576.1,648.5 577.6,650.4 579.2,652.2 580.8,654.1 582.6,655.9 584.4,657.7 586.3,659.5 588.3,661.2 590.4,662.9 592.6,664.7 594.8,666.4 597.2,668.0 599.6,669.7 602.1,671.3 604.7,672.9 607.3,674.4 610.1,675.9 612.9,677.4 615.8,678.9 618.7,680.3 621.8,681.7 624.9,683.0 628.1,684.3 631.3,685.6 634.6,686.8 638.0,688.0 639.1,690.2 640.2,692.3 641.4,694.3 642.6,696.2 643.9,698.0 645.2,699.8 646.5,701.4 647.8,702.9 649.2,704.3 650.5,705.7 652.0,706.9 653.4,708.1 654.8,709.1 656.3,710.1 657.8,711.0 659.3,711.7 660.9,712.4 662.4,713.0 610.8,846.8 606.5,845.2 602.3,843.6 598.2,841.9 594.1,840.1 590.1,838.4 586.1,836.6 582.2,834.8 578.4,832.9 574.7,831.1 571.1,829.2 567.5,827.2 564.0,825.3 560.5,823.4 557.2,821.4 553.9,819.4 550.7,817.5 547.5,815.5 544.5,813.5 541.5,811.5 538.5,809.5 535.7,807.5 532.9,805.5 530.2,803.5 527.5,801.5 524.9,799.6 522.4,797.6 519.9,795.6 517.5,793.7 515.2,791.8 512.9,789.9 510.7,788.0 508.5,786.1 506.4,784.2 504.4,782.4 502.4,780.6 498.0,776.4 493.7,772.3 489.5,768.0 485.4,763.7 481.4,759.3 477.5,754.8 473.6,750.3 469.9,745.7 466.2,741.1 462.7,736.3 459.2,731.6 455.8,726.7 452.5,721.8 449.3,716.9 446.1,711.9 443.1,706.8 440.1,701.6" fill="rgb(230,230,0)"/>
<polygon points="638.0,688.0 641.4,689.1 644.9,690.2 648.5,691.2 652.1,692.2 655.7,693.1 659.4,694.0 663.2,694.9 667.0,695.6 670.8,696.4 674.7,697.1 678.6,697.7 682.5,698.3 686.5,698.8 690.5,699.3 694.5,699.7 698.6,700.0 702.6,700.3 706.7,700.5 710.8,700.7 714.9,700.8 719.0,700.9 723.1,700.9 727.2,700.9 731.3,700.8 735.4,700.6 739.5,700.4 743.5,700.1 747.6,699.7 751.6,699.3 755.6,698.9 759.6,698.4 763.5,697.8 767.5,697.2 771.3,696.5 775.2,695.8 779.0,695.0 778.2,697.2 777.4,699.2 776.6,701.1 775.7,703.0 774.9,704.7 774.0,706.3 773.1,707.9 772.1,709.3 771.2,710.6 770.2,711.9 769.2,713.0 768.3,714.0 767.2,715.0 766.2,715.8 765.2,716.5 764.1,717.2 763.1,717.7 762.0,718.2 759.3,718.8 756.6,719.3 753.8,719.8 751.1,720.2 748.3,720.7 745.5,721.0 742.6,721.4 739.8,721.7 737.0,721.9 734.1,722.1 731.2,722.3 728.4,722.4 725.5,722.5 722.6,722.5 719.7,722.5 716.8,722.5 714.0,722.4 711.1,722.2 708.2,722.1 705.4,721.9 702.5,721.6 699.7,721.3 696.9,721.0 694.1,720.6 691.3,720.2 688.5,719.7 685.8,719.2 683.1,718.7 680.4,718.1 677.7,717.5 675.1,716.8 672.5,716.1 669.9,715.4 667.4,714.6 664.9,713.8 662.4,713.0 660.9,712.4 659.3,711.7 657.8,711.0 656.3,710.1 654.8,709.1 653.4,708.1 652.0,706.9 650.5,705.7 649.2,704.3 647.8,702.9 646.5,701.4 645.2,699.8 643.9,698.0 642.6,696.2 641.4,694.3 640.2,692.3 639.1,690.2" fill="rgb(0,204,0)"/>
<polygon points="779.0,695.0 782.7,694.2 786.5,693.3 790.1,692.4 793.7,691.4 797.3,690.4 800.8,689.3 804.2,688.2 807.6,687.0 810.9,685.8 814.2,684.6 817.4,683.3 820.5,681.9 823.6,680.6 826.5,679.2 829.4,677.7 832.3,676.2 835.0,674.7 837.7,673.2 840.3,671.6 842.8,670.0 845.2,668.4 847.6,666.7 849.9,665.0 852.1,663.3 854.2,661.6 856.2,659.8 858.1,658.0 860.0,656.2 861.7,654.4 863.4,652.6 865.0,650.8 866.5,648.9 867.9,647.0 987.5,726.2 989.7,722.9 991.9,719.5 988.8,724.3 985.5,729.0 982.2,733.6 978.9,738.2 975.4,742.6 971.9,747.0 968.4,751.3 964.7,755.6 961.0,759.8 957.3,763.9 953.5,767.9 949.6,771.8 945.6,775.7 941.6,779.5 937.5,783.3 933.4,787.0 929.2,790.6 924.9,794.1 922.5,796.0 920.0,798.0 917.5,800.0 914.9,801.9 912.2,803.9 909.5,805.9 906.7,807.9 903.8,809.9 900.8,811.9 897.8,813.9 894.7,815.9 891.6,817.8 888.3,819.8 885.0,821.8 881.7,823.8 878.2,825.7 874.7,827.6 871.1,829.5 867.4,831.4 863.7,833.3 859.9,835.1 856.0,837.0 852.0,838.7 848.0,840.5 843.9,842.2 839.7,843.9 835.5,845.5 831.2,847.1 780.0,713.2 777.5,714.0 775.0,714.8 772.5,715.5 769.9,716.3 767.3,716.9 764.7,717.6 762.0,718.2 763.1,717.7 764.1,717.2 765.2,716.5 766.2,715.8 767.2,715.0 768.3,714.0 769.2,713.0 770.2,711.9 771.2,710.6 772.1,709.3 773.1,707.9 774.0,706.3 774.9,704.7 775.7,703.0 776.6,701.1 777.4,699.2 778.2,697.2" fill="rgb(0,200,212)"/>
<polygon points="502.4,780.6 504.4,782.4 506.4,784.2 508.5,786.1 510.7,788.0 512.9,789.9 515.2,791.8 517.5,793.7 519.9,795.6 522.4,797.6 524.9,799.6 527.5,801.5 530.2,803.5 532.9,805.5 535.7,807.5 538.5,809.5 541.5,811.5 544.5,813.5 547.5,815.5 550.7,817.5 553.9,819.4 557.2,821.4 560.5,823.4 564.0,825.3 567.5,827.2 571.1,829.2 574.7,831.1 578.4,832.9 582.2,834.8 586.1,836.6 590.1,838.4 594.1,840.1 598.2,841.9 602.3,843.6 606.5,845.2 610.8,846.8 662.4,713.0 618.0,849.3 620.8,850.2 623.5,851.1 626.3,852.0 629.1,852.8 631.8,853.6 634.5,854.4 637.3,855.2 640.0,855.9 642.7,856.6 645.5,857.3 648.2,857.9 651.0,858.6 653.7,859.2 656.5,859.8 659.3,860.3 662.1,860.9 664.9,861.4 662.5,860.9 660.1,860.5 657.7,860.0 655.3,859.5 653.0,859.0 650.7,858.5 648.4,858.0 646.1,857.4 643.9,856.9 641.7,856.4 639.6,855.8 637.4,855.2 635.3,854.7 633.3,854.1 631.2,853.5 629.2,852.9 627.3,852.3 625.4,851.7 623.5,851.1 621.6,850.5 619.8,849.9 618.0,849.3 616.2,848.7 614.5,848.1 612.9,847.5 611.2,846.9 609.6,846.4 608.1,845.8 606.6,845.2 605.1,844.6 603.7,844.1 602.3,843.5 600.9,843.0 599.6,842.5 598.3,841.9 597.1,841.4 591.0,838.8 585.1,836.1 579.2,833.3 573.4,830.4 567.7,827.4 562.1,824.3 556.6,821.1 551.2,817.8 545.9,814.4 540.7,811.0 535.6,807.4 530.6,803.8 525.7,800.1 520.8,796.4 516.1,792.5 511.4,788.6 506.9,784.6" fill="rgb(0,204,0)"/>
<polygon points="662.4,713.0 664.9,713.8 667.4,714.6 669.9,715.4 672.5,716.1 675.1,716.8 677.7,717.5 680.4,718.1 683.1,718.7 685.8,719.2 688.5,719.7 691.3,720.2 694.1,720.6 696.9,721.0 699.7,721.3 702.5,721.6 705.4,721.9 708.2,722.1 711.1,722.2 714.0,722.4 716.8,722.5 719.7,722.5 722.6,722.5 725.5,722.5 728.4,722.4 731.2,722.3 734.1,722.1 737.0,721.9 739.8,721.7 742.6,721.4 745.5,721.0 748.3,720.7 751.1,720.2 753.8,719.8 756.6,719.3 759.3,718.8 762.0,718.2 760.9,718.6 790.5,858.9 788.5,859.3 786.6,859.7 784.6,860.1 782.7,860.5 780.8,860.9 778.9,861.2 777.0,861.5 775.1,861.9 773.2,862.2 771.3,862.5 769.4,862.8 767.5,863.1 765.6,863.3 763.7,863.6 761.8,863.8 759.8,864.1 757.2,864.4 754.6,864.6 752.0,864.9 749.4,865.1 746.7,865.4 744.1,865.6 741.4,865.7 738.7,865.9 736.0,866.0 733.3,866.1 730.6,866.2 727.9,866.3 725.2,866.3 722.5,866.4 719.8,866.4 717.1,866.3 714.4,866.3 711.7,866.2 709.0,866.1 706.3,866.0 703.6,865.9 701.0,865.7 698.3,865.5 695.6,865.3 693.0,865.1 690.4,864.9 687.7,864.6 685.1,864.3 682.5,864.0 680.0,863.7 677.4,863.3 674.9,863.0 672.3,862.6 669.8,862.2 667.4,861.8 664.9,861.4 662.1,860.9 659.3,860.3 656.5,859.8 653.7,859.2 651.0,858.6 648.2,857.9 645.5,857.3 642.7,856.6 640.0,855.9 637.3,855.2 634.5,854.4 631.8,853.6 629.1,852.8 626.3,852.0 623.5,851.1 620.8,850.2 618.0,849.3" fill="rgb(0,200,212)"/>
<polygon points="762.0,718.2 764.7,717.6 767.3,716.9 769.9,716.3 772.5,715.5 775.0,714.8 777.5,714.0 780.0,713.2 831.2,847.1 835.5,845.5 839.7,843.9 843.9,842.2 848.0,840.5 852.0,838.7 856.0,837.0 859.9,835.1 863.7,833.3 867.4,831.4 871.1,829.5 874.7,827.6 878.2,825.7 881.7,823.8 885.0,821.8 888.3,819.8 891.6,817.8 894.7,815.9 897.8,813.9 900.8,811.9 903.8,809.9 906.7,807.9 909.5,805.9 912.2,803.9 914.9,801.9 917.5,800.0 920.0,798.0 922.5,796.0 924.9,794.1 920.6,797.6 916.2,801.0 911.7,804.3 907.2,807.5 902.5,810.7 897.9,813.8 893.1,816.9 888.3,819.9 883.4,822.7 878.5,825.6 873.4,828.3 868.3,831.0 863.1,833.6 857.9,836.1 852.5,838.5 847.1,840.9 841.6,843.1 836.0,845.3 834.5,845.9 832.9,846.5 831.3,847.1 829.7,847.7 828.0,848.2 826.3,848.8 824.6,849.4 822.8,850.0 820.9,850.6 819.1,851.2 817.2,851.8 815.2,852.4 813.3,853.0 811.3,853.6 809.2,854.2 807.1,854.8 805.0,855.3 802.9,855.9 800.7,856.5 798.5,857.0 796.3,857.6 794.1,858.1 791.8,858.6 789.5,859.1 787.1,859.6 784.7,860.1 782.4,860.6 779.9,861.0 777.5,861.5 775.0,861.9 772.6,862.3 770.0,862.7 767.5,863.1 765.0,863.4 762.4,863.7 759.8,864.1 761.8,863.8 763.7,863.6 765.6,863.3 767.5,863.1 769.4,862.8 771.3,862.5 773.2,862.2 775.1,861.9 777.0,861.5 778.9,861.2 780.8,860.9 782.7,860.5 784.6,860.1 786.6,859.7 788.5,859.3 790.5,858.9 760.9,718.6" fill="rgb(0,0,214)"/>
<g fill="#000"><polygon points="721.5,371.5 721.5,371.5 721.5,371.5 727.6,372.4 733.7,373.6 739.9,375.1 746.1,376.7 752.3,378.6 758.5,380.8 764.7,383.2 770.8,385.8 776.9,388.7 782.9,391.7 788.9,395.1 794.8,398.6 800.6,402.3 806.4,406.3 812.0,410.4 817.5,414.8 822.8,419.3 828.1,424.0 833.2,428.9 838.1,434.0 842.8,439.2 847.4,444.5 851.8,450.0 856.1,455.6 860.1,461.4 863.9,467.2 867.5,473.1 870.9,479.1 874.1,485.2 877.1,491.4 879.8,497.6 882.3,503.8 884.5,510.0 886.6,516.3 888.4,522.6 889.9,528.9 891.2,535.2 892.3,541.4 893.1,547.6 893.7,553.7 894.0,559.8 894.2,565.9 894.0,571.8 893.7,577.7 893.1,583.5 892.3,589.2 891.3,594.8 890.1,600.2 888.6,605.6 887.0,610.8 885.1,615.9 883.1,620.8 880.8,625.6 878.4,630.3 999.3,707.6 994.5,715.5 989.5,723.2 984.3,730.8 978.9,738.1 973.4,745.2 967.7,752.2 961.8,758.9 955.7,765.5 949.5,771.9 943.1,778.1 936.5,784.2 929.8,790.0 922.9,795.7 915.8,801.2 908.6,806.5 901.1,811.7 893.5,816.7 885.7,821.4 877.7,826.0 869.5,830.4 861.1,834.6 852.5,838.5 843.7,842.3 834.7,845.8 825.5,849.1 816.0,852.2 806.4,855.0 796.5,857.5 786.4,859.7 776.1,861.7 765.6,863.3 754.9,864.6 743.9,865.6 732.8,866.2 721.5,866.4 721.5,866.4 721.5,866.4 732.6,866.2 743.6,865.6 754.4,864.7 764.9,863.4 775.3,861.8 785.4,860.0 795.3,857.8 805.0,855.3 814.5,852.6 823.8,849.7 832.9,846.5 841.7,843.1 850.4,839.5 858.8,835.6 867.1,831.6 875.2,827.4 883.1,822.9 890.8,818.3 898.4,813.5 905.7,808.5 912.9,803.4 920.0,798.0 926.8,792.5 933.5,786.8 940.1,780.9 946.5,774.9 952.7,768.7 958.8,762.2 964.7,755.6 970.5,748.8 976.1,741.8 981.5,734.7 986.7,727.3 991.8,719.7 874.4,637.2 877.0,632.7 879.4,628.1 881.6,623.3 883.7,618.3 885.5,613.2 887.2,608.0 888.6,602.7 889.8,597.2 890.8,591.6 891.6,585.9 892.2,580.1 892.6,574.2 892.7,568.2 892.6,562.1 892.2,556.0 891.6,549.8 890.8,543.5 889.8,537.3 888.5,530.9 886.9,524.6 885.1,518.3 883.1,511.9 880.9,505.6 878.4,499.3 875.7,493.1 872.7,486.9 869.6,480.7 866.2,474.7 862.6,468.7 858.8,462.8 854.8,457.0 850.6,451.3 846.2,445.7 841.6,440.3 836.9,435.1 832.0,429.9 826.9,425.0 821.8,420.2 816.4,415.6 811.0,411.2 805.4,407.0 799.7,403.0 794.0,399.2 788.1,395.6 782.2,392.2 776.2,389.1 770.2,386.2 764.1,383.5 758.0,381.1 751.9,378.9 745.8,376.9 739.7,375.2 733.6,373.7 727.5,372.5"/><polygon points="721.5,371.5 721.5,371.5 721.5,371.5 727.9,371.0 734.3,370.8 740.6,370.8 746.9,371.0 753.1,371.4 759.2,372.1 765.2,373.0 771.2,374.1 777.0,375.5 782.7,377.0 788.3,378.8 793.8,380.8 799.1,382.9 804.3,385.3 809.3,387.8 814.2,390.5 818.9,393.4 905.2,278.7 913.2,284.4 920.9,290.3 928.4,296.4 935.7,302.7 942.8,309.2 949.6,315.8 956.2,322.6 962.6,329.6 968.8,336.7 974.7,344.1 980.4,351.5 985.9,359.2 991.2,367.0 996.3,374.9 1001.1,383.1 1005.7,391.3 1010.1,399.8 1014.2,408.4 1018.1,417.1 1021.7,426.0 1025.2,435.1 1028.3,444.4 1031.2,453.8 1033.8,463.3 1036.2,473.0 1038.2,482.9 1040.0,493.0 1041.4,503.1 1042.6,513.5 1043.4,524.0 1043.9,534.6 1044.0,545.4 1043.8,556.2 1043.2,567.3 1042.2,578.4 1040.7,589.6 1038.9,600.9 1036.7,612.3 1034.0,623.7 1030.8,635.1 1027.2,646.6 1023.1,658.1 1018.5,669.5 1013.4,680.9 1007.9,692.1 1001.8,703.3 995.2,714.3 988.2,725.2 980.6,735.8 972.6,746.2 964.1,756.4 955.1,766.2 945.7,775.7 935.9,784.8 925.6,793.5 915.0,801.8 904.1,809.7 892.8,817.1 881.3,824.0 869.5,830.4 857.6,836.2 845.4,841.6 833.1,846.4 820.7,850.7 808.2,854.5 795.7,857.7 783.2,860.4 770.7,862.6 758.2,864.3 745.9,865.4 733.6,866.1 721.5,866.4 721.5,866.4 721.5,866.4 733.7,866.1 746.1,865.4 758.5,864.2 771.0,862.5 783.6,860.3 796.1,857.6 808.6,854.4 821.1,850.6 833.5,846.3 845.8,841.4 857.9,836.1 869.8,830.2 881.5,823.8 892.9,817.0 904.1,809.7 914.9,801.9 925.4,793.7 935.6,785.1 945.3,776.1 954.6,766.7 963.5,757.0 971.9,747.1 979.9,736.9 987.3,726.4 994.4,715.8 1000.9,704.9 1006.9,694.0 1012.5,682.9 1017.6,671.7 1022.2,660.5 1026.3,649.3 1030.0,638.0 1033.2,626.7 1035.9,615.5 1038.3,604.3 1040.2,593.1 1041.7,582.1 1042.9,571.1 1043.6,560.2 1044.0,549.4 1044.0,538.8 1043.6,528.2 1043.0,517.8 1042.0,507.5 1040.6,497.3 1039.0,487.3 1037.1,477.4 1034.9,467.7 1032.4,458.1 1029.7,448.7 1026.7,439.4 1023.4,430.3 1019.8,421.3 1016.0,412.4 1012.0,403.7 1007.7,395.2 1003.2,386.8 998.5,378.6 993.5,370.5 988.3,362.6 982.8,354.8 977.1,347.2 971.2,339.7 965.1,332.4 958.7,325.3 952.1,318.3 945.2,311.5 938.1,304.9 930.8,298.4 923.2,292.1 915.4,286.1 824.7,397.4 820.1,394.2 815.3,391.3 810.3,388.5 805.2,385.9 800.0,383.5 794.6,381.3 789.0,379.3 783.4,377.5 777.6,375.9 771.7,374.5 765.7,373.3 759.6,372.4 753.4,371.7 747.1,371.2 740.8,370.9 734.4,370.9 727.9,371.1"/><polygon points="721.5,371.5 721.5,371.5 721.5,371.5 724.4,369.9 727.4,368.7 730.3,367.6 733.1,366.8 735.9,366.3 738.6,365.9 741.3,365.9 743.9,366.0 766.4,224.4 770.9,225.1 775.4,225.8 779.8,226.6 784.1,227.4 788.4,228.3 792.7,229.2 797.0,230.2 801.3,231.3 805.5,232.4 809.8,233.6 814.1,234.8 818.4,236.2 822.8,237.6 827.2,239.1 831.6,240.6 836.1,242.3 840.7,244.1 845.3,246.0 850.0,248.0 854.8,250.1 859.8,252.4 864.8,254.9 870.0,257.5 875.3,260.3 880.8,263.3 886.4,266.6 892.2,270.2 898.2,274.0 904.5,278.2 910.9,282.8 917.6,287.7 924.5,293.2 931.7,299.2 939.2,305.8 946.9,313.2 954.9,321.3 963.2,330.3 971.7,340.3 980.4,351.4 989.1,363.8 997.9,377.7 1006.6,393.1 1015.1,410.2 1023.0,429.2 1030.1,450.0 1036.1,472.7 1040.6,497.2 1043.4,523.4 1043.9,550.7 1042.1,578.8 1037.7,607.2 1030.8,635.2 1021.5,662.2 1010.1,687.7 997.1,711.4 982.8,732.9 967.7,752.1 952.2,769.1 936.7,784.0 921.4,796.9 906.5,808.0 892.1,817.5 878.3,825.7 865.2,832.6 852.7,838.4 840.9,843.4 829.8,847.6 819.2,851.2 809.3,854.2 799.8,856.7 790.9,858.8 782.4,860.5 774.4,862.0 766.7,863.2 759.4,864.1 752.4,864.9 745.7,865.4 739.3,865.9 733.1,866.1 727.2,866.3 721.5,866.4 721.5,866.4 721.5,866.4 727.5,866.3 733.8,866.1 740.2,865.8 747.0,865.3 754.0,864.7 761.3,863.9 769.0,862.8 777.0,861.5 785.4,859.9 794.3,858.0 803.6,855.7 813.4,853.0 823.7,849.7 834.5,845.9 845.9,841.4 858.0,836.0 870.6,829.8 883.8,822.5 897.6,814.0 911.9,804.1 926.6,792.7 941.6,779.5 956.7,764.5 971.5,747.5 985.9,728.5 999.4,707.5 1011.7,684.6 1022.3,660.1 1031.0,634.4 1037.6,607.8 1041.9,581.0 1043.8,554.3 1043.6,528.4 1041.5,503.5 1037.6,480.0 1032.4,458.0 1026.1,437.7 1018.9,419.1 1011.3,402.2 1003.2,386.8 995.0,372.8 986.7,360.2 978.4,348.8 970.2,338.5 962.2,329.2 954.4,320.7 946.8,313.0 939.4,306.1 932.3,299.7 925.4,293.9 918.7,288.6 912.2,283.7 905.9,279.2 899.8,275.0 893.9,271.2 888.1,267.6 882.5,264.3 877.1,261.3 871.8,258.4 866.6,255.7 861.5,253.2 856.5,250.9 851.6,248.7 846.8,246.6 842.0,244.6 837.3,242.8 832.7,241.0 828.1,239.4 823.6,237.8 819.1,236.4 814.6,235.0 810.1,233.7 805.6,232.4 801.1,231.2 796.6,230.1 792.1,229.1 787.6,228.1 783.0,227.2 778.3,226.3 773.7,225.5 768.9,224.8 745.1,366.2 742.4,366.0 739.6,366.1 736.7,366.4 733.8,366.9 730.8,367.7 727.7,368.7 724.6,370.0"/><polygon points="721.5,371.5 721.5,371.5 721.5,371.5 719.3,369.9 717.1,368.5 715.0,367.3 713.0,366.5 710.9,365.8 709.0,365.4 707.0,365.3 692.1,222.6 688.8,222.9 685.5,223.2 682.3,223.6 679.1,224.0 675.9,224.5 672.7,224.9 669.5,225.4 666.4,226.0 663.2,226.5 660.0,227.1 656.9,227.8 653.6,228.4 650.4,229.2 647.1,229.9 643.8,230.7 640.4,231.6 636.9,232.5 633.4,233.5 629.8,234.5 626.1,235.7 622.3,236.9 618.4,238.2 614.3,239.6 610.1,241.1 605.8,242.7 601.2,244.5 596.5,246.4 591.5,248.6 586.3,250.9 580.9,253.5 575.1,256.3 569.0,259.5 562.6,263.1 555.7,267.1 548.4,271.6 540.6,276.7 532.3,282.5 523.4,289.2 513.9,296.9 503.7,305.8 492.9,316.2 481.4,328.4 469.3,342.6 456.8,359.3 444.2,379.0 431.8,401.9 420.2,428.5 410.3,458.9 402.9,492.9 399.2,529.9 399.9,568.7 405.3,607.9 415.4,645.7 429.4,680.8 446.3,712.2 464.9,739.3 484.2,762.3 503.3,781.4 521.7,797.1 539.1,809.9 555.4,820.3 570.5,828.9 584.4,835.8 597.2,841.4 608.9,846.1 619.7,849.9 629.7,853.0 638.9,855.6 647.5,857.8 655.4,859.5 662.8,861.0 669.7,862.2 676.2,863.2 682.3,864.0 688.1,864.6 693.6,865.2 698.8,865.6 703.7,865.9 708.4,866.1 712.9,866.2 717.3,866.3 721.5,866.4 721.5,866.4 721.5,866.4 717.6,866.3 713.6,866.3 709.4,866.1 705.1,865.9 700.5,865.7 695.8,865.3 690.7,864.9 685.4,864.3 679.7,863.6 673.7,862.8 667.2,861.8 660.3,860.5 652.9,859.0 644.9,857.1 636.2,854.9 626.8,852.2 616.5,848.8 605.2,844.7 592.9,839.6 579.4,833.4 564.6,825.7 548.4,816.0 530.8,804.0 511.9,789.0 491.9,770.4 471.4,747.6 451.2,720.0 432.6,687.3 416.9,650.0 405.6,609.2 399.7,566.6 399.5,524.4 404.4,484.5 413.3,448.4 425.0,416.6 438.3,389.3 452.2,366.2 466.0,346.9 479.4,330.6 492.1,317.0 504.0,305.6 515.1,295.9 525.3,287.7 534.9,280.7 543.7,274.6 551.9,269.4 559.5,264.8 566.6,260.8 573.3,257.3 579.5,254.2 585.3,251.4 590.8,248.9 596.0,246.6 601.0,244.6 605.6,242.7 610.1,241.1 614.4,239.5 618.5,238.1 622.4,236.8 626.2,235.6 629.9,234.5 633.4,233.5 636.9,232.5 640.2,231.6 643.5,230.8 646.7,230.0 649.9,229.3 653.0,228.6 656.0,228.0 659.0,227.3 662.0,226.8 664.9,226.2 667.9,225.7 670.8,225.2 673.7,224.8 676.6,224.4 679.5,224.0 682.5,223.6 685.4,223.3 688.4,222.9 691.4,222.6 694.5,222.4 708.2,365.2 710.0,365.3 711.8,365.7 713.6,366.4 715.5,367.3 717.5,368.4 719.4,369.8"/><polygon points="721.5,371.5 721.5,371.5 721.5,371.5 715.4,370.8 709.3,370.3 703.3,370.1 697.4,370.1 691.6,370.3 685.9,370.8 680.2,371.5 674.7,372.4 669.2,373.5 663.9,374.9 658.7,376.4 653.6,378.2 648.7,380.1 643.9,382.3 573.4,257.2 565.2,261.6 557.2,266.2 549.4,270.9 541.8,275.9 534.3,281.1 527.1,286.4 520.0,291.9 513.1,297.6 506.4,303.4 499.8,309.5 493.4,315.7 487.2,322.1 481.1,328.7 475.2,335.4 469.5,342.4 464.0,349.5 458.6,356.8 453.4,364.4 448.4,372.1 443.6,380.0 438.9,388.1 434.5,396.5 430.3,405.0 426.3,413.8 422.5,422.8 418.9,432.0 415.6,441.4 412.5,451.1 409.7,461.0 407.2,471.1 405.0,481.5 403.1,492.1 401.5,502.9 400.3,513.9 399.4,525.2 399.0,536.7 398.9,548.4 399.3,560.2 400.1,572.2 401.5,584.4 403.3,596.7 405.6,609.2 408.4,621.7 411.8,634.2 415.8,646.8 420.3,659.4 425.4,671.9 431.1,684.3 437.4,696.6 444.2,708.7 451.6,720.5 459.6,732.1 468.1,743.4 477.1,754.4 486.6,764.9 496.6,775.1 507.0,784.7 517.8,793.9 528.9,802.6 540.3,810.7 552.0,818.3 563.9,825.3 576.0,831.7 588.2,837.6 600.5,842.8 612.9,847.5 625.3,851.7 637.6,855.3 650.0,858.3 662.2,860.9 674.3,862.9 686.3,864.4 698.2,865.5 709.9,866.2 721.5,866.4 721.5,866.4 721.5,866.4 710.1,866.2 698.5,865.5 686.8,864.5 674.9,863.0 662.8,861.0 650.7,858.5 638.4,855.5 626.1,852.0 613.8,847.9 601.4,843.2 589.1,838.0 576.9,832.1 564.7,825.7 552.7,818.7 541.0,811.1 529.4,803.0 518.2,794.3 507.3,785.0 496.8,775.2 486.7,765.0 477.0,754.3 467.9,743.1 459.2,731.6 451.2,719.8 443.6,707.7 436.7,695.4 430.4,682.8 424.7,670.2 419.6,657.4 415.0,644.6 411.1,631.7 407.8,618.9 405.0,606.2 402.7,593.5 401.0,580.9 399.8,568.6 399.1,556.3 398.9,544.3 399.1,532.5 399.7,520.9 400.7,509.5 402.1,498.3 403.9,487.4 405.9,476.8 408.3,466.4 411.0,456.2 414.0,446.3 417.2,436.7 420.7,427.2 424.4,418.1 428.3,409.1 432.5,400.5 436.8,392.0 441.4,383.7 446.1,375.7 451.1,367.9 456.2,360.3 461.4,352.9 466.8,345.8 472.4,338.8 478.2,332.0 484.1,325.4 490.2,318.9 496.4,312.7 502.8,306.7 509.4,300.8 516.1,295.1 522.9,289.6 530.0,284.2 537.2,279.1 544.5,274.1 552.1,269.3 559.8,264.7 567.7,260.2 575.8,256.0 584.1,252.0 649.8,379.6 654.7,377.7 659.7,375.9 664.8,374.4 670.0,373.1 675.4,372.1 680.8,371.2 686.4,370.5 692.0,370.1 697.8,369.9 703.6,370.0 709.5,370.2 715.4,370.7"/><polygon points="721.5,371.5 721.5,371.5 721.5,371.5 715.0,372.2 708.5,373.2 702.0,374.4 695.5,375.8 689.0,377.5 682.6,379.4 676.1,381.5 669.7,383.9 663.4,386.5 657.2,389.3 651.0,392.4 644.9,395.6 638.9,399.1 633.0,402.7 627.2,406.6 621.6,410.7 616.1,414.9 610.7,419.3 605.5,423.9 600.5,428.7 595.6,433.6 591.0,438.6 586.5,443.8 582.2,449.1 578.1,454.5 574.3,460.0 570.6,465.7 567.2,471.4 564.0,477.2 561.0,483.0 558.2,488.9 555.7,494.9 553.5,500.9 551.4,506.9 549.6,512.9 548.1,518.9 546.8,525.0 545.7,531.0 544.9,537.0 544.3,542.9 543.9,548.9 543.8,554.7 543.9,560.6 544.3,566.3 544.9,572.0 545.7,577.6 546.7,583.1 547.9,588.5 411.7,633.8 414.6,643.2 417.7,652.5 421.2,661.6 424.8,670.5 428.7,679.2 432.8,687.8 437.2,696.3 441.8,704.5 446.6,712.7 451.7,720.6 457.0,728.4 462.5,736.1 468.2,743.5 474.1,750.9 480.3,758.0 486.7,765.0 493.3,771.8 500.1,778.4 507.2,784.9 514.5,791.2 522.0,797.3 529.7,803.2 537.7,808.9 546.0,814.4 554.4,819.7 563.1,824.8 572.0,829.7 581.2,834.3 590.6,838.6 600.3,842.7 610.2,846.6 620.3,850.1 630.7,853.3 641.3,856.3 652.2,858.8 663.2,861.1 674.5,862.9 686.0,864.4 697.6,865.5 709.5,866.1 721.5,866.4 721.5,866.4 721.5,866.4 709.3,866.1 697.4,865.5 685.6,864.4 674.0,862.8 662.6,860.9 651.4,858.7 640.4,856.0 629.7,853.0 619.2,849.7 608.9,846.1 598.8,842.2 589.1,837.9 579.5,833.5 570.2,828.7 561.2,823.7 552.4,818.5 543.8,813.1 535.5,807.4 527.5,801.5 519.7,795.5 512.1,789.2 504.8,782.7 497.7,776.1 490.8,769.3 484.2,762.3 477.8,755.2 471.7,747.9 465.8,740.4 460.1,732.8 454.6,725.0 449.4,717.1 444.4,709.0 439.7,700.8 435.2,692.4 430.9,683.9 426.9,675.2 423.1,666.3 419.5,657.3 416.2,648.2 413.2,638.9 410.5,629.5 408.0,619.9 546.1,580.7 545.1,575.2 544.3,569.6 543.7,563.9 543.3,558.2 543.2,552.4 543.3,546.6 543.7,540.7 544.3,534.8 545.1,528.8 546.2,522.9 547.5,516.9 549.0,510.9 550.8,504.9 552.8,498.9 555.1,493.0 557.6,487.1 560.4,481.3 563.3,475.5 566.5,469.8 570.0,464.1 573.6,458.6 577.5,453.1 581.6,447.7 585.9,442.5 590.3,437.4 595.0,432.4 599.9,427.6 604.9,422.9 610.1,418.3 615.5,414.0 621.0,409.8 626.6,405.8 632.4,402.0 638.3,398.4 644.4,395.0 650.5,391.8 656.7,388.8 663.0,386.0 669.4,383.5 675.8,381.2 682.3,379.1 688.8,377.2 695.3,375.6 701.8,374.2 708.4,373.1 714.9,372.2"/><polygon points="721.5,371.5 721.5,371.5 721.5,371.5 718.4,373.3 715.4,375.4 712.3,377.7 709.1,380.3 706.0,383.2 702.8,386.3 699.6,389.7 696.4,393.3 693.2,397.2 690.1,401.4 686.9,405.8 683.7,410.4 680.6,415.4 677.5,420.5 674.4,425.9 671.4,431.5 668.4,437.3 665.5,443.3 662.7,449.5 659.9,455.9 657.2,462.4 654.6,469.2 652.0,476.0 649.6,483.0 647.3,490.1 645.0,497.3 642.9,504.6 640.9,512.0 639.0,519.5 637.3,526.9 635.7,534.4 634.2,541.9 632.8,549.4 631.6,556.9 630.5,564.3 629.6,571.7 628.8,579.0 628.2,586.2 627.7,593.4 627.3,600.4 627.1,607.2 627.0,614.0 627.1,620.5 627.3,627.0 627.7,633.2 628.1,639.2 628.8,645.1 629.5,650.7 630.4,656.2 631.4,661.4 632.5,666.4 633.7,671.1 635.1,675.6 636.5,679.9 638.0,684.0 639.7,687.7 641.4,691.3 643.2,694.6 645.1,697.6 647.1,700.4 649.2,703.0 651.3,705.2 653.5,707.3 655.7,709.1 658.0,710.7 660.3,712.0 662.7,713.1 620.1,850.0 624.5,851.4 628.8,852.8 633.1,854.0 637.4,855.2 641.6,856.3 645.9,857.4 650.2,858.4 654.5,859.3 658.8,860.2 663.1,861.0 667.5,861.8 672.0,862.5 676.5,863.2 681.0,863.8 685.7,864.4 690.4,864.9 695.3,865.3 700.2,865.7 705.3,866.0 710.5,866.2 715.9,866.3 721.5,866.4 721.5,866.4 721.5,866.4 715.6,866.3 709.9,866.2 704.4,865.9 699.1,865.6 693.8,865.2 688.7,864.7 683.7,864.1 678.8,863.5 674.0,862.8 669.2,862.1 664.6,861.3 659.9,860.4 655.3,859.5 650.8,858.5 646.3,857.5 641.8,856.4 637.3,855.2 632.8,853.9 628.3,852.6 623.8,851.2 619.3,849.8 614.8,848.2 659.6,712.0 657.1,710.9 654.7,709.5 652.3,707.9 649.9,706.1 647.6,704.0 645.4,701.7 643.2,699.1 641.2,696.3 639.2,693.2 637.3,689.9 635.4,686.3 633.7,682.5 632.1,678.5 630.6,674.2 629.2,669.6 627.9,664.9 626.7,659.9 625.7,654.7 624.8,649.2 624.0,643.6 623.3,637.7 622.8,631.7 622.5,625.5 622.2,619.1 622.2,612.5 622.2,605.8 622.5,599.0 622.8,592.0 623.4,584.9 624.0,577.7 624.9,570.4 625.8,563.1 627.0,555.7 628.2,548.3 629.7,540.8 631.2,533.3 632.9,525.9 634.8,518.4 636.7,511.1 638.8,503.7 641.1,496.5 643.4,489.3 645.8,482.2 648.4,475.3 651.1,468.4 653.8,461.8 656.6,455.2 659.6,448.9 662.6,442.7 665.6,436.8 668.8,431.0 671.9,425.4 675.2,420.1 678.4,415.0 681.7,410.1 685.0,405.5 688.4,401.1 691.7,397.0 695.1,393.1 698.4,389.5 701.8,386.1 705.1,383.0 708.5,380.2 711.8,377.6 715.0,375.3 718.3,373.3"/><polygon points="721.5,371.5 721.5,371.5 721.5,371.5 723.7,373.4 725.9,375.6 728.2,378.0 730.4,380.7 732.7,383.7 735.1,386.9 737.4,390.4 739.7,394.2 742.1,398.2 744.4,402.5 746.7,407.0 749.1,411.8 751.4,416.9 753.7,422.1 755.9,427.7 758.1,433.4 760.3,439.4 762.5,445.5 764.6,451.9 766.6,458.5 768.6,465.2 770.6,472.1 772.5,479.1 774.3,486.3 776.0,493.6 777.7,501.0 779.2,508.4 780.7,516.0 782.1,523.6 783.4,531.2 784.6,538.9 785.7,546.6 786.7,554.2 787.6,561.9 788.4,569.4 789.1,577.0 789.7,584.4 790.2,591.7 790.6,599.0 790.8,606.1 791.0,613.0 791.1,619.9 791.0,626.5 790.8,633.0 790.6,639.3 790.2,645.4 789.8,651.3 789.2,656.9 788.6,662.4 787.8,667.6 787.0,672.5 786.1,677.3 785.1,681.7 784.0,686.0 782.9,689.9 781.6,693.6 780.3,697.1 779.0,700.3 777.6,703.2 776.1,705.9 774.6,708.3 773.0,710.4 771.4,712.3 769.7,714.0 768.0,715.4 766.3,716.5 764.5,717.5 762.7,718.1 792.5,858.4 789.3,859.2 786.0,859.8 782.9,860.5 779.7,861.1 776.5,861.6 773.4,862.2 770.2,862.7 767.0,863.1 763.8,863.6 760.6,864.0 757.4,864.4 754.1,864.7 750.8,865.0 747.4,865.3 744.0,865.6 740.5,865.8 736.9,866.0 733.2,866.1 729.4,866.3 725.5,866.3 721.5,866.4 721.5,866.4 721.5,866.4 725.2,866.3 728.8,866.3 732.2,866.2 735.6,866.0 738.9,865.9 742.2,865.7 745.3,865.5 748.4,865.2 751.5,865.0 754.5,864.7 757.5,864.3 760.4,864.0 763.4,863.6 766.3,863.2 769.2,862.8 772.1,862.4 775.0,861.9 778.0,861.4 780.9,860.8 783.9,860.3 786.9,859.6 759.5,718.9 761.1,718.2 762.8,717.3 764.4,716.2 765.9,714.8 767.5,713.2 769.0,711.3 770.4,709.2 771.8,706.8 773.2,704.1 774.5,701.2 775.7,698.1 776.9,694.6 778.0,690.9 779.1,687.0 780.1,682.8 781.0,678.3 781.9,673.6 782.6,668.6 783.3,663.4 783.9,658.0 784.4,652.3 784.9,646.4 785.2,640.3 785.4,634.0 785.6,627.5 785.6,620.9 785.6,614.0 785.4,607.1 785.2,599.9 784.8,592.7 784.4,585.3 783.9,577.8 783.2,570.3 782.5,562.7 781.6,555.0 780.7,547.4 779.7,539.7 778.6,532.0 777.4,524.3 776.1,516.7 774.7,509.1 773.2,501.6 771.7,494.2 770.1,486.8 768.5,479.6 766.7,472.6 764.9,465.7 763.1,458.9 761.2,452.3 759.2,445.9 757.3,439.7 755.2,433.7 753.2,428.0 751.1,422.4 749.0,417.1 746.9,412.0 744.7,407.2 742.6,402.7 740.4,398.3 738.3,394.3 736.1,390.5 734.0,387.0 731.8,383.7 729.7,380.8 727.6,378.0 725.5,375.6 723.5,373.4"/><polygon points="721.5,407.9 724.5,407.9 727.6,407.8 730.6,407.7 733.7,407.6 736.7,407.4 739.7,407.2 742.6,407.0 745.5,406.7 748.4,406.4 751.2,406.0 754.0,405.7 756.7,405.2 759.3,404.8 761.8,404.3 764.3,403.8 766.7,403.3 769.0,402.7 771.3,402.1 773.4,401.5 775.4,400.9 777.4,400.2 779.2,399.5 780.9,398.8 782.6,398.1 784.1,397.3 785.5,396.6 786.8,395.8 788.0,395.0 789.1,394.2 790.1,393.4 790.9,392.6 791.6,391.8 792.3,391.0 792.8,390.2 793.1,389.3 793.4,388.5 793.6,387.7 793.6,386.8 793.6,386.0 793.4,385.2 793.1,384.4 792.7,383.6 792.2,382.8 791.6,382.0 790.9,381.2 790.1,380.4 789.2,379.6 788.2,378.9 787.1,378.2 785.9,377.4 784.6,376.7 783.3,376.0 781.8,375.4 780.3,374.7 778.7,374.1 777.0,373.5 775.2,372.9 815.0,235.1 811.6,234.1 808.1,233.1 804.4,232.1 800.7,231.1 796.9,230.2 793.0,229.3 789.0,228.4 784.9,227.5 780.7,226.7 776.5,226.0 772.1,225.2 767.7,224.6 763.3,224.0 758.8,223.4 754.2,222.9 749.6,222.5 745.0,222.1 740.3,221.8 735.6,221.6 730.9,221.4 726.2,221.3 721.5,221.2 716.7,221.3 712.0,221.4 707.3,221.6 702.6,221.8 697.9,222.1 693.3,222.5 688.7,222.9 684.1,223.4 679.6,224.0 675.2,224.6 670.8,225.2 666.4,226.0 662.2,226.7 658.0,227.5 653.9,228.4 649.9,229.3 646.0,230.2 642.2,231.1 638.5,232.1 634.8,233.1 631.3,234.1 627.9,235.1 667.7,372.9 665.9,373.5 664.2,374.1 662.6,374.7 661.1,375.4 659.6,376.0 658.3,376.7 657.0,377.4 655.8,378.2 654.7,378.9 653.7,379.6 652.8,380.4 652.0,381.2 651.3,382.0 650.7,382.8 650.2,383.6 649.8,384.4 649.5,385.2 649.3,386.0 649.3,386.8 649.3,387.7 649.5,388.5 649.8,389.3 650.1,390.2 650.6,391.0 651.3,391.8 652.0,392.6 652.8,393.4 653.8,394.2 654.9,395.0 656.1,395.8 657.4,396.6 658.8,397.3 660.3,398.1 662.0,398.8 663.7,399.5 665.5,400.2 667.5,400.9 669.5,401.5 671.6,402.1 673.9,402.7 676.2,403.3 678.6,403.8 681.1,404.3 683.6,404.8 686.2,405.2 688.9,405.7 691.7,406.0 694.5,406.4 697.4,406.7 700.3,407.0 703.2,407.2 706.2,407.4 709.2,407.6 712.3,407.7 715.3,407.8 718.4,407.9 721.5,407.9 721.5,409.5 721.5,411.2 718.2,411.2 714.9,411.1 711.7,411.0 708.4,410.9 705.2,410.7 702.1,410.5 698.9,410.2 695.8,409.9 692.8,409.6 689.8,409.2 686.9,408.8 684.0,408.3 681.3,407.9 678.6,407.3 675.9,406.8 673.4,406.2 670.9,405.6 668.6,405.0 666.3,404.3 664.2,403.6 662.1,402.9 660.2,402.2 658.3,401.4 656.6,400.7 655.0,399.9 653.5,399.0 652.2,398.2 650.9,397.4 649.8,396.5 648.8,395.7 647.9,394.8 647.1,393.9 646.5,393.1 646.0,392.2 645.6,391.3 645.3,390.4 645.1,389.5 645.1,388.6 645.2,387.8 645.4,386.9 645.7,386.0 646.1,385.2 646.7,384.3 647.3,383.5 648.1,382.6 648.9,381.8 649.9,381.0 651.0,380.2 652.1,379.4 653.4,378.7 654.8,377.9 656.2,377.2 657.7,376.5 659.4,375.8 661.1,375.1 662.9,374.4 619.3,237.8 622.8,236.7 626.4,235.6 630.1,234.4 633.9,233.3 637.8,232.3 641.9,231.2 646.0,230.2 650.2,229.2 654.5,228.3 658.9,227.4 663.4,226.5 667.9,225.7 672.6,225.0 677.3,224.3 682.0,223.7 686.8,223.1 691.7,222.6 696.6,222.2 701.5,221.9 706.5,221.6 711.5,221.4 716.4,221.3 721.5,221.2 726.5,221.3 731.4,221.4 736.4,221.6 741.4,221.9 746.3,222.2 751.2,222.6 756.1,223.1 760.9,223.7 765.6,224.3 770.3,225.0 775.0,225.7 779.5,226.5 784.0,227.4 788.4,228.3 792.7,229.2 796.9,230.2 801.0,231.2 805.1,232.3 809.0,233.3 812.8,234.4 816.5,235.6 820.1,236.7 823.6,237.8 780.0,374.4 781.8,375.1 783.5,375.8 785.2,376.5 786.7,377.2 788.1,377.9 789.5,378.7 790.8,379.4 791.9,380.2 793.0,381.0 794.0,381.8 794.8,382.6 795.6,383.5 796.2,384.3 796.8,385.2 797.2,386.0 797.5,386.9 797.7,387.8 797.8,388.6 797.8,389.5 797.6,390.4 797.3,391.3 796.9,392.2 796.4,393.1 795.8,393.9 795.0,394.8 794.1,395.7 793.1,396.5 792.0,397.4 790.7,398.2 789.4,399.0 787.9,399.9 786.3,400.7 784.6,401.4 782.7,402.2 780.8,402.9 778.7,403.6 776.6,404.3 774.3,405.0 772.0,405.6 769.5,406.2 767.0,406.8 764.3,407.3 761.6,407.9 758.9,408.3 756.0,408.8 753.1,409.2 750.1,409.6 747.1,409.9 744.0,410.2 740.8,410.5 737.7,410.7 734.5,410.9 731.2,411.0 728.0,411.1 724.7,411.2 721.5,411.2 721.5,409.5"/><polygon points="721.5,476.4 727.5,476.4 733.6,476.2 739.7,476.0 745.7,475.7 751.6,475.3 757.5,474.7 763.3,474.2 769.0,473.5 774.5,472.7 780.0,471.8 785.3,470.9 790.5,469.9 795.6,468.8 800.4,467.7 805.1,466.4 809.6,465.2 814.0,463.8 818.1,462.4 822.0,460.9 825.7,459.4 829.3,457.9 832.5,456.3 835.6,454.6 838.5,453.0 841.1,451.3 843.5,449.5 845.6,447.8 847.6,446.0 849.3,444.2 850.7,442.4 852.0,440.6 853.0,438.8 853.8,437.0 854.4,435.2 854.7,433.4 854.9,431.6 854.8,429.8 854.6,428.0 854.1,426.3 853.4,424.5 852.5,422.8 851.5,421.1 850.2,419.4 848.8,417.8 947.8,314.0 944.8,311.0 941.5,308.0 938.1,304.8 934.5,301.6 930.7,298.3 926.7,295.0 922.6,291.6 918.2,288.2 913.6,284.7 908.9,281.3 903.9,277.8 898.6,274.3 893.2,270.8 887.5,267.3 881.6,263.8 875.5,260.4 869.1,257.0 862.5,253.7 855.7,250.5 848.7,247.4 841.4,244.4 833.9,241.5 826.2,238.7 818.3,236.1 810.2,233.7 801.9,231.4 793.4,229.4 784.8,227.5 776.0,225.9 767.1,224.5 758.1,223.3 749.0,222.4 739.9,221.8 730.7,221.4 721.5,221.2 712.2,221.4 703.0,221.8 693.9,222.4 684.8,223.3 675.8,224.5 666.9,225.9 658.1,227.5 649.5,229.4 641.0,231.4 632.7,233.7 624.6,236.1 616.7,238.7 609.0,241.5 601.5,244.4 594.2,247.4 587.2,250.5 580.4,253.7 573.8,257.0 567.4,260.4 561.3,263.8 555.4,267.3 549.7,270.8 544.3,274.3 539.0,277.8 534.0,281.3 529.3,284.7 524.7,288.2 520.3,291.6 516.2,295.0 512.2,298.3 508.4,301.6 504.8,304.8 501.4,308.0 498.1,311.0 495.1,314.0 594.1,417.8 592.7,419.4 591.4,421.1 590.4,422.8 589.5,424.5 588.8,426.3 588.3,428.0 588.1,429.8 588.0,431.6 588.2,433.4 588.5,435.2 589.1,437.0 589.9,438.8 590.9,440.6 592.2,442.4 593.6,444.2 595.3,446.0 597.3,447.8 599.4,449.5 601.8,451.3 604.4,453.0 607.3,454.6 610.4,456.3 613.6,457.9 617.2,459.4 620.9,460.9 624.8,462.4 628.9,463.8 633.3,465.2 637.8,466.4 642.5,467.7 647.3,468.8 652.4,469.9 657.6,470.9 662.9,471.8 668.4,472.7 673.9,473.5 679.6,474.2 685.4,474.7 691.3,475.3 697.2,475.7 703.2,476.0 709.3,476.2 715.4,476.4 721.5,476.4 721.5,478.9 721.5,481.3 715.2,481.3 709.0,481.1 702.8,480.9 696.6,480.5 690.5,480.1 684.5,479.6 678.6,478.9 672.7,478.2 667.0,477.4 661.4,476.5 655.9,475.6 650.6,474.5 645.5,473.4 640.5,472.2 635.7,470.9 631.0,469.6 626.6,468.2 622.4,466.7 618.4,465.2 614.6,463.6 611.0,462.0 607.7,460.4 604.5,458.7 601.6,457.0 599.0,455.2 596.5,453.4 594.3,451.6 592.4,449.8 590.7,447.9 589.2,446.0 587.9,444.2 586.9,442.3 586.1,440.4 585.5,438.6 585.1,436.7 585.0,434.8 585.1,433.0 585.4,431.1 585.9,429.3 586.6,427.5 587.5,425.7 588.6,424.0 589.9,422.3 591.4,420.6 490.2,318.9 493.3,315.8 496.6,312.5 500.0,309.2 503.6,305.9 507.5,302.4 511.5,299.0 515.7,295.4 520.1,291.8 524.7,288.2 529.5,284.5 534.6,280.9 539.9,277.2 545.4,273.5 551.1,269.9 557.1,266.2 563.3,262.6 569.8,259.1 576.5,255.6 583.5,252.2 590.7,248.9 598.1,245.7 605.8,242.7 613.7,239.8 621.8,237.0 630.1,234.4 638.6,232.1 647.3,229.9 656.2,227.9 665.2,226.2 674.4,224.7 683.7,223.5 693.0,222.5 702.5,221.8 711.9,221.4 721.5,221.2 731.0,221.4 740.4,221.8 749.9,222.5 759.2,223.5 768.5,224.7 777.7,226.2 786.7,227.9 795.6,229.9 804.3,232.1 812.8,234.4 821.1,237.0 829.2,239.8 837.1,242.7 844.8,245.7 852.2,248.9 859.4,252.2 866.4,255.6 873.1,259.1 879.6,262.6 885.8,266.2 891.8,269.9 897.5,273.5 903.0,277.2 908.3,280.9 913.4,284.5 918.2,288.2 922.8,291.8 927.2,295.4 931.4,299.0 935.4,302.4 939.3,305.9 942.9,309.2 946.3,312.5 949.6,315.8 952.7,318.9 851.5,420.6 853.0,422.3 854.3,424.0 855.4,425.7 856.3,427.5 857.0,429.3 857.5,431.1 857.8,433.0 857.9,434.8 857.8,436.7 857.4,438.6 856.8,440.4 856.0,442.3 855.0,444.2 853.7,446.0 852.2,447.9 850.5,449.8 848.6,451.6 846.4,453.4 843.9,455.2 841.3,457.0 838.4,458.7 835.2,460.4 831.9,462.0 828.3,463.6 824.5,465.2 820.5,466.7 816.3,468.2 811.9,469.6 807.2,470.9 802.4,472.2 797.4,473.4 792.3,474.5 787.0,475.6 781.5,476.5 775.9,477.4 770.2,478.2 764.3,478.9 758.4,479.6 752.4,480.1 746.3,480.5 740.1,480.9 733.9,481.1 727.7,481.3 721.5,481.3 721.5,478.9"/><polygon points="721.5,562.7 729.6,562.6 737.6,562.4 745.7,562.0 753.7,561.5 761.6,560.8 769.4,559.9 777.0,558.9 784.6,557.8 791.9,556.5 799.1,555.1 806.1,553.6 812.9,551.9 819.5,550.2 825.8,548.3 831.9,546.3 837.7,544.2 843.2,542.0 848.5,539.7 853.5,537.3 858.2,534.9 862.6,532.4 866.7,529.9 870.4,527.2 873.9,524.6 877.1,521.9 879.9,519.1 882.5,516.4 884.7,513.6 886.6,510.8 888.3,508.0 889.6,505.2 890.6,502.4 891.4,499.6 891.8,496.8 892.0,494.0 891.9,491.2 891.6,488.5 890.9,485.8 1025.0,434.6 1023.2,429.8 1021.3,424.9 1019.3,419.9 1017.1,414.8 1014.8,409.7 1012.4,404.5 1009.8,399.2 1007.0,393.8 1004.1,388.4 1000.9,382.8 997.6,377.1 994.0,371.3 990.2,365.5 986.2,359.5 981.9,353.4 977.2,347.3 972.3,341.0 967.0,334.7 961.4,328.3 955.5,321.8 949.1,315.3 942.3,308.7 935.0,302.1 927.3,295.5 919.1,288.9 910.5,282.4 901.2,276.0 891.5,269.7 881.2,263.6 870.4,257.7 859.0,252.0 847.1,246.7 834.7,241.8 821.7,237.2 808.3,233.2 794.6,229.6 780.4,226.7 765.9,224.3 751.2,222.6 736.4,221.6 721.5,221.2 706.5,221.6 691.7,222.6 677.0,224.3 662.5,226.7 648.3,229.6 634.6,233.2 621.2,237.2 608.2,241.8 595.8,246.7 583.9,252.0 572.5,257.7 561.7,263.6 551.4,269.7 541.7,276.0 532.4,282.4 523.8,288.9 515.6,295.5 507.9,302.1 500.6,308.7 493.8,315.3 487.4,321.8 481.5,328.3 475.9,334.7 470.6,341.0 465.7,347.3 461.0,353.4 456.7,359.5 452.7,365.5 448.9,371.3 445.3,377.1 442.0,382.8 438.8,388.4 435.9,393.8 433.1,399.2 430.5,404.5 428.1,409.7 425.8,414.8 423.6,419.9 421.6,424.9 419.7,429.8 417.9,434.6 552.0,485.8 551.3,488.5 551.0,491.2 550.9,494.0 551.1,496.8 551.5,499.6 552.3,502.4 553.3,505.2 554.6,508.0 556.3,510.8 558.2,513.6 560.4,516.4 563.0,519.1 565.8,521.9 569.0,524.6 572.5,527.2 576.2,529.9 580.3,532.4 584.7,534.9 589.4,537.3 594.4,539.7 599.7,542.0 605.2,544.2 611.0,546.3 617.1,548.3 623.4,550.2 630.0,551.9 636.8,553.6 643.8,555.1 651.0,556.5 658.3,557.8 665.9,558.9 673.5,559.9 681.3,560.8 689.2,561.5 697.2,562.0 705.3,562.4 713.3,562.6 721.5,562.7 721.5,565.3 721.5,568.0 713.3,567.9 705.1,567.6 697.0,567.2 688.9,566.7 681.0,566.0 673.1,565.1 665.4,564.1 657.8,563.0 650.3,561.7 643.1,560.2 636.0,558.7 629.2,557.0 622.6,555.1 616.2,553.2 610.0,551.2 604.2,549.0 598.6,546.8 593.3,544.5 588.3,542.1 583.5,539.6 579.1,537.0 575.0,534.4 571.2,531.8 567.7,529.0 564.5,526.3 561.7,523.5 559.1,520.7 556.9,517.9 554.9,515.0 553.3,512.1 552.0,509.3 550.9,506.4 550.2,503.6 549.7,500.7 549.6,497.9 549.7,495.1 550.0,492.3 550.7,489.5 415.6,441.2 417.3,436.3 419.2,431.3 421.1,426.2 423.2,421.0 425.4,415.8 427.7,410.5 430.2,405.1 432.9,399.6 435.8,394.0 438.8,388.3 442.1,382.6 445.6,376.7 449.3,370.7 453.3,364.6 457.5,358.4 462.0,352.1 466.9,345.7 472.1,339.2 477.6,332.6 483.5,326.0 489.9,319.3 496.6,312.5 503.8,305.7 511.5,298.9 519.7,292.1 528.4,285.4 537.7,278.7 547.5,272.1 557.9,265.8 568.9,259.6 580.4,253.7 592.6,248.1 605.2,242.9 618.4,238.1 632.1,233.9 646.3,230.1 660.8,227.0 675.7,224.5 690.8,222.7 706.1,221.6 721.5,221.2 736.8,221.6 752.1,222.7 767.2,224.5 782.1,227.0 796.6,230.1 810.8,233.9 824.5,238.1 837.7,242.9 850.3,248.1 862.5,253.7 874.0,259.6 885.0,265.8 895.4,272.1 905.2,278.7 914.5,285.4 923.2,292.1 931.4,298.9 939.1,305.7 946.3,312.5 953.0,319.3 959.4,326.0 965.3,332.6 970.8,339.2 976.0,345.7 980.9,352.1 985.4,358.4 989.6,364.6 993.6,370.7 997.3,376.7 1000.8,382.6 1004.1,388.3 1007.1,394.0 1010.0,399.6 1012.7,405.1 1015.2,410.5 1017.5,415.8 1019.7,421.0 1021.8,426.2 1023.7,431.3 1025.6,436.3 1027.3,441.2 892.2,489.5 892.9,492.3 893.2,495.1 893.3,497.9 893.2,500.7 892.7,503.6 892.0,506.4 890.9,509.3 889.6,512.1 888.0,515.0 886.0,517.9 883.8,520.7 881.2,523.5 878.4,526.3 875.2,529.0 871.7,531.8 867.9,534.4 863.8,537.0 859.4,539.6 854.6,542.1 849.6,544.5 844.3,546.8 838.7,549.0 832.9,551.2 826.7,553.2 820.3,555.1 813.7,557.0 806.9,558.7 799.8,560.2 792.6,561.7 785.1,563.0 777.5,564.1 769.8,565.1 761.9,566.0 754.0,566.7 745.9,567.2 737.8,567.6 729.6,567.9 721.5,568.0 721.5,565.3"/><polygon points="721.5,643.9 730.0,643.8 738.5,643.5 747.0,643.0 755.4,642.3 763.8,641.4 772.0,640.4 780.1,639.1 788.0,637.7 795.7,636.1 803.3,634.4 810.7,632.4 817.8,630.4 824.7,628.2 831.3,625.8 837.7,623.3 843.8,620.7 849.6,618.0 855.1,615.1 860.3,612.2 865.2,609.2 869.8,606.1 874.0,602.9 877.9,599.6 881.5,596.3 884.8,593.0 887.7,589.6 890.3,586.2 892.6,582.7 894.6,579.3 896.2,575.8 897.6,572.4 898.6,568.9 899.3,565.4 1042.3,576.5 1042.9,570.4 1043.4,564.3 1043.7,558.3 1043.9,552.4 1044.0,546.4 1044.0,540.4 1043.9,534.5 1043.6,528.5 1043.3,522.5 1042.9,516.5 1042.3,510.4 1041.6,504.3 1040.8,498.1 1039.8,491.8 1038.7,485.3 1037.4,478.8 1035.9,472.1 1034.3,465.3 1032.5,458.3 1030.4,451.1 1028.1,443.8 1025.5,436.2 1022.6,428.3 1019.4,420.2 1015.8,411.9 1011.8,403.2 1007.3,394.3 1002.2,385.0 996.5,375.4 990.2,365.4 983.0,355.1 975.0,344.5 966.1,333.5 956.0,322.3 944.7,310.9 932.0,299.4 917.9,287.9 902.2,276.6 884.8,265.6 865.7,255.3 844.9,245.8 822.5,237.5 798.7,230.6 773.6,225.5 747.8,222.3 721.5,221.2 695.1,222.3 669.3,225.5 644.2,230.6 620.4,237.5 598.0,245.8 577.2,255.3 558.1,265.6 540.7,276.6 525.0,287.9 510.9,299.4 498.2,310.9 486.9,322.3 476.8,333.5 467.9,344.5 459.9,355.1 452.7,365.4 446.4,375.4 440.7,385.0 435.6,394.3 431.1,403.2 427.1,411.9 423.5,420.2 420.3,428.3 417.4,436.2 414.8,443.8 412.5,451.1 410.4,458.3 408.6,465.3 407.0,472.1 405.5,478.8 404.2,485.3 403.1,491.8 402.1,498.1 401.3,504.3 400.6,510.4 400.0,516.5 399.6,522.5 399.3,528.5 399.0,534.5 398.9,540.4 398.9,546.4 399.0,552.4 399.2,558.3 399.5,564.3 400.0,570.4 400.6,576.5 543.6,565.4 544.3,568.9 545.3,572.4 546.7,575.8 548.3,579.3 550.3,582.7 552.6,586.2 555.2,589.6 558.1,593.0 561.4,596.3 565.0,599.6 568.9,602.9 573.1,606.1 577.7,609.2 582.6,612.2 587.8,615.1 593.3,618.0 599.1,620.7 605.2,623.3 611.6,625.8 618.2,628.2 625.1,630.4 632.2,632.4 639.6,634.4 647.2,636.1 654.9,637.7 662.8,639.1 670.9,640.4 679.1,641.4 687.5,642.3 695.9,643.0 704.4,643.5 712.9,643.8 721.5,643.9 721.5,646.0 721.5,648.1 712.9,648.0 704.4,647.7 696.0,647.2 687.6,646.5 679.3,645.6 671.1,644.6 663.0,643.3 655.1,641.9 647.4,640.3 639.8,638.5 632.5,636.6 625.4,634.5 618.5,632.3 611.9,629.9 605.5,627.4 599.5,624.8 593.7,622.0 588.2,619.2 583.0,616.2 578.1,613.2 573.6,610.1 569.3,606.9 565.4,603.6 561.8,600.3 558.6,596.9 555.6,593.5 553.0,590.1 550.8,586.6 548.8,583.1 547.1,579.7 545.8,576.2 544.8,572.7 544.1,569.2 401.3,583.3 400.6,577.2 400.0,571.1 399.6,565.1 399.3,559.1 399.0,553.1 398.9,547.2 398.9,541.2 399.0,535.2 399.2,529.3 399.5,523.3 400.0,517.2 400.6,511.1 401.2,504.9 402.1,498.6 403.0,492.2 404.2,485.7 405.5,479.0 406.9,472.2 408.6,465.3 410.5,458.1 412.6,450.8 415.0,443.2 417.7,435.4 420.7,427.3 424.0,418.9 427.8,410.3 432.1,401.3 436.9,391.9 442.3,382.2 448.4,372.2 455.2,361.7 462.9,350.9 471.7,339.7 481.5,328.2 492.6,316.5 505.2,304.5 519.2,292.5 535.0,280.6 552.5,269.0 571.9,258.0 593.2,247.8 616.2,238.9 640.9,231.5 666.9,225.9 693.9,222.4 721.5,221.2 749.0,222.4 776.0,225.9 802.0,231.5 826.7,238.9 849.7,247.8 871.0,258.0 890.4,269.0 907.9,280.6 923.7,292.5 937.7,304.5 950.3,316.5 961.4,328.2 971.2,339.7 980.0,350.9 987.7,361.7 994.5,372.2 1000.6,382.2 1006.0,391.9 1010.8,401.3 1015.1,410.3 1018.9,418.9 1022.2,427.3 1025.2,435.4 1027.9,443.2 1030.3,450.8 1032.4,458.1 1034.3,465.3 1036.0,472.2 1037.4,479.0 1038.7,485.7 1039.9,492.2 1040.8,498.6 1041.7,504.9 1042.3,511.1 1042.9,517.2 1043.4,523.3 1043.7,529.3 1043.9,535.2 1044.0,541.2 1044.0,547.2 1043.9,553.1 1043.6,559.1 1043.3,565.1 1042.9,571.1 1042.3,577.2 1041.6,583.3 898.8,569.2 898.1,572.7 897.1,576.2 895.8,579.7 894.1,583.1 892.1,586.6 889.9,590.1 887.3,593.5 884.3,596.9 881.1,600.3 877.5,603.6 873.6,606.9 869.3,610.1 864.8,613.2 859.9,616.2 854.7,619.2 849.2,622.0 843.4,624.8 837.4,627.4 831.0,629.9 824.4,632.3 817.5,634.5 810.4,636.6 803.1,638.5 795.5,640.3 787.8,641.9 779.9,643.3 771.8,644.6 763.6,645.6 755.3,646.5 746.9,647.2 738.5,647.7 730.0,648.0 721.5,648.1 721.5,646.0"/><polygon points="721.5,699.7 728.9,699.7 736.3,699.4 743.7,698.9 751.0,698.2 758.3,697.4 765.4,696.4 772.5,695.2 779.4,693.8 786.2,692.3 792.8,690.6 799.2,688.7 805.5,686.7 811.6,684.6 817.4,682.3 823.0,679.8 828.4,677.3 833.6,674.6 838.5,671.9 843.1,669.0 847.5,666.0 851.6,663.0 855.5,659.9 859.0,656.7 862.3,653.4 865.3,650.1 868.0,646.7 870.4,643.4 993.6,716.9 997.3,710.9 1000.8,705.0 1004.1,699.3 1007.1,693.6 1010.0,688.0 1012.7,682.5 1015.2,677.1 1017.5,671.8 1019.7,666.6 1021.8,661.4 1023.7,656.3 1025.6,651.3 1027.3,646.4 1028.9,641.5 1030.4,636.6 1031.8,631.8 1033.1,627.0 1034.3,622.3 1035.5,617.6 1036.5,612.9 1037.5,608.2 1038.4,603.5 1039.3,598.8 1040.1,594.0 1040.8,589.3 1041.4,584.4 1042.0,579.6 1042.5,574.6 1043.0,569.6 1043.4,564.4 1043.6,559.1 1043.9,553.7 1044.0,548.0 1044.0,542.1 1043.9,535.9 1043.7,529.4 1043.3,522.5 1042.7,515.1 1041.9,507.0 1040.8,498.3 1039.2,488.6 1037.2,477.7 1034.3,465.3 1030.3,450.9 1024.7,434.0 1016.6,413.7 1004.3,388.8 985.2,358.1 954.3,320.6 903.8,277.7 825.2,238.4 721.5,221.2 617.7,238.4 539.1,277.7 488.6,320.6 457.7,358.1 438.6,388.8 426.3,413.7 418.2,434.0 412.6,450.9 408.6,465.3 405.7,477.7 403.7,488.6 402.1,498.3 401.0,507.0 400.2,515.1 399.6,522.5 399.2,529.4 399.0,535.9 398.9,542.1 398.9,548.0 399.0,553.7 399.3,559.1 399.5,564.4 399.9,569.6 400.4,574.6 400.9,579.6 401.5,584.4 402.1,589.3 402.8,594.0 403.6,598.8 404.5,603.5 405.4,608.2 406.4,612.9 407.4,617.6 408.6,622.3 409.8,627.0 411.1,631.8 412.5,636.6 414.0,641.5 415.6,646.4 417.3,651.3 419.2,656.3 421.1,661.4 423.2,666.6 425.4,671.8 427.7,677.1 430.2,682.5 432.9,688.0 435.8,693.6 438.8,699.3 442.1,705.0 445.6,710.9 449.3,716.9 572.5,643.4 574.9,646.7 577.6,650.1 580.6,653.4 583.9,656.7 587.4,659.9 591.3,663.0 595.4,666.0 599.8,669.0 604.4,671.9 609.3,674.6 614.5,677.3 619.9,679.8 625.5,682.3 631.3,684.6 637.4,686.7 643.7,688.7 650.1,690.6 656.7,692.3 663.5,693.8 670.4,695.2 677.5,696.4 684.6,697.4 691.9,698.2 699.2,698.9 706.6,699.4 714.0,699.7 721.5,699.7 721.5,700.9 721.5,702.1 714.1,702.0 706.8,701.7 699.5,701.2 692.3,700.6 685.2,699.7 678.1,698.7 671.2,697.5 664.3,696.2 657.6,694.7 651.1,693.0 644.8,691.1 638.6,689.2 632.6,687.0 626.8,684.8 621.3,682.4 615.9,679.8 610.9,677.2 606.0,674.4 601.4,671.6 597.1,668.7 593.0,665.6 589.2,662.5 585.7,659.4 582.5,656.1 579.5,652.9 576.8,649.5 456.7,728.1 452.7,722.1 448.9,716.3 445.3,710.5 442.0,704.8 438.8,699.2 435.9,693.8 433.1,688.4 430.5,683.1 428.1,677.9 425.8,672.8 423.6,667.7 421.6,662.7 419.7,657.8 417.9,653.0 416.3,648.2 414.7,643.5 413.2,638.8 411.8,634.2 410.5,629.6 409.3,625.1 408.1,620.5 407.1,616.0 406.1,611.5 405.1,607.0 404.3,602.5 403.5,597.9 402.7,593.4 402.0,588.8 401.4,584.1 400.9,579.4 400.4,574.6 399.9,569.8 399.6,564.7 399.3,559.6 399.1,554.2 398.9,548.6 398.9,542.8 399.0,536.6 399.2,530.0 399.6,522.9 400.2,515.2 401.0,506.8 402.3,497.3 404.0,486.5 406.5,473.9 410.2,459.1 415.7,440.9 424.4,418.1 438.6,388.7 463.5,350.1 509.6,300.6 593.9,247.5 721.5,221.2 849.0,247.5 933.3,300.6 979.4,350.1 1004.3,388.7 1018.5,418.1 1027.2,440.9 1032.7,459.1 1036.4,473.9 1038.9,486.5 1040.6,497.3 1041.9,506.8 1042.7,515.2 1043.3,522.9 1043.7,530.0 1043.9,536.6 1044.0,542.8 1044.0,548.6 1043.8,554.2 1043.6,559.6 1043.3,564.7 1043.0,569.8 1042.5,574.6 1042.0,579.4 1041.5,584.1 1040.9,588.8 1040.2,593.4 1039.4,597.9 1038.6,602.5 1037.8,607.0 1036.8,611.5 1035.8,616.0 1034.8,620.5 1033.6,625.1 1032.4,629.6 1031.1,634.2 1029.7,638.8 1028.2,643.5 1026.6,648.2 1025.0,653.0 1023.2,657.8 1021.3,662.7 1019.3,667.7 1017.1,672.8 1014.8,677.9 1012.4,683.1 1009.8,688.4 1007.0,693.8 1004.1,699.2 1000.9,704.8 997.6,710.5 994.0,716.3 990.2,722.1 986.2,728.1 866.1,649.5 863.4,652.9 860.4,656.1 857.2,659.4 853.7,662.5 849.9,665.6 845.8,668.7 841.5,671.6 836.9,674.4 832.0,677.2 827.0,679.8 821.6,682.4 816.1,684.8 810.3,687.0 804.3,689.2 798.1,691.1 791.8,693.0 785.3,694.7 778.6,696.2 771.7,697.5 764.8,698.7 757.7,699.7 750.6,700.6 743.4,701.2 736.1,701.7 728.8,702.0 721.5,702.1 721.5,700.9"/><polygon points="721.5,722.3 726.7,722.3 732.0,722.1 737.2,721.7 742.4,721.2 747.5,720.6 752.6,719.9 757.6,719.0 762.6,718.0 767.4,716.8 772.2,715.6 776.8,714.2 781.3,712.7 837.1,844.9 844.8,841.9 852.2,838.7 859.4,835.4 866.4,832.0 873.1,828.5 879.6,825.0 885.8,821.4 891.8,817.7 897.5,814.1 903.0,810.4 908.3,806.7 913.4,803.1 918.2,799.4 922.8,795.8 927.2,792.2 931.4,788.6 935.4,785.2 939.3,781.7 942.9,778.4 946.3,775.1 949.6,771.8 952.7,768.7 955.6,765.7 958.4,762.7 961.0,759.8 963.4,757.1 965.7,754.5 967.9,751.9 969.9,749.5 971.8,747.3 973.5,745.1 975.1,743.1 976.5,741.3 977.8,739.6 979.0,738.0 980.0,736.7 980.9,735.5 981.6,734.5 982.1,733.8 982.5,733.2 982.8,732.9 982.8,732.9 982.6,733.1 982.2,733.6 981.6,734.5 980.7,735.7 979.5,737.3 977.9,739.4 976.0,741.9 973.6,744.9 970.8,748.5 967.3,752.6 963.1,757.5 958.1,763.0 952.0,769.3 944.9,776.5 936.3,784.4 926.0,793.2 913.8,802.7 899.4,812.9 882.3,823.4 862.3,834.0 839.3,844.1 813.2,853.0 784.4,860.2 753.5,864.8 721.5,866.4 689.4,864.8 658.5,860.2 629.7,853.0 603.6,844.1 580.6,834.0 560.6,823.4 543.5,812.9 529.1,802.7 516.9,793.2 506.6,784.4 498.0,776.5 490.9,769.3 484.8,763.0 479.8,757.5 475.6,752.6 472.1,748.5 469.3,744.9 466.9,741.9 465.0,739.4 463.4,737.3 462.2,735.7 461.3,734.5 460.7,733.6 460.3,733.1 460.1,732.9 460.1,732.9 460.4,733.2 460.8,733.8 461.3,734.5 462.0,735.5 462.9,736.7 463.9,738.0 465.1,739.6 466.4,741.3 467.8,743.1 469.4,745.1 471.1,747.3 473.0,749.5 475.0,751.9 477.2,754.5 479.5,757.1 481.9,759.8 484.5,762.7 487.3,765.7 490.2,768.7 493.3,771.8 496.6,775.1 500.0,778.4 503.6,781.7 507.5,785.2 511.5,788.6 515.7,792.2 520.1,795.8 524.7,799.4 529.5,803.1 534.6,806.7 539.9,810.4 545.4,814.1 551.1,817.7 557.1,821.4 563.3,825.0 569.8,828.5 576.5,832.0 583.5,835.4 590.7,838.7 598.1,841.9 605.8,844.9 661.6,712.7 666.1,714.2 670.7,715.6 675.5,716.8 680.3,718.0 685.3,719.0 690.3,719.9 695.4,720.6 700.5,721.2 705.7,721.7 710.9,722.1 716.2,722.3 721.5,722.3 721.5,722.5 721.5,722.7 716.3,722.6 711.2,722.4 706.2,722.1 701.1,721.6 696.1,721.0 691.2,720.3 686.3,719.4 681.5,718.4 676.8,717.3 672.2,716.1 667.7,714.7 616.7,848.9 609.0,846.1 601.5,843.2 594.2,840.2 587.2,837.1 580.4,833.9 573.8,830.6 567.4,827.2 561.3,823.8 555.4,820.3 549.7,816.8 544.3,813.3 539.0,809.8 534.0,806.3 529.3,802.9 524.7,799.4 520.3,796.0 516.2,792.6 512.2,789.3 508.4,786.0 504.8,782.8 501.4,779.6 498.1,776.6 495.1,773.6 492.2,770.7 489.4,767.9 486.9,765.2 484.4,762.6 482.2,760.1 480.0,757.7 478.1,755.5 476.3,753.4 474.6,751.4 473.0,749.6 471.7,747.9 470.4,746.3 469.3,745.0 468.4,743.8 467.6,742.8 467.0,742.0 466.5,741.4 466.3,741.1 466.2,741.0 466.3,741.2 466.7,741.6 467.2,742.3 468.1,743.4 469.2,744.8 470.7,746.7 472.5,748.9 474.7,751.6 477.4,754.8 480.7,758.5 484.6,762.8 489.2,767.7 494.7,773.2 501.2,779.4 508.8,786.4 517.8,794.0 528.5,802.3 540.9,811.1 555.4,820.3 572.2,829.8 591.6,839.1 613.5,847.7 637.8,855.3 664.3,861.3 692.4,865.1 721.5,866.4 750.5,865.1 778.6,861.3 805.1,855.3 829.4,847.7 851.3,839.1 870.7,829.8 887.5,820.3 902.0,811.1 914.4,802.3 925.1,794.0 934.1,786.4 941.7,779.4 948.2,773.2 953.7,767.7 958.3,762.8 962.2,758.5 965.5,754.8 968.2,751.6 970.4,748.9 972.2,746.7 973.7,744.8 974.8,743.4 975.7,742.3 976.2,741.6 976.6,741.2 976.7,741.0 976.6,741.1 976.4,741.4 975.9,742.0 975.3,742.8 974.5,743.8 973.6,745.0 972.5,746.3 971.2,747.9 969.9,749.6 968.3,751.4 966.6,753.4 964.8,755.5 962.9,757.7 960.7,760.1 958.5,762.6 956.0,765.2 953.5,767.9 950.7,770.7 947.8,773.6 944.8,776.6 941.5,779.6 938.1,782.8 934.5,786.0 930.7,789.3 926.7,792.6 922.6,796.0 918.2,799.4 913.6,802.9 908.9,806.3 903.9,809.8 898.6,813.3 893.2,816.8 887.5,820.3 881.6,823.8 875.5,827.2 869.1,830.6 862.5,833.9 855.7,837.1 848.7,840.2 841.4,843.2 833.9,846.1 826.2,848.9 775.2,714.7 770.7,716.1 766.1,717.3 761.4,718.4 756.6,719.4 751.7,720.3 746.8,721.0 741.8,721.6 736.7,722.1 731.7,722.4 726.6,722.6 721.5,722.7 721.5,722.5"/></g>
<text transform="matrix(0.0019,-0.0458,0.3468,0.0884,774.3,379.5)" font-size="100" text-anchor="middle" fill="#000">1A</text>
<text transform="matrix(-0.1081,-0.0320,0.2423,0.0194,759.6,369.1)" font-size="100" text-anchor="middle" fill="#000">1B</text>
<text transform="matrix(-0.1206,0.0279,-0.2117,0.0116,688.0,367.8)" font-size="100" text-anchor="middle" fill="#000">1D</text>
<text transform="matrix(-0.0184,0.0452,-0.3423,0.0757,669.0,377.6)" font-size="100" text-anchor="middle" fill="#000">1E</text>
<text transform="matrix(0.1060,0.0366,-0.2775,0.1536,680.3,388.8)" font-size="100" text-anchor="middle" fill="#000">1F</text>
<text transform="matrix(0.1706,0.0032,-0.0241,0.1939,717.9,394.4)" font-size="100" text-anchor="middle" fill="#000">1G</text>
<text transform="matrix(0.1226,-0.0326,0.2470,0.1640,758.0,390.3)" font-size="100" text-anchor="middle" fill="#000">1H</text>
<text transform="matrix(-0.0261,-0.1282,0.2736,0.2059,840.2,414.1)" font-size="100" text-anchor="middle" fill="#000">2A</text>
<text transform="matrix(-0.0748,0.1242,-0.2651,0.1921,604.7,409.4)" font-size="100" text-anchor="middle" fill="#000">2E</text>
<text transform="matrix(0.2553,0.1130,-0.2411,0.2841,624.4,439.1)" font-size="100" text-anchor="middle" fill="#000">2F</text>
<text transform="matrix(0.4577,0.0104,-0.0222,0.3390,712.9,455.1)" font-size="100" text-anchor="middle" fill="#000">2G</text>
<text transform="matrix(0.3051,-0.1021,0.2179,0.2978,808.1,443.2)" font-size="100" text-anchor="middle" fill="#000">2H</text>
<text transform="matrix(-0.0663,-0.2144,0.1531,0.2771,883.8,468.2)" font-size="100" text-anchor="middle" fill="#000">3A</text>
<text transform="matrix(0.3495,0.2024,-0.1446,0.3541,584.4,510.2)" font-size="100" text-anchor="middle" fill="#000">3F</text>
<text transform="matrix(0.6826,0.0195,-0.0139,0.4115,709.1,538.7)" font-size="100" text-anchor="middle" fill="#000">3G</text>
<text transform="matrix(0.4290,-0.1850,0.1321,0.3681,844.5,517.3)" font-size="100" text-anchor="middle" fill="#000">3H</text>
<text transform="matrix(0.3844,0.2750,-0.0170,0.3395,569.7,585.5)" font-size="100" text-anchor="middle" fill="#000">4F</text>
<text transform="matrix(0.7788,0.0270,-0.0017,0.3723,707.7,623.6)" font-size="100" text-anchor="middle" fill="#000">4G</text>
<text transform="matrix(0.4772,-0.2526,0.0156,0.3476,858.0,595.0)" font-size="100" text-anchor="middle" fill="#000">4H</text>
<text transform="matrix(0.3657,0.2947,0.1011,0.2542,581.7,648.1)" font-size="100" text-anchor="middle" fill="#000">5F</text>
<text transform="matrix(0.7263,0.0286,0.0098,0.2433,708.9,687.8)" font-size="100" text-anchor="middle" fill="#000">5G</text>
<text transform="matrix(0.4512,-0.2700,-0.0926,0.2519,847.0,658.0)" font-size="100" text-anchor="middle" fill="#000">5H</text>
<text transform="matrix(0.5580,0.0234,0.0171,0.0851,712.0,719.5)" font-size="100" text-anchor="middle" fill="#000">6G</text>
<filter id="shb" x="-5%" y="-5%" width="110%" height="110%"><feGaussianBlur stdDeviation="1.2"/></filter><g style="mix-blend-mode:multiply" filter="url(#shb)"><circle cx="721.5" cy="543.8" r="181.2" fill="rgb(76,76,76)"/><polygon points="734.5,722.6 708.5,722.6 707.5,721.7 698.5,721.6 697.5,720.7 686.5,719.6 685.5,718.7 670.5,715.6 660.5,711.7 658.5,711.6 655.5,709.7 653.5,709.6 636.5,701.6 634.5,699.7 621.5,692.6 604.5,679.6 585.4,660.5 577.4,650.5 567.4,635.5 559.4,620.5 552.3,603.5 547.2,586.5 546.1,578.5 545.2,577.5 545.1,572.5 544.2,571.5 543.1,553.5 542.2,552.5 542.1,534.5 543.0,533.5 544.1,515.5 545.0,514.5 546.1,505.5 547.0,504.5 547.0,501.5 548.0,500.5 548.0,497.5 549.0,496.5 549.0,493.5 551.0,487.5 555.0,478.5 555.0,476.5 557.0,473.5 557.0,471.5 564.0,457.5 576.0,438.5 583.0,429.5 595.0,416.5 607.5,405.0 622.5,393.9 635.5,386.9 637.5,384.9 652.5,377.9 654.5,377.9 657.5,375.9 671.5,371.9 672.5,370.9 675.5,370.9 676.5,369.9 679.5,369.9 684.5,367.9 688.5,367.9 689.5,366.9 703.5,365.9 704.5,364.9 738.5,364.9 739.5,365.9 753.5,366.9 754.5,367.9 758.5,367.9 763.5,369.9 766.5,369.9 767.5,370.9 770.5,370.9 771.5,371.9 785.5,375.9 803.5,383.9 805.5,385.9 812.5,388.9 817.5,392.9 820.5,393.9 836.5,405.9 849.1,417.5 859.1,428.5 869.1,441.5 874.1,450.5 876.1,452.5 877.1,455.5 879.1,457.5 888.1,476.5 889.1,481.5 893.1,490.5 893.1,493.5 894.1,494.5 896.1,504.5 897.1,505.5 898.1,515.5 899.1,516.5 899.1,523.5 900.1,524.5 901.1,544.5 901.1,550.5 900.1,551.5 900.0,563.5 899.1,564.5 898.0,576.5 897.1,577.5 897.0,581.5 896.1,582.5 894.0,593.5 893.1,594.5 889.0,608.5 887.0,611.5 887.0,613.5 877.0,633.5 868.0,647.5 856.9,661.5 839.5,678.9 828.5,687.8 813.5,697.8 802.5,703.8 789.5,709.8 772.5,715.7 756.5,719.6 745.5,720.8 744.5,721.6 735.5,721.8 734.5,722.6" fill="rgb(79,79,79)"/><polygon points="734.5,722.6 708.5,722.6 707.5,721.7 698.5,721.6 697.5,720.7 686.5,719.6 685.5,718.7 670.5,715.6 660.5,711.6 658.5,711.6 655.5,709.6 653.5,709.6 636.5,701.6 634.5,699.6 621.5,692.6 604.5,679.6 585.4,660.5 577.4,650.5 567.4,635.5 559.4,620.5 552.4,603.5 547.3,586.5 546.1,578.5 545.3,577.5 545.1,572.5 544.2,571.5 543.1,553.5 542.2,552.5 542.2,534.5 543.1,533.5 544.1,515.5 545.1,514.5 546.1,505.5 547.0,504.5 547.1,501.5 548.0,500.5 548.1,497.5 549.0,496.5 549.1,493.5 551.1,487.5 555.0,478.5 555.1,476.5 557.0,473.5 557.1,471.5 564.0,457.5 576.0,438.5 583.0,429.5 595.0,416.5 607.5,405.0 622.5,394.0 635.5,386.9 637.5,385.0 652.5,377.9 654.5,377.9 657.5,375.9 671.5,371.9 672.5,370.9 675.5,370.9 676.5,369.9 679.5,369.9 684.5,367.9 688.5,367.9 689.5,366.9 703.5,365.9 704.5,364.9 738.5,364.9 739.5,365.9 753.5,366.9 754.5,367.9 758.5,367.9 763.5,369.9 766.5,369.9 767.5,370.9 770.5,370.9 771.5,371.9 785.5,375.9 803.5,383.9 805.5,385.9 812.5,388.9 817.5,392.9 820.5,393.9 836.5,405.9 849.1,417.5 859.1,428.5 869.1,441.5 874.1,450.5 876.1,452.5 877.1,455.5 879.1,457.5 888.1,476.5 889.1,481.5 893.1,490.5 893.1,493.5 894.1,494.5 896.1,504.5 897.0,505.5 898.1,515.5 899.0,516.5 899.1,523.5 900.0,524.5 901.0,544.5 901.0,550.5 900.1,551.5 900.0,563.5 899.0,564.5 898.0,576.5 897.0,577.5 897.0,581.5 896.0,582.5 894.0,593.5 893.0,594.5 889.0,608.5 887.0,611.5 887.0,613.5 876.9,633.5 867.9,647.5 856.9,661.5 839.5,678.9 828.5,687.8 813.5,697.8 802.5,703.8 789.5,709.7 772.5,715.7 756.5,719.6 745.5,720.8 744.5,721.6 735.5,721.7 734.5,722.6" fill="rgb(84,84,84)"/><polygon points="734.5,722.5 708.5,722.5 707.5,721.6 698.5,721.5 697.5,720.6 686.5,719.5 685.5,718.6 670.5,715.5 660.5,711.6 658.5,711.5 655.5,709.6 653.5,709.5 636.5,701.5 634.5,699.6 621.5,692.5 604.5,679.5 585.5,660.5 577.5,650.5 567.5,635.5 559.5,620.5 552.4,603.5 547.3,586.5 546.2,578.5 545.3,577.5 545.2,572.5 544.3,571.5 543.1,553.5 542.2,552.5 542.2,534.5 543.1,533.5 544.2,515.5 545.1,514.5 546.1,505.5 547.1,504.5 547.1,501.5 548.1,500.5 548.1,497.5 549.1,496.5 549.1,493.5 551.1,487.5 555.0,478.5 555.1,476.5 557.0,473.5 557.1,471.5 564.1,457.5 576.0,438.5 583.0,429.5 595.0,416.5 607.5,405.0 622.5,394.0 635.5,387.0 637.5,385.0 652.5,378.0 654.5,377.9 657.5,376.0 671.5,371.9 672.5,371.0 675.5,370.9 676.5,370.0 679.5,369.9 684.5,368.0 688.5,367.9 689.5,367.0 703.5,365.9 704.5,364.9 738.5,364.9 739.5,365.9 753.5,366.9 754.5,367.9 758.5,367.9 763.5,369.9 766.5,369.9 767.5,370.9 770.5,370.9 771.5,371.9 785.5,375.9 803.5,383.9 805.5,385.9 812.5,388.9 817.5,392.9 820.5,393.9 836.5,405.9 849.1,417.5 859.1,428.5 869.1,441.5 874.1,450.5 876.1,452.5 877.1,455.5 879.0,457.5 888.0,476.5 889.1,481.5 893.0,490.5 893.1,493.5 894.0,494.5 896.0,504.5 897.0,505.5 898.0,515.5 899.0,516.5 899.0,523.5 900.0,524.5 901.0,544.5 901.0,550.5 900.0,551.5 900.0,563.5 899.0,564.5 898.0,576.5 897.0,577.5 897.0,581.5 896.0,582.5 894.0,593.5 893.0,594.5 888.9,608.5 887.0,611.5 886.9,613.5 876.9,633.5 867.9,647.5 856.9,661.5 839.5,678.8 828.5,687.8 813.5,697.7 802.5,703.7 789.5,709.7 772.5,715.6 756.5,719.5 745.5,720.7 744.5,721.5 735.5,721.7 734.5,722.5" fill="rgb(89,89,89)"/><polygon points="730.5,722.5 708.5,722.3 707.5,721.6 698.5,721.3 677.5,717.3 661.5,712.3 646.5,706.2 629.5,697.2 614.5,687.1 604.5,679.2 585.7,660.5 577.7,650.5 567.5,635.3 559.5,620.4 552.5,603.5 547.4,586.5 546.2,578.5 545.3,577.5 545.2,572.5 544.3,571.5 543.2,553.5 542.3,552.5 542.3,534.5 543.1,533.5 544.2,515.5 545.1,514.5 546.2,505.5 547.1,504.5 547.2,501.5 548.1,500.5 548.1,497.5 549.1,496.5 549.2,493.5 551.1,487.5 555.1,478.5 555.1,476.5 557.1,473.5 557.1,471.5 564.1,457.5 576.1,438.5 583.1,429.5 595.0,416.5 607.5,405.0 622.5,394.0 635.5,387.0 637.5,385.0 652.5,378.0 654.5,378.0 657.5,376.0 671.5,372.0 672.5,371.0 675.5,371.0 676.5,370.0 679.5,370.0 684.5,368.0 688.5,368.0 689.5,367.0 703.5,366.0 704.5,365.0 738.5,365.0 739.5,365.9 753.5,367.0 754.5,367.9 758.5,368.0 763.5,369.9 766.5,370.0 767.5,370.9 770.5,371.0 771.5,371.9 785.5,376.0 803.5,384.0 805.5,385.9 812.5,389.0 817.5,392.9 820.5,394.0 836.5,406.0 851.0,419.5 851.0,420.5 863.0,433.5 873.0,447.5 885.0,469.5 885.0,471.5 888.0,476.5 889.0,481.5 892.0,487.5 893.0,493.5 895.0,497.5 895.0,500.5 896.0,501.5 896.0,504.5 897.0,505.5 898.0,515.5 899.0,516.5 899.0,523.5 900.0,524.5 900.0,535.5 901.0,536.5 901.0,550.5 900.0,551.5 900.0,563.5 899.0,564.5 899.0,570.5 898.0,571.5 898.0,576.5 897.0,577.5 896.9,581.5 896.0,582.5 893.9,593.5 893.0,594.5 888.9,608.5 873.9,638.5 856.8,661.5 839.5,678.8 828.5,687.7 813.5,697.7 798.5,705.7 784.5,711.6 765.3,717.5 744.5,721.4 730.5,722.5" fill="rgb(94,94,94)"/><polygon points="741.5,721.5 724.5,722.5 708.5,722.0 686.5,718.8 670.5,714.7 651.5,707.7 635.5,699.9 620.5,690.7 608.5,681.8 586.2,660.5 577.5,649.8 565.5,631.5 556.5,613.5 551.5,600.5 546.4,582.5 545.3,572.5 544.4,571.5 544.2,565.5 543.4,564.5 543.2,553.5 542.3,552.5 542.3,534.5 543.2,533.5 544.3,515.5 545.2,514.5 545.2,510.5 546.2,509.5 546.2,505.5 547.1,504.5 549.2,493.5 553.2,481.5 557.1,473.5 557.2,471.5 564.1,457.5 579.1,434.5 590.1,422.5 590.1,421.5 599.5,412.1 619.5,396.0 630.5,389.0 645.5,381.0 647.5,381.0 657.5,376.0 671.5,372.0 672.5,371.0 675.5,371.0 676.5,370.0 679.5,370.0 684.5,368.0 688.5,368.0 689.5,367.0 694.5,367.0 695.5,366.0 703.5,366.0 704.5,365.0 738.5,365.0 739.5,366.0 746.5,366.0 747.5,367.0 758.5,368.0 763.5,370.0 766.5,370.0 767.5,371.0 770.5,371.0 771.5,372.0 785.5,376.0 788.5,378.0 790.5,378.0 797.5,382.0 799.5,382.0 803.5,384.0 805.5,386.0 812.5,389.0 817.5,393.0 823.5,396.0 836.5,406.0 851.0,419.5 851.0,420.5 863.0,433.5 873.0,447.5 874.0,450.5 879.0,457.5 888.0,476.5 889.0,481.5 893.0,490.5 894.0,496.5 895.0,497.5 895.0,500.5 897.0,505.5 897.0,509.5 898.0,510.5 898.0,515.5 899.0,516.5 900.0,535.5 900.9,536.5 900.9,550.5 900.0,551.5 899.9,563.5 899.0,564.5 898.9,570.5 898.0,571.5 897.9,576.5 897.0,577.5 896.9,581.5 895.9,582.5 893.9,593.5 892.9,594.5 888.9,608.5 886.9,611.5 886.9,613.5 876.8,633.5 861.8,655.5 839.5,678.7 828.5,687.7 806.5,701.6 789.5,709.6 772.5,715.5 755.7,719.5 741.5,721.5" fill="rgb(99,99,99)"/><polygon points="739.5,721.5 723.5,722.2 707.4,721.5 687.5,718.6 671.5,714.6 654.5,708.6 637.5,700.6 622.3,691.5 607.5,680.5 594.5,668.8 582.4,655.5 572.5,642.3 564.5,629.4 557.5,615.5 551.5,600.2 546.5,582.5 545.3,572.5 544.4,571.5 544.3,565.5 543.4,564.5 543.3,553.5 542.4,552.5 542.3,534.5 543.2,533.5 544.3,515.5 545.2,514.5 545.2,510.5 546.2,509.5 546.2,505.5 547.2,504.5 549.2,493.5 553.2,481.5 557.1,473.5 557.2,471.5 564.2,457.5 576.1,438.5 583.1,429.5 595.1,416.5 607.5,405.1 622.5,394.1 635.5,387.0 637.5,385.1 652.5,378.0 654.5,378.0 657.5,376.0 671.5,372.0 672.5,371.0 675.5,371.0 676.5,370.0 679.5,370.0 684.5,368.0 688.5,368.0 689.5,367.0 703.5,366.0 704.5,365.0 738.5,365.0 739.5,366.0 753.5,367.0 754.5,368.0 758.5,368.0 763.5,370.0 766.5,370.0 767.5,371.0 770.5,371.0 771.5,372.0 785.5,376.0 803.5,384.0 805.5,386.0 812.5,389.0 817.5,393.0 820.5,394.0 836.5,406.0 849.0,417.5 859.0,428.5 869.0,441.5 876.0,452.5 877.0,455.5 879.0,457.5 888.0,476.5 889.0,481.5 892.9,490.5 893.0,493.5 894.0,494.5 896.0,504.5 896.9,505.5 898.0,515.5 898.9,516.5 899.0,523.5 899.9,524.5 900.9,544.5 900.9,550.5 899.9,551.5 899.9,563.5 898.9,564.5 897.9,576.5 896.9,577.5 896.9,581.5 895.9,582.5 893.9,593.5 892.9,594.5 888.8,608.5 886.9,611.5 886.8,613.5 876.8,633.5 861.8,655.5 839.5,678.7 828.5,687.6 806.5,701.6 789.5,709.5 775.5,714.5 759.9,718.5 739.5,721.5" fill="rgb(104,104,104)"/><polygon points="735.5,721.5 718.5,721.8 701.5,720.5 684.3,717.5 669.4,713.5 653.1,707.5 636.4,699.5 621.6,690.5 608.1,680.5 595.7,669.5 584.5,657.5 573.5,643.3 564.5,628.9 555.5,610.5 550.5,596.8 546.5,582.2 545.3,572.5 544.4,571.5 544.3,565.5 543.4,564.5 543.3,553.5 542.4,552.5 542.4,534.5 543.3,533.5 544.3,515.5 545.2,514.5 545.3,510.5 546.2,509.5 546.3,505.5 547.2,504.5 549.3,493.5 553.2,481.5 557.2,473.5 557.2,471.5 564.2,457.5 576.2,438.5 583.2,429.5 595.1,416.5 607.5,405.1 622.5,394.1 635.5,387.1 637.5,385.1 652.5,378.1 654.5,378.1 657.5,376.1 671.5,372.0 672.5,371.1 675.5,371.0 676.5,370.1 679.5,370.0 684.5,368.1 688.5,368.0 689.5,367.1 703.5,366.0 704.5,365.1 738.5,365.0 739.5,366.0 753.5,367.0 754.5,368.0 758.5,368.0 763.5,370.0 766.5,370.0 767.5,371.0 770.5,371.0 771.5,372.0 785.5,376.0 803.5,384.0 805.5,386.0 812.5,389.0 817.5,393.0 820.5,394.0 836.5,406.0 849.0,417.5 859.0,428.5 868.9,441.5 875.9,452.5 877.0,455.5 878.9,457.5 887.9,476.5 889.0,481.5 892.9,490.5 892.9,493.5 893.9,494.5 895.9,504.5 896.9,505.5 897.9,515.5 898.9,516.5 898.9,523.5 899.9,524.5 900.9,544.5 899.9,563.5 898.9,564.5 897.9,576.5 896.9,577.5 896.9,581.5 895.9,582.5 893.8,593.5 888.8,608.5 886.9,611.5 886.8,613.5 876.8,633.5 861.7,655.5 839.5,678.7 828.5,687.6 806.5,701.5 789.2,709.5 771.5,715.5 753.5,719.5 735.5,721.5" fill="rgb(109,109,109)"/><polygon points="727.5,721.5 705.5,720.5 691.5,718.5 674.4,714.5 659.4,709.5 643.3,702.5 628.7,694.5 612.6,683.5 599.5,672.5 587.5,660.3 575.5,645.5 566.5,631.7 558.5,616.6 552.5,602.1 547.5,585.9 545.4,572.5 544.5,571.5 543.3,553.5 542.5,552.5 542.4,534.5 543.3,533.5 544.4,515.5 545.3,514.5 546.3,505.5 547.2,504.5 547.3,501.5 548.2,500.5 548.3,497.5 549.2,496.5 551.3,487.5 555.2,478.5 555.3,476.5 557.2,473.5 557.3,471.5 564.2,457.5 576.2,438.5 583.2,429.5 595.2,416.5 607.5,405.2 622.5,394.1 635.5,387.1 637.5,385.1 652.5,378.1 654.5,378.1 657.5,376.1 671.5,372.1 672.5,371.1 675.5,371.1 676.5,370.1 679.5,370.1 684.5,368.1 688.5,368.1 689.5,367.1 703.5,366.1 704.5,365.1 738.5,365.1 739.5,366.0 753.5,367.1 754.5,368.0 758.5,368.1 763.5,370.0 766.5,370.1 767.5,371.0 770.5,371.1 771.5,372.0 785.5,376.1 803.5,384.1 805.5,386.0 812.5,389.1 817.5,393.0 820.5,394.1 836.5,406.1 850.9,419.5 851.0,420.5 862.9,433.5 872.9,447.5 884.9,469.5 884.9,471.5 887.9,476.5 888.9,481.5 891.9,487.5 892.9,493.5 894.9,497.5 894.9,500.5 895.9,501.5 895.9,504.5 896.9,505.5 897.9,515.5 898.9,516.5 898.9,523.5 899.9,524.5 899.9,535.5 900.9,536.5 900.8,550.5 899.9,551.5 899.8,563.5 898.9,564.5 898.8,570.5 897.9,571.5 897.8,576.5 896.9,577.5 896.8,581.5 895.9,582.5 893.8,593.5 888.8,608.5 873.7,638.5 856.7,661.5 839.5,678.6 828.5,687.5 813.5,697.5 800.4,704.5 783.5,711.5 766.7,716.5 743.9,720.5 727.5,721.5" fill="rgb(114,114,114)"/><polygon points="738.5,720.5 719.5,720.9 701.4,719.5 684.6,716.5 669.8,712.5 653.5,706.5 636.9,698.5 623.5,690.5 608.5,679.5 596.1,668.5 584.5,656.1 574.5,643.3 564.5,627.5 556.5,611.4 550.5,595.5 546.5,580.9 543.5,563.8 543.4,553.5 542.5,552.5 542.5,534.5 543.3,533.5 544.4,515.5 545.3,514.5 545.4,510.5 546.3,509.5 546.3,505.5 547.3,504.5 549.3,493.5 553.3,481.5 557.2,473.5 557.3,471.5 564.3,457.5 576.2,438.5 583.2,429.5 595.2,416.5 607.5,405.2 622.5,394.2 635.5,387.1 637.5,385.2 652.5,378.1 654.5,378.1 657.5,376.1 671.5,372.1 672.5,371.1 675.5,371.1 676.5,370.1 679.5,370.1 684.5,368.1 688.5,368.1 689.5,367.1 703.5,366.1 704.5,365.1 738.5,365.1 739.5,366.1 753.5,367.1 754.5,368.1 758.5,368.1 763.5,370.1 766.5,370.1 767.5,371.1 770.5,371.1 771.5,372.1 785.5,376.1 803.5,384.1 805.5,386.1 812.5,389.1 817.5,393.1 820.5,394.1 836.5,406.1 848.9,417.5 858.9,428.5 868.9,441.5 875.9,452.5 876.9,455.5 878.9,457.5 887.9,476.5 888.9,481.5 892.9,490.5 892.9,493.5 893.9,494.5 895.9,504.5 896.9,505.5 897.9,515.5 898.9,516.5 898.9,523.5 899.8,524.5 900.8,544.5 899.8,563.5 898.8,564.5 897.8,576.5 896.8,577.5 896.8,581.5 895.8,582.5 893.8,593.5 888.7,608.5 886.8,611.5 886.7,613.5 876.7,633.5 861.6,655.5 847.5,670.7 833.5,683.6 816.5,695.5 805.9,701.5 790.7,708.5 773.1,714.5 755.3,718.5 738.5,720.5" fill="rgb(119,119,119)"/><polygon points="743.5,719.6 725.5,720.5 706.8,719.5 687.7,716.5 672.1,712.5 655.3,706.5 640.2,699.5 624.8,690.5 610.8,680.5 597.5,668.9 585.5,656.3 574.5,642.3 564.5,626.5 556.5,610.3 550.5,594.4 546.5,579.8 543.5,562.4 542.5,542.5 543.4,523.5 544.3,522.5 544.5,515.5 545.3,514.5 545.4,510.5 546.3,509.5 546.4,505.5 547.3,504.5 549.4,493.5 553.3,481.5 557.3,473.5 557.3,471.5 564.3,457.5 579.3,434.5 590.2,422.5 590.2,421.5 599.5,412.2 619.5,396.2 630.5,389.2 645.5,381.2 647.5,381.1 657.5,376.2 671.5,372.1 672.5,371.1 675.5,371.1 676.5,370.1 679.5,370.1 684.5,368.1 688.5,368.1 689.5,367.1 694.5,367.1 695.5,366.1 703.5,366.1 704.5,365.1 738.5,365.1 739.5,366.1 746.5,366.1 747.5,367.1 758.5,368.1 763.5,370.1 766.5,370.1 767.5,371.1 770.5,371.1 771.5,372.1 785.5,376.1 788.5,378.1 790.5,378.1 797.5,382.1 799.5,382.1 803.5,384.1 805.5,386.1 812.5,389.1 817.5,393.1 823.5,396.1 836.5,406.1 850.9,419.5 850.9,420.5 862.9,433.5 872.9,447.5 873.9,450.5 878.9,457.5 887.8,476.5 888.9,481.5 892.8,490.5 893.9,496.5 894.8,497.5 894.9,500.5 896.8,505.5 896.9,509.5 897.8,510.5 897.9,515.5 898.8,516.5 899.8,535.5 900.8,536.5 900.8,550.5 899.8,551.5 899.8,563.5 898.8,564.5 898.8,570.5 897.8,571.5 897.8,576.5 896.8,577.5 896.8,581.5 895.8,582.5 893.7,593.5 888.7,608.5 886.8,611.5 886.7,613.5 876.7,633.5 861.6,655.5 839.5,678.5 825.5,689.5 807.5,700.5 792.4,707.5 775.1,713.5 758.2,717.5 743.5,719.6" fill="rgb(124,124,124)"/><polygon points="735.5,719.5 718.5,719.6 703.5,718.4 686.8,715.5 668.5,710.5 652.7,704.5 636.4,696.5 621.7,687.5 608.3,677.5 595.5,665.9 583.5,652.9 573.5,639.7 564.5,625.2 556.5,609.0 550.5,592.9 546.5,578.1 543.5,560.2 542.5,541.5 543.5,523.5 544.4,522.5 544.5,515.5 545.4,514.5 545.4,510.5 546.4,509.5 546.4,505.5 547.3,504.5 549.4,493.5 553.4,481.5 557.3,473.5 557.4,471.5 564.3,457.5 576.3,438.5 583.3,429.5 595.2,416.5 607.5,405.2 622.5,394.2 635.5,387.2 637.5,385.2 652.5,378.2 654.5,378.2 657.5,376.2 671.5,372.1 672.5,371.2 675.5,371.1 676.5,370.2 679.5,370.1 684.5,368.2 688.5,368.1 689.5,367.2 703.5,366.1 704.5,365.2 738.5,365.1 739.5,366.1 753.5,367.1 754.5,368.1 758.5,368.1 763.5,370.1 766.5,370.1 767.5,371.1 770.5,371.1 771.5,372.1 785.5,376.1 803.5,384.1 805.5,386.1 812.5,389.1 817.5,393.1 820.5,394.1 836.5,406.1 848.9,417.5 858.9,428.5 868.8,441.5 875.8,452.5 876.9,455.5 878.8,457.5 887.8,476.5 888.9,481.5 892.8,490.5 892.8,493.5 893.8,494.5 895.8,504.5 896.8,505.5 897.8,515.5 898.8,516.5 898.8,523.5 899.8,524.5 900.8,544.5 899.7,563.5 898.8,564.5 897.7,576.5 896.8,577.5 896.7,581.5 895.8,582.5 893.7,593.5 888.7,608.5 886.7,611.5 886.7,613.5 876.6,633.5 867.6,647.5 856.6,661.5 839.5,678.5 829.4,686.5 817.5,694.5 802.7,702.5 786.0,709.5 769.5,714.5 754.8,717.5 735.5,719.5" fill="rgb(129,129,129)"/><polygon points="739.5,718.5 721.5,718.9 703.8,717.5 686.6,714.5 671.6,710.5 655.2,704.5 638.4,696.5 623.4,687.5 608.6,676.5 595.5,664.7 583.5,651.6 572.5,636.8 563.5,621.9 556.5,607.4 550.5,591.1 546.5,576.0 543.5,556.9 542.8,540.5 543.5,523.9 544.4,522.5 545.5,510.5 546.4,509.5 546.5,505.5 547.4,504.5 549.4,493.5 553.4,481.5 557.3,473.5 557.4,471.5 564.4,457.5 576.3,438.5 583.3,429.5 595.3,416.5 607.5,405.3 622.5,394.2 635.5,387.2 637.5,385.2 652.5,378.2 654.5,378.2 657.5,376.2 671.5,372.2 672.5,371.2 675.5,371.2 676.5,370.2 679.5,370.2 684.5,368.2 688.5,368.2 689.5,367.2 703.5,366.2 704.5,365.2 738.5,365.2 739.5,366.1 753.5,367.2 754.5,368.1 758.5,368.2 763.5,370.1 766.5,370.2 767.5,371.1 770.5,371.2 771.5,372.1 785.5,376.2 803.5,384.2 805.5,386.1 812.5,389.2 817.5,393.1 820.5,394.2 836.5,406.2 848.8,417.5 858.8,428.5 868.8,441.5 875.8,452.5 876.8,455.5 878.8,457.5 887.8,476.5 888.8,481.5 892.8,490.5 892.8,493.5 893.8,494.5 895.8,504.5 896.8,505.5 897.8,515.5 898.8,516.5 898.8,523.5 899.8,524.5 900.7,544.5 899.7,563.5 898.8,564.5 897.7,576.5 896.8,577.5 896.7,581.5 895.7,582.5 893.7,593.5 888.7,608.5 886.7,611.5 886.6,613.5 876.6,633.5 861.5,655.5 849.5,668.6 835.5,681.5 821.6,691.5 807.8,699.5 792.4,706.5 774.6,712.5 756.5,716.5 739.5,718.5" fill="rgb(134,134,134)"/><polygon points="740.5,717.5 722.5,717.9 704.5,716.5 687.1,713.5 672.1,709.5 655.7,703.5 640.8,696.5 625.4,687.5 611.6,677.5 598.5,666.1 586.5,653.6 575.5,639.5 566.5,625.5 558.5,610.0 552.5,594.9 547.5,577.7 544.5,561.3 543.2,544.5 543.5,526.6 545.5,510.7 546.4,509.5 546.5,505.5 547.4,504.5 549.5,493.5 553.4,481.5 557.4,473.5 557.4,471.5 564.4,457.5 579.4,434.5 590.3,422.5 590.3,421.5 599.5,412.3 619.5,396.3 630.5,389.3 645.5,381.3 647.5,381.2 657.5,376.2 671.5,372.2 672.5,371.2 675.5,371.2 676.5,370.2 679.5,370.2 684.5,368.2 688.5,368.2 689.5,367.2 694.5,367.2 695.5,366.2 703.5,366.2 704.5,365.2 738.5,365.2 739.5,366.2 746.5,366.2 747.5,367.2 758.5,368.2 763.5,370.2 766.5,370.2 767.5,371.2 770.5,371.2 771.5,372.2 785.5,376.2 788.5,378.2 790.5,378.2 797.5,382.2 799.5,382.2 803.5,384.2 805.5,386.2 812.5,389.2 817.5,393.2 823.5,396.2 836.5,406.2 850.8,419.5 850.8,420.5 862.8,433.5 872.8,447.5 873.8,450.5 878.8,457.5 887.8,476.5 888.8,481.5 892.8,490.5 893.8,496.5 894.8,497.5 894.8,500.5 896.7,505.5 896.8,509.5 897.7,510.5 897.8,515.5 898.7,516.5 899.8,535.5 900.7,536.5 900.7,550.5 899.8,551.5 899.7,563.5 898.7,564.5 898.7,570.5 897.7,571.5 897.7,576.5 896.7,577.5 896.7,581.5 895.7,582.5 893.7,593.5 888.6,608.5 886.7,611.5 886.6,613.5 876.6,633.5 861.5,655.5 850.5,667.5 837.5,679.5 822.4,690.5 808.5,698.5 793.1,705.5 775.3,711.5 757.3,715.5 740.5,717.5" fill="rgb(139,139,139)"/><polygon points="738.5,716.5 721.5,716.7 704.5,715.3 688.3,712.5 670.1,707.5 654.3,701.5 637.9,693.5 623.3,684.5 608.6,673.5 595.5,661.5 584.5,649.4 573.5,634.7 564.5,619.8 557.5,605.4 551.5,589.2 547.5,574.4 544.5,556.2 543.5,537.5 544.5,519.6 546.5,506.5 550.5,490.5 553.5,481.5 555.4,478.5 555.5,476.5 557.4,473.5 557.5,471.5 564.4,457.5 576.4,438.5 583.4,429.5 595.3,416.5 607.5,405.3 622.5,394.3 635.5,387.3 637.5,385.3 652.5,378.3 654.5,378.2 657.5,376.3 671.5,372.2 672.5,371.3 675.5,371.2 676.5,370.2 679.5,370.2 684.5,368.2 688.5,368.2 689.5,367.2 703.5,366.2 704.5,365.2 738.5,365.2 739.5,366.2 753.5,367.2 754.5,368.2 758.5,368.2 763.5,370.2 766.5,370.2 767.5,371.2 770.5,371.2 771.5,372.2 785.5,376.2 803.5,384.2 805.5,386.2 812.5,389.2 817.5,393.2 820.5,394.2 836.5,406.2 848.8,417.5 858.8,428.5 868.8,441.5 875.8,452.5 876.8,455.5 878.7,457.5 887.7,476.5 888.8,481.5 892.7,490.5 892.8,493.5 893.7,494.5 895.8,504.5 896.7,505.5 897.8,515.5 898.7,516.5 898.7,523.5 899.7,524.5 900.7,544.5 899.7,563.5 898.7,564.5 897.7,576.5 896.7,577.5 896.6,581.5 895.7,582.5 893.6,593.5 886.6,613.5 876.5,633.5 860.5,656.4 848.5,669.2 835.6,680.5 821.3,690.5 807.0,698.5 790.9,705.5 775.5,710.5 757.1,714.5 738.5,716.5" fill="rgb(144,144,144)"/><polygon points="730.5,715.5 712.5,714.8 695.6,712.5 678.4,708.5 663.2,703.5 646.9,696.5 632.3,688.5 617.3,678.5 603.9,667.5 591.5,655.3 580.5,642.2 570.5,627.7 562.5,613.4 555.5,597.6 550.5,582.5 546.5,564.8 544.5,548.0 544.2,531.5 545.5,515.1 548.5,498.7 553.5,481.8 558.5,469.5 568.4,450.5 579.4,434.5 590.3,422.5 590.4,421.5 607.5,405.4 619.5,396.3 645.5,381.3 647.5,381.3 657.5,376.3 671.5,372.3 672.5,371.3 675.5,371.2 676.5,370.3 679.5,370.2 684.5,368.3 688.5,368.2 689.5,367.3 703.5,366.2 704.5,365.3 738.5,365.2 739.5,366.2 753.5,367.3 754.5,368.2 758.5,368.2 763.5,370.2 766.5,370.2 767.5,371.2 770.5,371.2 771.5,372.2 785.5,376.2 803.5,384.2 805.5,386.2 812.5,389.2 817.5,393.2 820.5,394.2 836.5,406.2 850.7,419.5 850.8,420.5 862.8,433.5 872.7,447.5 884.7,469.5 884.8,471.5 887.7,476.5 888.8,481.5 891.7,487.5 892.7,493.5 894.7,497.5 894.7,500.5 895.7,501.5 895.7,504.5 896.7,505.5 897.7,515.5 898.7,516.5 898.7,523.5 899.7,524.5 899.7,535.5 900.6,536.5 900.6,550.5 899.7,551.5 899.6,563.5 898.7,564.5 898.6,570.5 897.7,571.5 897.6,576.5 896.7,577.5 896.6,581.5 895.7,582.5 893.6,593.5 888.6,608.5 876.5,633.5 866.5,648.4 855.5,661.5 844.3,672.5 830.5,683.5 814.6,693.5 798.3,701.5 781.9,707.5 766.7,711.5 747.9,714.5 730.5,715.5" fill="rgb(149,149,149)"/><polygon points="742.5,713.5 724.5,713.9 707.5,712.6 689.5,709.6 674.2,705.5 657.7,699.5 642.8,692.5 627.5,683.5 613.6,673.5 600.5,662.2 588.5,649.6 577.5,635.6 568.5,621.6 560.5,606.2 554.5,591.2 549.5,574.2 546.5,558.3 545.0,541.5 545.3,524.5 547.5,505.8 550.5,492.5 556.5,474.5 562.5,461.5 568.5,450.5 579.4,434.5 590.4,422.5 590.4,421.5 599.5,412.4 619.5,396.4 630.5,389.3 645.5,381.3 647.5,381.3 657.5,376.3 671.5,372.3 672.5,371.3 675.5,371.3 676.5,370.3 679.5,370.3 684.5,368.3 688.5,368.3 689.5,367.3 694.5,367.3 695.5,366.3 703.5,366.3 704.5,365.3 738.5,365.3 739.5,366.2 746.5,366.3 747.5,367.2 758.5,368.3 763.5,370.2 766.5,370.3 767.5,371.2 770.5,371.3 771.5,372.2 785.5,376.3 788.5,378.2 790.5,378.3 797.5,382.2 799.5,382.3 803.5,384.3 805.5,386.2 812.5,389.3 817.5,393.2 823.5,396.3 836.5,406.3 850.7,419.5 850.8,420.5 862.7,433.5 872.7,447.5 873.7,450.5 878.7,457.5 887.7,476.5 894.7,497.5 894.7,500.5 896.7,505.5 896.7,509.5 897.7,510.5 897.7,515.5 898.7,516.5 899.7,535.5 900.6,536.5 900.6,550.5 899.7,551.5 899.6,563.5 898.7,564.5 898.6,570.5 897.6,571.5 897.6,576.5 896.6,577.5 896.6,581.5 895.6,582.5 893.6,593.5 886.5,613.5 878.5,629.5 864.5,650.3 852.5,663.8 839.7,675.5 824.5,686.5 810.7,694.5 795.3,701.5 777.5,707.5 759.5,711.5 742.5,713.5" fill="rgb(154,154,154)"/><polygon points="745.5,711.6 728.5,712.2 711.5,711.2 693.5,708.5 677.5,704.5 660.4,698.5 645.1,691.5 629.5,682.5 615.4,672.5 601.5,660.5 589.5,648.0 578.5,634.0 569.5,620.1 561.5,604.6 555.5,589.8 550.5,572.8 547.5,557.0 546.0,540.5 546.2,523.5 548.5,504.2 551.5,490.9 556.5,475.5 562.5,461.8 570.5,447.5 579.5,434.5 590.4,422.5 590.5,421.5 599.5,412.4 619.5,396.4 630.5,389.4 645.5,381.4 647.5,381.3 657.5,376.3 671.5,372.3 672.5,371.3 675.5,371.3 676.5,370.3 679.5,370.3 684.5,368.3 688.5,368.3 689.5,367.3 694.5,367.3 695.5,366.3 703.5,366.3 704.5,365.3 738.5,365.3 739.5,366.3 746.5,366.3 747.5,367.3 758.5,368.3 763.5,370.3 766.5,370.3 767.5,371.3 770.5,371.3 771.5,372.3 785.5,376.3 788.5,378.3 790.5,378.3 797.5,382.3 799.5,382.3 803.5,384.3 805.5,386.3 812.5,389.3 817.5,393.3 823.5,396.3 836.5,406.3 850.7,419.5 850.7,420.5 862.7,433.5 872.7,447.5 873.7,450.5 878.7,457.5 887.7,476.5 894.6,497.5 894.7,500.5 896.6,505.5 896.7,509.5 897.6,510.5 897.7,515.5 898.6,516.5 899.7,535.5 900.6,536.5 900.6,550.5 899.6,551.5 899.6,563.5 898.6,564.5 898.6,570.5 897.6,571.5 897.6,576.5 896.6,577.5 896.6,581.5 895.6,582.5 893.5,593.5 888.5,608.3 881.5,623.5 874.5,635.5 864.5,649.4 853.5,661.8 840.6,673.5 827.1,683.5 811.8,692.5 796.6,699.5 779.0,705.5 761.5,709.5 745.5,711.6" fill="rgb(159,159,159)"/><polygon points="746.5,709.5 729.5,710.2 712.5,709.2 694.5,706.5 678.5,702.5 661.3,696.5 646.1,689.5 630.5,680.5 616.4,670.5 603.5,659.5 591.5,647.1 580.5,633.4 571.5,619.7 563.5,604.7 556.5,587.5 551.5,570.5 548.7,555.5 547.2,538.5 547.4,521.5 549.5,503.6 552.5,490.0 557.5,474.4 563.5,460.6 569.5,449.5 579.5,434.6 590.5,421.5 599.5,412.5 619.5,396.4 630.5,389.4 645.5,381.4 647.5,381.3 657.5,376.4 671.5,372.3 672.5,371.4 675.5,371.3 676.5,370.4 679.5,370.3 684.5,368.4 688.5,368.3 689.5,367.4 694.5,367.3 695.5,366.4 703.5,366.3 704.5,365.3 738.5,365.3 739.5,366.3 746.5,366.3 747.5,367.3 758.5,368.3 763.5,370.3 766.5,370.3 767.5,371.3 770.5,371.3 771.5,372.3 785.5,376.3 788.5,378.3 790.5,378.3 797.5,382.3 799.5,382.3 803.5,384.3 805.5,386.3 812.5,389.3 817.5,393.3 823.5,396.3 836.5,406.3 850.7,419.5 850.7,420.5 862.7,433.5 872.7,447.5 873.7,450.5 878.6,457.5 887.6,476.5 894.6,497.5 894.7,500.5 896.6,505.5 896.6,509.5 897.6,510.5 897.6,515.5 898.6,516.5 899.6,535.5 900.6,536.5 900.6,550.5 899.6,551.5 899.5,563.5 898.6,564.5 898.5,570.5 897.6,571.5 896.5,581.5 895.6,582.5 895.5,585.5 894.6,586.5 894.5,589.5 893.6,590.5 891.5,599.5 885.5,614.5 877.5,629.6 866.5,645.6 855.5,658.3 842.5,670.5 829.3,680.5 814.4,689.5 799.8,696.5 782.5,702.7 764.5,707.1 746.5,709.5" fill="rgb(165,165,165)"/><polygon points="743.5,707.5 726.5,707.8 709.7,706.5 692.5,703.6 677.2,699.5 660.7,693.5 645.8,686.5 630.4,677.5 616.5,667.5 603.5,656.1 591.5,643.5 580.5,629.5 571.6,615.5 563.5,599.7 557.5,584.5 553.2,569.5 550.1,553.5 548.6,536.5 548.8,519.5 550.5,504.5 554.5,486.3 559.5,471.4 566.5,456.0 575.5,440.8 584.5,428.6 593.5,418.5 607.5,405.5 622.5,394.4 635.5,387.4 637.5,385.4 652.5,378.4 654.5,378.4 657.5,376.4 671.5,372.4 672.5,371.4 675.5,371.3 676.5,370.4 679.5,370.3 684.5,368.4 688.5,368.3 689.5,367.4 694.5,367.3 695.5,366.4 703.5,366.3 704.5,365.4 738.5,365.3 739.5,366.3 746.5,366.3 747.5,367.3 758.5,368.3 763.5,370.3 766.5,370.3 767.5,371.3 770.5,371.3 771.5,372.3 785.5,376.3 788.5,378.3 790.5,378.3 797.5,382.3 799.5,382.3 803.5,384.3 805.5,386.3 812.5,389.3 817.5,393.3 823.5,396.4 836.5,406.3 850.6,419.5 850.7,420.5 862.6,433.5 872.6,447.5 873.7,450.5 878.6,457.5 887.6,476.5 894.6,497.5 894.6,500.5 896.6,505.5 896.6,509.5 897.6,510.5 897.6,515.5 898.6,516.5 899.6,535.5 900.5,536.5 900.5,550.5 899.6,551.5 899.5,563.5 898.6,564.5 898.5,570.5 897.6,571.5 897.5,576.5 896.5,577.5 895.5,585.2 890.5,601.2 883.5,617.2 875.5,631.3 864.5,646.5 853.5,658.7 840.3,670.5 826.5,680.5 810.7,689.5 794.7,696.5 779.4,701.5 761.5,705.4 743.5,707.5" fill="rgb(170,170,170)"/><polygon points="748.5,704.6 731.5,705.2 714.5,704.3 696.5,701.6 680.5,697.6 663.5,691.6 648.5,684.7 634.1,676.5 620.5,667.0 607.5,656.1 595.5,644.0 584.5,630.6 575.5,617.2 567.5,602.6 560.5,586.2 555.5,570.2 552.2,554.5 550.4,537.5 550.4,520.5 552.1,503.5 555.5,487.2 560.5,471.6 566.5,457.7 574.5,443.4 583.5,430.5 594.8,417.5 606.5,406.5 619.5,396.5 630.5,389.5 645.5,381.5 647.5,381.4 657.5,376.4 672.5,371.4 675.5,371.4 676.5,370.4 679.5,370.4 684.5,368.4 688.5,368.4 689.5,367.4 694.5,367.4 695.5,366.4 703.5,366.4 704.5,365.4 738.5,365.4 739.5,366.3 746.5,366.4 747.5,367.3 758.5,368.4 763.5,370.3 766.5,370.4 767.5,371.3 770.5,371.4 771.5,372.3 785.5,376.4 788.5,378.3 790.5,378.4 797.5,382.3 799.5,382.4 803.5,384.4 805.5,386.3 812.5,389.4 817.5,393.3 823.5,396.4 836.5,406.4 850.6,419.5 850.7,420.5 862.6,433.5 872.6,447.5 873.6,450.5 878.6,457.5 887.6,476.5 894.6,497.5 894.6,500.5 896.5,505.5 896.6,509.5 897.5,510.5 897.6,515.5 898.5,516.5 899.6,535.5 900.5,536.5 900.5,549.6 899.6,551.5 898.5,569.3 895.5,583.5 890.5,599.4 883.5,615.4 875.5,629.4 865.5,643.3 854.5,655.6 841.5,667.4 827.7,677.5 814.1,685.5 799.0,692.5 781.5,698.5 764.5,702.4 748.5,704.6" fill="rgb(175,175,175)"/><polygon points="749.5,701.6 733.5,702.2 716.5,701.4 699.5,698.9 682.5,694.8 667.0,689.5 651.3,682.5 637.0,674.5 622.5,664.5 609.5,653.7 597.5,641.6 586.7,628.5 577.5,615.0 569.5,600.4 563.4,586.5 558.4,571.5 554.6,554.5 552.6,538.5 552.2,522.5 553.5,505.8 556.3,490.5 560.5,475.5 566.5,460.3 573.5,446.8 581.5,434.4 592.5,420.6 603.5,409.5 625.5,392.5 641.5,383.5 657.5,376.5 672.5,371.4 675.5,371.4 676.5,370.4 679.5,370.4 684.5,368.4 688.5,368.4 689.5,367.4 703.5,366.4 704.5,365.4 738.5,365.4 739.5,366.4 746.5,366.4 747.5,367.4 758.5,368.4 763.5,370.4 766.5,370.4 767.5,371.4 770.5,371.4 771.5,372.4 785.5,376.4 788.5,378.4 790.5,378.4 797.5,382.4 799.5,382.4 803.5,384.4 805.5,386.4 812.5,389.4 817.5,393.4 823.5,396.4 836.5,406.4 850.6,419.5 850.6,420.5 862.6,433.5 872.6,447.5 873.6,450.5 878.6,457.5 887.6,476.5 888.6,481.5 892.5,490.5 892.6,493.5 894.5,497.5 894.6,500.5 896.5,505.5 896.6,509.5 897.5,510.5 898.6,523.5 899.5,524.5 900.4,542.5 899.5,558.7 896.5,576.7 891.5,594.1 885.5,608.8 877.5,623.7 867.5,638.3 856.5,651.1 844.5,662.4 831.3,672.5 816.5,681.6 800.5,689.2 784.5,694.9 767.5,699.0 749.5,701.6" fill="rgb(180,180,180)"/><polygon points="745.5,698.5 729.5,698.7 713.2,697.5 696.5,694.7 680.5,690.4 664.5,684.6 649.6,677.5 635.5,669.2 621.9,659.5 609.1,648.5 597.6,636.5 587.5,623.9 578.5,610.3 570.5,595.2 564.5,580.8 559.5,564.5 556.5,549.5 554.8,533.5 554.7,517.5 556.2,501.5 559.1,486.5 563.5,471.8 569.5,457.2 577.5,442.4 585.6,430.5 595.5,418.5 606.5,407.5 617.5,398.5 632.5,388.5 643.5,382.5 647.5,381.4 652.5,378.5 654.5,378.4 657.5,376.5 672.5,371.5 675.5,371.4 676.5,370.5 679.5,370.4 684.5,368.5 688.5,368.4 689.5,367.5 694.5,367.4 695.5,366.5 703.5,366.4 704.5,365.4 738.5,365.4 739.5,366.4 746.5,366.4 747.5,367.4 758.5,368.4 763.5,370.4 766.5,370.4 767.5,371.4 770.5,371.4 771.5,372.4 785.5,376.4 788.5,378.4 790.5,378.4 797.5,382.4 799.5,382.4 803.5,384.4 805.5,386.4 812.5,389.4 817.5,393.4 823.5,396.4 836.5,406.4 850.6,419.5 850.6,420.5 862.6,433.5 872.6,447.5 884.5,469.5 884.6,471.5 888.5,479.5 888.6,481.5 890.5,484.5 892.5,490.5 892.6,493.5 894.5,497.5 894.6,500.5 895.5,501.5 896.5,509.5 897.5,511.0 897.5,515.5 898.5,517.3 899.8,537.5 899.5,552.2 897.5,567.6 893.5,584.4 887.5,601.1 880.5,615.5 872.5,628.5 862.5,641.5 851.5,653.1 839.5,663.5 825.5,673.3 810.7,681.5 794.5,688.4 778.5,693.4 762.5,696.7 745.5,698.5" fill="rgb(185,185,185)"/><polygon points="748.5,694.5 732.5,694.9 716.5,693.9 700.5,691.4 684.5,687.4 669.5,682.2 654.5,675.4 640.4,667.5 625.9,657.5 613.5,647.1 602.0,635.5 591.5,622.9 582.5,609.7 574.6,595.5 568.5,581.5 563.4,566.5 559.8,550.5 557.7,534.5 557.3,518.5 558.5,502.7 561.2,487.5 565.4,472.5 570.5,459.3 577.5,445.4 586.4,431.5 596.0,419.5 606.7,408.5 618.6,398.5 631.7,389.5 644.3,382.5 657.8,376.5 672.5,371.5 675.5,371.5 676.5,370.5 679.5,370.4 684.5,368.5 688.5,368.4 689.5,367.5 703.5,366.4 704.5,365.5 738.5,365.5 739.5,366.4 746.5,366.4 747.5,367.4 758.5,368.5 763.5,370.4 766.5,370.4 767.5,371.4 770.5,371.4 771.5,372.4 785.5,376.4 788.5,378.4 790.5,378.4 797.5,382.4 799.5,382.5 803.5,384.4 805.5,386.4 812.5,389.4 817.5,393.4 823.5,396.5 836.5,406.4 850.5,419.5 850.6,420.5 862.5,433.5 872.5,447.5 873.6,450.5 878.5,457.5 887.5,476.5 888.5,481.5 892.5,491.0 896.5,507.4 898.5,521.2 899.2,541.5 897.5,561.2 894.5,575.9 889.5,591.9 883.5,605.9 875.5,620.2 865.5,634.3 854.5,646.7 841.5,658.4 827.6,668.5 813.7,676.5 798.0,683.5 782.5,688.7 765.5,692.5 748.5,694.5" fill="rgb(190,190,190)"/><polygon points="742.5,690.5 726.5,690.3 710.5,688.5 695.1,685.5 679.5,680.9 663.5,674.6 649.5,667.5 636.5,659.5 623.5,649.7 611.5,639.0 600.5,627.1 590.8,614.5 582.5,601.4 575.5,587.9 569.5,573.0 565.0,557.5 562.1,542.5 560.6,526.5 560.7,511.5 562.5,495.5 565.4,481.5 569.5,468.1 575.5,453.7 582.6,440.5 591.5,427.5 601.6,415.5 611.8,405.5 624.3,395.5 636.5,387.5 649.7,380.5 664.3,374.5 680.9,369.5 694.5,367.5 696.2,366.5 703.5,366.5 704.5,365.5 738.5,365.5 739.5,366.4 746.5,366.5 747.5,367.4 758.5,368.5 763.5,370.4 766.5,370.5 767.5,371.4 770.5,371.5 785.5,376.5 788.5,378.4 790.5,378.5 797.5,382.4 799.5,382.5 803.5,384.5 805.5,386.4 812.5,389.5 817.5,393.4 823.5,396.5 836.5,406.5 850.5,419.5 850.6,420.5 862.5,433.5 872.5,447.5 880.5,461.6 887.5,477.4 892.5,492.6 896.5,511.4 898.1,528.5 898.0,544.5 896.4,559.5 892.5,577.1 887.5,591.9 880.5,607.0 871.5,621.9 861.5,634.9 850.4,646.5 837.5,657.5 824.3,666.5 809.5,674.5 793.5,681.1 777.5,685.8 760.5,689.0 742.5,690.5" fill="rgb(195,195,195)"/><polygon points="744.5,685.5 729.5,685.4 713.5,683.8 697.5,680.8 682.5,676.4 667.5,670.6 653.1,663.5 639.5,655.2 626.5,645.5 614.5,634.7 603.5,622.9 594.0,610.5 585.8,597.5 578.6,583.5 573.0,569.5 568.6,554.5 565.8,539.5 564.4,524.5 564.5,508.5 566.2,493.5 569.4,478.5 573.5,465.4 579.5,451.4 586.6,438.5 595.5,425.6 605.0,414.5 616.4,403.5 627.9,394.5 640.4,386.5 654.1,379.5 669.3,373.5 683.1,369.5 698.8,366.5 707.4,365.5 738.2,365.5 739.5,366.5 753.1,367.5 754.5,368.5 766.5,370.5 767.5,371.5 770.5,371.5 785.5,376.5 797.5,382.5 801.5,383.5 805.5,386.5 812.5,389.5 827.5,399.5 836.5,406.5 850.5,419.8 862.5,433.7 873.5,449.8 881.5,464.8 887.5,479.3 892.5,496.0 895.5,512.1 896.8,527.5 896.5,543.5 894.5,559.6 890.5,576.4 885.5,590.5 878.5,605.1 869.5,619.6 859.5,632.2 848.5,643.5 836.5,653.5 823.1,662.5 808.0,670.5 793.1,676.5 777.5,681.0 761.5,684.0 744.5,685.5" fill="rgb(200,200,200)"/><polygon points="751.5,679.6 736.5,680.0 720.5,678.9 705.5,676.5 690.5,672.8 675.5,667.6 662.0,661.5 648.5,654.0 635.5,645.1 623.5,635.3 612.5,624.4 602.5,612.6 593.5,599.8 585.9,586.5 579.6,572.5 574.8,558.5 571.4,544.5 569.3,529.5 568.6,514.5 569.4,499.5 571.6,485.5 575.4,470.5 580.5,456.8 586.5,444.4 594.4,431.5 603.6,419.5 614.0,408.5 625.6,398.5 636.9,390.5 650.9,382.5 664.4,376.5 679.3,371.5 691.8,368.5 704.6,366.5 724.5,365.5 743.6,366.5 756.5,368.5 776.1,373.5 792.2,379.5 808.5,387.5 821.5,395.5 833.5,404.5 846.7,416.5 858.5,429.5 867.5,441.6 876.5,456.6 883.5,471.7 888.5,485.9 892.5,502.5 894.5,517.6 894.9,534.5 893.5,551.5 890.5,566.5 885.5,582.6 879.5,596.3 872.5,608.8 863.5,621.5 853.5,633.0 841.5,644.1 828.5,653.7 814.5,661.9 800.2,668.5 784.5,673.8 768.3,677.5 751.5,679.6" fill="rgb(205,205,205)"/><polygon points="745.5,673.5 730.5,673.3 714.6,671.5 699.9,668.5 685.5,664.2 671.2,658.5 657.5,651.5 644.6,643.5 632.5,634.3 620.6,623.5 610.6,612.5 601.5,600.5 593.5,587.6 586.5,573.5 581.5,560.5 577.5,546.3 574.8,531.5 573.7,516.5 574.0,502.5 575.6,488.5 578.9,473.5 583.5,459.8 589.5,446.5 596.5,434.4 605.1,422.5 613.9,412.5 624.6,402.5 636.3,393.5 649.3,385.5 663.9,378.5 677.8,373.5 693.5,369.5 706.1,367.5 721.5,366.4 737.5,366.8 752.0,368.5 770.3,372.5 785.5,377.5 801.4,384.5 815.6,392.5 828.6,401.5 840.5,411.5 851.5,422.7 860.5,433.6 870.5,448.4 878.5,463.6 884.5,478.7 888.5,492.6 891.5,509.2 892.6,524.5 892.1,539.5 890.1,554.5 886.4,569.5 881.5,583.2 874.5,597.6 866.5,610.4 856.5,623.0 845.5,634.1 833.5,643.9 820.5,652.4 806.8,659.5 791.5,665.5 777.2,669.5 761.5,672.3 745.5,673.5" fill="rgb(210,210,210)"/><polygon points="757.5,665.6 743.5,666.3 728.5,665.7 713.5,663.8 699.5,660.6 685.5,656.1 672.0,650.5 658.7,643.5 646.4,635.5 634.9,626.5 624.2,616.5 614.3,605.5 605.4,593.5 597.6,580.5 591.5,567.8 586.5,554.4 582.8,540.5 580.5,526.5 579.5,512.5 579.9,498.5 581.7,484.5 585.0,470.5 589.5,457.5 595.5,444.5 602.5,432.7 610.7,421.5 619.7,411.5 629.5,402.5 641.4,393.5 652.9,386.5 665.2,380.5 678.4,375.5 693.1,371.5 709.5,368.8 724.5,367.9 741.0,368.5 755.9,370.5 772.8,374.5 787.4,379.5 802.7,386.5 816.5,394.5 829.1,403.5 840.7,413.5 851.5,424.8 861.5,437.6 869.5,450.2 876.5,463.9 882.5,479.6 886.4,494.5 888.8,509.5 889.6,524.5 888.8,539.5 886.5,553.9 882.5,568.7 877.1,582.5 870.3,595.5 861.5,608.7 851.5,620.5 841.0,630.5 829.4,639.5 816.5,647.5 802.5,654.3 788.1,659.5 772.5,663.4 757.5,665.6" fill="rgb(215,215,215)"/><polygon points="755.5,657.6 741.5,658.0 727.5,657.2 713.5,655.1 699.5,651.7 686.5,647.3 673.2,641.5 660.5,634.5 648.6,626.5 637.5,617.5 627.5,607.8 618.5,597.4 610.5,586.3 603.5,574.5 597.5,561.8 592.7,548.5 589.3,535.5 587.2,522.5 586.3,508.5 586.9,494.5 588.7,481.5 591.8,468.5 596.3,455.5 601.5,444.4 608.5,432.5 616.6,421.5 625.7,411.5 635.6,402.5 646.4,394.5 658.0,387.5 670.6,381.5 684.5,376.5 696.1,373.5 710.5,371.1 725.5,370.1 740.5,370.5 756.1,372.5 773.1,376.5 787.5,381.5 800.8,387.5 814.7,395.5 827.4,404.5 838.9,414.5 849.3,425.5 858.5,437.2 866.5,449.8 873.5,463.7 878.5,476.7 882.6,491.5 885.0,506.5 885.8,521.5 884.9,536.5 882.6,550.5 878.7,564.5 873.5,577.7 866.5,590.9 858.5,602.7 849.4,613.5 838.5,623.9 826.5,633.0 813.5,640.8 799.5,647.4 785.5,652.2 770.5,655.6 755.5,657.6" fill="rgb(220,220,220)"/><polygon points="761.5,647.6 748.5,648.4 734.5,648.1 720.7,646.5 707.5,643.7 694.5,639.8 681.5,634.5 658.5,621.5 637.8,604.5 620.5,584.2 607.3,561.5 602.4,549.5 598.4,536.5 595.8,523.5 594.5,510.9 594.4,498.5 595.6,485.5 598.1,472.5 601.7,460.5 606.6,448.5 612.5,437.5 619.9,426.5 628.2,416.5 637.4,407.5 647.3,399.5 657.9,392.5 669.2,386.5 681.2,381.5 694.5,377.4 709.4,374.5 722.5,373.2 737.5,373.2 751.5,374.5 766.7,377.5 780.2,381.5 794.9,387.5 808.2,394.5 820.3,402.5 832.7,412.5 843.5,423.2 852.5,434.1 860.5,446.0 867.5,458.9 872.8,471.5 877.0,485.5 879.7,499.5 880.9,513.5 880.6,527.5 878.8,541.5 875.5,555.3 870.7,568.5 864.5,581.1 857.5,592.1 849.3,602.5 839.5,612.6 828.5,621.6 816.5,629.5 803.5,636.2 789.7,641.5 775.5,645.3 761.5,647.6" fill="rgb(225,225,225)"/><polygon points="762.5,636.6 737.5,637.2 712.5,633.4 688.5,625.2 665.4,612.5 645.5,596.4 636.5,586.8 628.5,576.6 615.7,554.5 607.6,531.5 603.9,507.5 604.9,483.5 610.5,460.1 620.5,438.5 627.5,428.0 635.4,418.5 653.1,402.5 663.7,395.5 674.5,389.8 697.5,381.4 711.5,378.6 724.5,377.2 738.5,377.2 752.5,378.5 767.5,381.5 780.5,385.4 804.5,396.5 815.5,403.5 827.1,412.5 837.5,422.4 846.5,432.9 854.5,444.3 861.5,456.9 866.9,469.5 871.0,482.5 873.6,495.5 874.9,509.5 874.7,522.5 873.2,535.5 870.4,547.5 865.9,560.5 860.5,571.9 853.4,583.5 845.5,593.6 835.9,603.5 825.5,612.1 814.5,619.3 802.5,625.5 789.5,630.6 776.5,634.2 762.5,636.6" fill="rgb(230,230,230)"/><polygon points="753.5,624.5 729.5,623.3 706.5,618.0 684.5,608.7 664.3,595.5 646.5,578.6 632.5,559.5 622.4,538.5 616.6,516.5 615.0,493.5 617.8,471.5 620.9,460.5 625.3,449.5 636.5,430.5 651.5,413.8 669.1,400.5 689.5,390.5 712.5,384.3 725.5,382.7 738.5,382.5 763.5,385.6 787.7,393.5 799.9,399.5 811.2,406.5 821.7,414.5 831.3,423.5 839.5,432.7 847.3,443.5 853.7,454.5 859.2,466.5 863.2,478.5 865.8,490.5 867.3,503.5 867.3,515.5 866.1,527.5 863.6,539.5 859.7,551.5 854.6,562.5 848.5,572.8 841.5,582.2 832.8,591.5 823.5,599.5 813.5,606.4 802.5,612.4 790.5,617.4 778.5,621.0 766.5,623.3 753.5,624.5" fill="rgb(235,235,235)"/><polygon points="763.5,608.6 741.5,609.1 720.5,605.9 700.5,599.1 681.1,588.5 663.8,574.5 650.0,558.5 639.3,540.5 632.0,520.5 628.7,499.5 629.4,479.5 634.2,459.5 642.6,441.5 654.5,425.3 669.6,411.5 687.5,400.7 707.1,393.5 718.5,391.1 730.5,389.8 753.5,390.8 776.9,396.5 798.5,406.4 818.1,420.5 834.1,437.5 846.5,457.5 854.3,478.5 857.7,500.5 857.6,512.5 856.3,523.5 850.2,544.5 845.4,554.5 839.5,564.1 832.5,573.0 824.5,581.1 806.5,594.3 786.1,603.5 763.5,608.6" fill="rgb(240,240,240)"/><polygon points="758.5,590.5 739.5,590.2 721.5,586.6 703.5,579.6 687.5,569.9 673.3,557.5 661.5,542.6 652.9,526.5 647.5,509.4 645.4,491.5 646.9,473.5 651.9,456.5 660.3,440.5 671.5,427.0 685.5,415.6 700.7,407.5 718.5,401.9 738.5,399.7 758.8,401.5 778.5,407.1 797.0,416.5 813.5,429.4 826.7,444.5 836.9,462.5 843.0,481.5 845.1,501.5 842.9,520.5 836.5,538.9 826.5,555.1 812.5,569.4 796.5,579.9 778.5,587.0 758.5,590.5" fill="rgb(245,245,245)"/><polygon points="759.5,566.6 744.5,566.6 729.5,563.8 715.5,558.6 702.5,551.0 691.2,541.5 681.5,529.7 674.5,517.3 669.8,503.5 667.8,488.5 668.7,474.5 672.5,460.7 678.6,448.5 687.3,437.5 697.7,428.5 710.5,421.2 724.5,416.6 740.5,414.5 757.5,415.8 773.5,420.2 788.1,427.5 801.2,437.5 811.9,449.5 820.2,463.5 825.3,478.5 827.2,494.5 825.7,509.5 820.9,524.5 813.1,537.5 802.5,548.8 789.8,557.5 775.5,563.5 759.5,566.6" fill="rgb(250,250,250)"/><polygon points="761.5,530.5 752.5,531.3 743.8,530.5 735.5,528.3 727.3,524.5 720.0,519.5 713.5,513.1 708.2,505.5 704.6,497.5 702.7,489.5 702.3,480.5 703.6,472.5 706.5,464.5 710.9,457.5 716.5,451.5 723.5,446.5 731.5,442.8 740.5,440.7 750.5,440.4 760.5,442.1 769.5,445.5 777.7,450.5 785.4,457.5 791.2,465.5 795.3,474.5 797.2,483.5 797.3,492.5 795.5,501.5 791.5,510.3 786.0,517.5 778.9,523.5 770.5,527.9 761.5,530.5" fill="rgb(255,255,255)"/></g>
</g>
<path d="M721.5 439.5L424.8 543.8M721.5 439.5L1018.1 543.8M730.8 442.8L433.1 549.7M712.1 442.8L1009.8 549.7M740.4 446.1L441.7 555.7M702.5 446.1L1001.2 555.7M750.1 449.6L450.5 562.0M692.8 449.6L992.4 562.0M760.1 453.1L459.6 568.4M682.8 453.1L983.3 568.4M770.3 456.7L469.0 575.0M672.6 456.7L973.9 575.0M780.7 460.3L478.6 581.8M662.2 460.3L964.3 581.8M791.4 464.1L488.6 588.8M651.5 464.1L954.3 588.8M802.3 467.9L498.8 596.1M640.6 467.9L944.1 596.1M813.4 471.8L509.4 603.5M629.5 471.8L933.5 603.5M824.8 475.8L520.3 611.3M618.1 475.8L922.6 611.3M836.5 480.0L531.6 619.2M606.4 480.0L911.3 619.2M848.5 484.2L543.3 627.5M594.4 484.2L899.6 627.5M860.7 488.5L555.3 636.0M582.2 488.5L887.6 636.0M873.3 492.9L567.8 644.8M569.6 492.9L875.1 644.8M886.2 497.4L580.7 653.9M556.7 497.4L862.2 653.9M899.3 502.0L594.1 663.4M543.6 502.0L848.8 663.4M912.9 506.8L608.0 673.2M530.0 506.8L834.9 673.2M926.7 511.7L622.4 683.3M516.2 511.7L820.5 683.3M941.0 516.7L637.3 693.9M501.9 516.7L805.6 693.9M955.6 521.8L652.8 704.9M487.3 521.8L790.1 704.9M970.6 527.1L669.0 716.2M472.3 527.1L773.9 716.2M986.0 532.5L685.8 728.1M456.9 532.5L757.1 728.1M1001.8 538.1L703.2 740.4M441.1 538.1L739.7 740.4M1018.1 543.8L721.5 753.3M424.8 543.8L721.5 753.3" stroke="#404040" stroke-width="1" fill="none" shape-rendering="crispEdges" clip-path="url(#front)"/></g></svg>
<div class="t" style="left:700px;top:878px;font-size:10.5px;font-weight:bold;color:#f0f0f0;">persp</div>
<svg style="left:328px;top:846px" width="32" height="32" viewBox="0 0 32 32"><path d="M15 23V6" stroke="#2fd82f" stroke-width="1"/><path d="M15 23l9-2" stroke="#e03030" stroke-width="1"/><path d="M15 23l-8 2" stroke="#3030ff" stroke-width="1"/><text x="12" y="7" font-size="8" fill="#2fd82f">y</text><text x="24" y="25" font-size="8" fill="#e03030">x</text><text x="1" y="27" font-size="8" fill="#3030ff">z</text></svg>
</body></html>
